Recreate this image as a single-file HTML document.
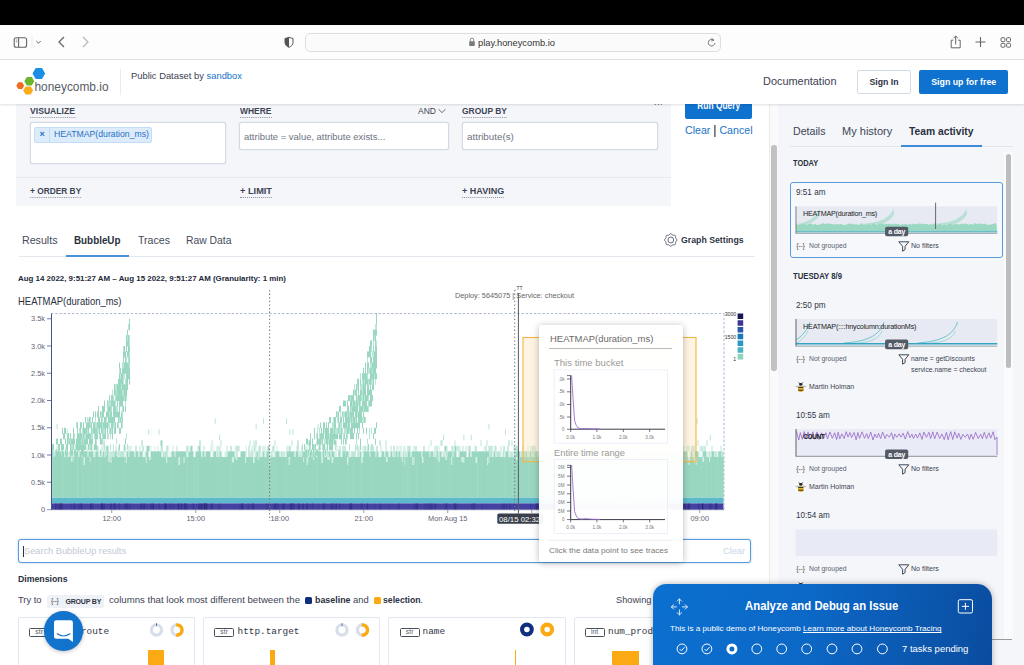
<!DOCTYPE html>
<html lang="en">
<head>
<meta charset="utf-8">
<title>Honeycomb BubbleUp</title>
<style>
*{box-sizing:border-box;margin:0;padding:0}
html,body{width:1024px;height:665px;overflow:hidden;background:#fff}
body{font-family:"Liberation Sans",sans-serif;color:#32384a;position:relative;font-size:10px}
.abs{position:absolute}
.t{position:absolute;white-space:nowrap;line-height:1}
#blackbar{left:0;top:0;width:1024px;height:25px;background:#000}
#safari{left:0;top:25px;width:1024px;height:35px;background:#fdfdfd;border-bottom:1px solid #e2e2e2}
#urlbar{left:305px;top:33px;width:416px;height:19px;border:1px solid #dedede;border-radius:5px;background:#fbfbfb}
#header{left:0;top:60px;width:1024px;height:43.7px;background:#fff;box-shadow:0 1px 2px rgba(0,0,0,.12);z-index:20}
#qb{left:16px;top:103px;width:655px;height:103px;background:#f4f6fa}
.lbl{font-size:9.3px;font-weight:bold;color:#3d4454;border-bottom:1px dotted #8a90a0;padding-bottom:1px}
.inp{position:absolute;background:#fff;border:1px solid #d3dae5;border-radius:2.5px;box-shadow:0 0 1px rgba(140,155,180,.5)}
.ph{font-size:9.6px;color:#6d7383}
a{color:#1a73c8;text-decoration:none}
.tab{font-size:11px;color:#454b5b}
.rtab{font-size:11.8px;color:#3d4454}
.day{font-size:9.2px;font-weight:bold;color:#2a3040}
.tm{font-size:9px;color:#2f3545}
.mt{font-size:7.2px;color:#5a6070}
.bt{font-size:9.5px;color:#3d4454}
</style>
</head>
<body>
<!-- top chrome -->
<div id="blackbar" class="abs"></div>
<div id="safari" class="abs"></div>
<div id="urlbar" class="abs"></div>
<div class="t" style="transform:scaleX(0.9807);transform-origin:left center;left:478px;top:38px;font-size:9.5px;color:#333">play.honeycomb.io</div>
<svg class="abs" style="left:0;top:25px" width="1024" height="35" viewBox="0 25 1024 35" fill="none" stroke="#666" stroke-width="1.1">
  <rect x="14.2" y="37.8" width="12.4" height="9.4" rx="2"/><line x1="18.6" y1="37.8" x2="18.6" y2="47.2"/>
  <line x1="15.8" y1="40" x2="17.3" y2="40" stroke-width=".7"/><line x1="15.8" y1="41.8" x2="17.3" y2="41.8" stroke-width=".7"/>
  <line x1="32" y1="36" x2="32" y2="48" stroke="#ebebeb" stroke-width="1"/>
  <path d="M36.3 41 L38.5 43.2 L40.7 41" stroke-width="1"/>
  <path d="M64 37 L59 42 L64 47" stroke-width="1.3"/>
  <path d="M83 37 L88 42 L83 47" stroke="#b5b5b5" stroke-width="1.2"/>
  <!-- shield -->
  <path d="M289 37.2 C287.5 38 286.3 38.3 285 38.4 V42.5 C285 45 287 46.5 289 47.3 C291 46.5 293 45 293 42.5 V38.4 C291.7 38.3 290.5 38 289 37.2 Z" stroke="#555" stroke-width="1"/>
  <path d="M289 37.2 C287.5 38 286.3 38.3 285 38.4 V42.5 C285 45 287 46.5 289 47.3 Z" fill="#555" stroke="none"/>
  <!-- lock -->
  <rect x="469.2" y="41.3" width="5.6" height="4.7" rx=".8" fill="#7a7a7a" stroke="none"/>
  <path d="M470.3 41.3 V39.8 A1.7 1.7 0 0 1 473.7 39.8 V41.3" stroke="#7a7a7a" stroke-width=".9"/>
  <!-- reload -->
  <path d="M713.8 40.2 A3.3 3.3 0 1 0 714.9 43" stroke="#6a6a6a" stroke-width=".9"/>
  <path d="M711.6 38.2 L714 40.3 L711.2 41" stroke="#6a6a6a" stroke-width=".8"/>
  <!-- share -->
  <path d="M953.2 40.2 H951.2 V47.8 H960.2 V40.2 H958.2" stroke-width="1"/>
  <path d="M955.7 44.5 V36.2 M953.5 38.2 L955.7 36 L957.9 38.2" stroke-width="1"/>
  <!-- plus -->
  <path d="M975.5 42 H985.5 M980.5 37 V47" stroke-width="1.1"/>
  <!-- grid -->
  <rect x="1001" y="37.7" width="3.9" height="3.9" rx="1" stroke-width="1"/><rect x="1006.6" y="37.7" width="3.9" height="3.9" rx="1" stroke-width="1"/>
  <rect x="1001" y="43.3" width="3.9" height="3.9" rx="1" stroke-width="1"/><rect x="1006.6" y="43.3" width="3.9" height="3.9" rx="1" stroke-width="1"/>
</svg>

<!-- site header -->
<div id="header" class="abs"></div>
<div class="abs" style="z-index:21;left:0;top:60px;width:1024px;height:43px">
  <svg class="abs" style="left:14px;top:6px" width="100" height="32" viewBox="14 66 100 32">
    <polygon points="32.5,73.5 35.7,68 42,68 45.2,73.5 42,79 35.7,79" fill="#1b8fe8"/>
    <polygon points="24.3,81.2 26.8,76.9 31.8,76.9 34.3,81.2 31.8,85.5 26.8,85.5" fill="#6bb72b"/>
    <polygon points="16.3,85.7 18.3,82.3 22.2,82.3 24.2,85.7 22.2,89.1 18.3,89.1" fill="#f26b21"/>
    <polygon points="23.2,90.5 25.6,86.4 30.7,86.4 33.1,90.5 30.7,94.6 25.6,94.6" fill="#fbaa19"/>
    <text x="34.5" y="91.3" font-family="Liberation Sans, sans-serif" font-size="13.2" fill="#575c66" textLength="74" lengthAdjust="spacingAndGlyphs">honeycomb.io</text>
  </svg>
  <div class="abs" style="left:120px;top:9px;width:1px;height:26px;background:#ebebeb"></div>
  <div class="t" style="transform:scaleX(0.9770);transform-origin:left center;left:131px;top:11px;font-size:9.6px;color:#3c4252">Public Dataset by <a>sandbox</a></div>
  <div class="t" style="transform:scaleX(0.9932);transform-origin:left center;left:763px;top:16px;font-size:11px;color:#3c4252">Documentation</div>
  <div class="abs" style="left:856.5px;top:10px;width:54px;height:24px;border:1px solid #d3dbe8;border-radius:2px;background:#fff"></div>
  <div class="t" style="transform:scaleX(0.9156);transform-origin:center center;left:856.5px;top:17px;width:54px;text-align:center;font-size:9.5px;font-weight:bold;color:#2c3242">Sign In</div>
  <div class="abs" style="left:918.5px;top:10px;width:89.5px;height:24px;border-radius:2px;background:#0f72cf"></div>
  <div class="t" style="transform:scaleX(0.9259);transform-origin:center center;left:918.5px;top:17px;width:89.5px;text-align:center;font-size:9.5px;font-weight:bold;color:#fff">Sign up for free</div>
</div>

<!-- query builder -->
<div id="qb" class="abs"></div>
<div class="abs" style="left:16px;top:177px;width:655px;height:1px;background:#e4e8ef"></div>
<div class="t lbl" style="transform:scaleX(0.9266);transform-origin:left center;left:30px;top:106.5px">VISUALIZE</div>
<div class="t lbl" style="transform:scaleX(0.9102);transform-origin:left center;left:239.5px;top:106.5px">WHERE</div>
<div class="t lbl" style="transform:scaleX(0.9105);transform-origin:left center;left:462px;top:106.5px">GROUP BY</div>
<div class="t" style="transform:scaleX(0.9165);transform-origin:left center;left:417.5px;top:106.5px;font-size:9.3px;color:#3d4454">AND</div>
<svg class="abs" style="left:437px;top:108px" width="10" height="6" viewBox="0 0 10 6" fill="none" stroke="#555b6b" stroke-width=".9"><path d="M1.5 1.2 L5 4.6 L8.5 1.2"/></svg>
<div class="t" style="left:654px;top:97.7px;font-size:9px;color:#555;letter-spacing:.5px">...</div>
<div class="inp" style="left:29.7px;top:122px;width:196px;height:42px"></div>
<div class="abs" style="left:34.4px;top:127px;width:117.6px;height:16px;background:#dcecfb;border:1px solid #c3ddf7;border-radius:2px"></div>
<div class="abs" style="left:49px;top:127px;width:1px;height:16px;background:#c5dcf5"></div>
<div class="t" style="left:39.5px;top:129.5px;font-size:9px;font-weight:bold;color:#2a6fc4">×</div>
<div class="t" style="transform:scaleX(0.9558);transform-origin:left center;left:54px;top:130px;font-size:9.1px;color:#2a6fc4">HEATMAP(duration_ms)</div>
<div class="inp" style="left:239px;top:122px;width:209.5px;height:28px"></div>
<div class="t ph" style="transform:scaleX(0.9832);transform-origin:left center;left:244px;top:131.5px">attribute = value, attribute exists...</div>
<div class="inp" style="left:461.7px;top:122px;width:196px;height:28px"></div>
<div class="t ph" style="transform:scaleX(1.0227);transform-origin:left center;left:466.5px;top:131.5px">attribute(s)</div>
<div class="t lbl" style="transform:scaleX(0.8968);transform-origin:left center;left:30px;top:187px">+ ORDER BY</div>
<div class="t lbl" style="transform:scaleX(0.9913);transform-origin:left center;left:239.5px;top:187px">+ LIMIT</div>
<div class="t lbl" style="transform:scaleX(0.9705);transform-origin:left center;left:462px;top:187px">+ HAVING</div>
<div class="abs" style="left:684.5px;top:95px;width:67.5px;height:23.5px;background:#0f72cf;border-radius:2px"></div>
<div class="t" style="transform:scaleX(0.8411);transform-origin:center center;left:684.5px;top:100.8px;width:67.5px;text-align:center;font-size:10px;font-weight:bold;color:#fff">Run Query</div>
<div class="t" style="transform:scaleX(0.9395);transform-origin:left center;left:684.5px;top:125px;font-size:11.3px;color:#222"><a>Clear</a> <span style="font-size:13px;line-height:0;color:#222">|</span> <a>Cancel</a></div>

<!-- results tabs -->
<div class="abs" style="left:19px;top:256px;width:736px;height:1px;background:#e3e7ee"></div>
<div class="abs" style="left:66px;top:254.5px;width:63px;height:2px;background:#4a90d9"></div>
<div class="t tab" style="transform:scaleX(0.9676);transform-origin:left center;left:22px;top:234.5px">Results</div>
<div class="t tab" style="transform:scaleX(0.8950);transform-origin:left center;left:74px;top:234.5px;font-weight:bold;font-size:11px;color:#2a3040">BubbleUp</div>
<div class="t tab" style="transform:scaleX(0.9633);transform-origin:left center;left:137.5px;top:234.5px">Traces</div>
<div class="t tab" style="transform:scaleX(0.9421);transform-origin:left center;left:186px;top:234.5px">Raw Data</div>
<svg class="abs" style="left:663px;top:233px" width="16" height="14" viewBox="0 0 16 14" fill="none" stroke="#555b6a" stroke-width=".9"><circle cx="7.8" cy="7" r="2.9"/><path d="M14.20 7.00 L13.95 7.65 L13.36 8.18 L12.77 8.61 L12.47 9.08 L12.50 9.71 L12.61 10.50 L12.51 11.24 L12.04 11.71 L11.30 11.81 L10.51 11.70 L9.88 11.67 L9.41 11.97 L8.98 12.56 L8.45 13.15 L7.80 13.40 L7.15 13.15 L6.62 12.56 L6.19 11.97 L5.72 11.67 L5.09 11.70 L4.30 11.81 L3.56 11.71 L3.09 11.24 L2.99 10.50 L3.10 9.71 L3.13 9.08 L2.83 8.61 L2.24 8.18 L1.65 7.65 L1.40 7.00 L1.65 6.35 L2.24 5.82 L2.83 5.39 L3.13 4.92 L3.10 4.29 L2.99 3.50 L3.09 2.76 L3.56 2.29 L4.30 2.19 L5.09 2.30 L5.72 2.33 L6.19 2.03 L6.62 1.44 L7.15 0.85 L7.80 0.60 L8.45 0.85 L8.98 1.44 L9.41 2.03 L9.88 2.33 L10.51 2.30 L11.30 2.19 L12.04 2.29 L12.51 2.76 L12.61 3.50 L12.50 4.29 L12.47 4.92 L12.77 5.39 L13.36 5.82 L13.95 6.35 Z"/></svg>
<div class="t" style="transform:scaleX(0.9703);transform-origin:left center;left:680.5px;top:235.5px;font-size:9px;font-weight:bold;color:#2f3545">Graph Settings</div>
<div class="t" style="transform:scaleX(1.0427);transform-origin:left center;left:17.5px;top:274.5px;font-size:7.6px;font-weight:bold;color:#222838">Aug 14 2022, 9:51:27 AM – Aug 15 2022, 9:51:27 AM (Granularity: 1 min)</div>
<div class="t" style="transform:scaleX(0.9196);transform-origin:left center;left:17.5px;top:297px;font-size:10.3px;color:#2a3040">HEATMAP(duration_ms)</div>
<div class="t" style="transform:scaleX(1.0024);transform-origin:left center;left:455px;top:292px;font-size:7.3px;color:#666">Deploy: 5645075 | Service: checkout</div>
<div class="t" style="left:515px;top:285.5px;font-size:5px;color:#444">.TT</div>

<svg class="abs" style="left:0;top:280px" width="770" height="250" viewBox="0 280 770 250" font-family="Liberation Sans, sans-serif">
<rect x="51.5" y="457.0" width="672.0" height="40.7" fill="#9ad7c1"/>
<rect x="51.5" y="497.7" width="672.0" height="5.7" fill="#5ebaca"/>
<rect x="51.5" y="503.4" width="672.0" height="6.1" fill="#4541a2"/>
<rect x="51.5" y="451.3" width="2.0" height="5.9" fill="#9ad7c1"/>
<rect x="53.5" y="451.3" width="1.0" height="5.9" fill="#b9e6d6"/>
<rect x="54.5" y="451.3" width="10.0" height="5.9" fill="#9ad7c1"/>
<rect x="64.5" y="451.3" width="1.0" height="5.9" fill="#d3f0e5"/>
<rect x="65.5" y="451.3" width="2.0" height="5.9" fill="#9ad7c1"/>
<rect x="67.5" y="451.3" width="1.0" height="5.9" fill="#b9e6d6"/>
<rect x="69.5" y="451.3" width="2.0" height="5.9" fill="#9ad7c1"/>
<rect x="72.5" y="451.3" width="1.0" height="5.9" fill="#9ad7c1"/>
<rect x="74.5" y="451.3" width="4.0" height="5.9" fill="#9ad7c1"/>
<rect x="78.5" y="451.3" width="1.0" height="5.9" fill="#d3f0e5"/>
<rect x="79.5" y="451.3" width="2.0" height="5.9" fill="#9ad7c1"/>
<rect x="81.5" y="451.3" width="1.0" height="5.9" fill="#b9e6d6"/>
<rect x="82.5" y="451.3" width="5.0" height="5.9" fill="#9ad7c1"/>
<rect x="87.5" y="451.3" width="1.0" height="5.9" fill="#b9e6d6"/>
<rect x="88.5" y="451.3" width="5.0" height="5.9" fill="#9ad7c1"/>
<rect x="93.5" y="451.3" width="1.0" height="5.9" fill="#d3f0e5"/>
<rect x="94.5" y="451.3" width="1.0" height="5.9" fill="#b9e6d6"/>
<rect x="95.5" y="451.3" width="3.0" height="5.9" fill="#9ad7c1"/>
<rect x="99.5" y="451.3" width="1.0" height="5.9" fill="#b9e6d6"/>
<rect x="100.5" y="451.3" width="1.0" height="5.9" fill="#9ad7c1"/>
<rect x="102.5" y="451.3" width="2.0" height="5.9" fill="#9ad7c1"/>
<rect x="104.5" y="451.3" width="1.0" height="5.9" fill="#b9e6d6"/>
<rect x="105.5" y="451.3" width="3.0" height="5.9" fill="#9ad7c1"/>
<rect x="108.5" y="451.3" width="1.0" height="5.9" fill="#b9e6d6"/>
<rect x="109.5" y="451.3" width="1.0" height="5.9" fill="#d3f0e5"/>
<rect x="110.5" y="451.3" width="1.0" height="5.9" fill="#9ad7c1"/>
<rect x="112.5" y="451.3" width="1.0" height="5.9" fill="#9ad7c1"/>
<rect x="113.5" y="451.3" width="1.0" height="5.9" fill="#b9e6d6"/>
<rect x="114.5" y="451.3" width="3.0" height="5.9" fill="#9ad7c1"/>
<rect x="117.5" y="451.3" width="1.0" height="5.9" fill="#d3f0e5"/>
<rect x="119.5" y="451.3" width="1.0" height="5.9" fill="#9ad7c1"/>
<rect x="120.5" y="451.3" width="1.0" height="5.9" fill="#b9e6d6"/>
<rect x="121.5" y="451.3" width="1.0" height="5.9" fill="#9ad7c1"/>
<rect x="122.5" y="451.3" width="2.0" height="5.9" fill="#b9e6d6"/>
<rect x="125.5" y="451.3" width="1.0" height="5.9" fill="#d3f0e5"/>
<rect x="126.5" y="451.3" width="2.0" height="5.9" fill="#9ad7c1"/>
<rect x="128.5" y="451.3" width="1.0" height="5.9" fill="#b9e6d6"/>
<rect x="129.5" y="451.3" width="5.0" height="5.9" fill="#9ad7c1"/>
<rect x="134.5" y="451.3" width="1.0" height="5.9" fill="#d3f0e5"/>
<rect x="135.5" y="451.3" width="3.0" height="5.9" fill="#9ad7c1"/>
<rect x="139.5" y="451.3" width="3.0" height="5.9" fill="#9ad7c1"/>
<rect x="143.5" y="451.3" width="1.0" height="5.9" fill="#d3f0e5"/>
<rect x="145.5" y="451.3" width="3.0" height="5.9" fill="#9ad7c1"/>
<rect x="150.5" y="451.3" width="11.0" height="5.9" fill="#9ad7c1"/>
<rect x="162.5" y="451.3" width="1.0" height="5.9" fill="#b9e6d6"/>
<rect x="163.5" y="451.3" width="1.0" height="5.9" fill="#9ad7c1"/>
<rect x="164.5" y="451.3" width="2.0" height="5.9" fill="#b9e6d6"/>
<rect x="166.5" y="451.3" width="1.0" height="5.9" fill="#9ad7c1"/>
<rect x="168.5" y="451.3" width="1.0" height="5.9" fill="#d3f0e5"/>
<rect x="170.5" y="451.3" width="1.0" height="5.9" fill="#d3f0e5"/>
<rect x="171.5" y="451.3" width="3.0" height="5.9" fill="#9ad7c1"/>
<rect x="174.5" y="451.3" width="1.0" height="5.9" fill="#b9e6d6"/>
<rect x="175.5" y="451.3" width="11.0" height="5.9" fill="#9ad7c1"/>
<rect x="187.5" y="451.3" width="1.0" height="5.9" fill="#b9e6d6"/>
<rect x="188.5" y="451.3" width="5.0" height="5.9" fill="#9ad7c1"/>
<rect x="195.5" y="451.3" width="6.0" height="5.9" fill="#9ad7c1"/>
<rect x="201.5" y="451.3" width="1.0" height="5.9" fill="#d3f0e5"/>
<rect x="202.5" y="451.3" width="2.0" height="5.9" fill="#9ad7c1"/>
<rect x="205.5" y="451.3" width="5.0" height="5.9" fill="#9ad7c1"/>
<rect x="212.5" y="451.3" width="1.0" height="5.9" fill="#b9e6d6"/>
<rect x="213.5" y="451.3" width="3.0" height="5.9" fill="#9ad7c1"/>
<rect x="216.5" y="451.3" width="1.0" height="5.9" fill="#d3f0e5"/>
<rect x="217.5" y="451.3" width="1.0" height="5.9" fill="#9ad7c1"/>
<rect x="218.5" y="451.3" width="1.0" height="5.9" fill="#d3f0e5"/>
<rect x="219.5" y="451.3" width="2.0" height="5.9" fill="#9ad7c1"/>
<rect x="221.5" y="451.3" width="1.0" height="5.9" fill="#d3f0e5"/>
<rect x="224.5" y="451.3" width="2.0" height="5.9" fill="#d3f0e5"/>
<rect x="226.5" y="451.3" width="1.0" height="5.9" fill="#b9e6d6"/>
<rect x="227.5" y="451.3" width="7.0" height="5.9" fill="#9ad7c1"/>
<rect x="234.5" y="451.3" width="1.0" height="5.9" fill="#b9e6d6"/>
<rect x="236.5" y="451.3" width="1.0" height="5.9" fill="#9ad7c1"/>
<rect x="240.5" y="451.3" width="5.0" height="5.9" fill="#9ad7c1"/>
<rect x="245.5" y="451.3" width="1.0" height="5.9" fill="#b9e6d6"/>
<rect x="248.5" y="451.3" width="1.0" height="5.9" fill="#9ad7c1"/>
<rect x="249.5" y="451.3" width="1.0" height="5.9" fill="#b9e6d6"/>
<rect x="250.5" y="451.3" width="1.0" height="5.9" fill="#d3f0e5"/>
<rect x="251.5" y="451.3" width="1.0" height="5.9" fill="#9ad7c1"/>
<rect x="252.5" y="451.3" width="1.0" height="5.9" fill="#b9e6d6"/>
<rect x="254.5" y="451.3" width="1.0" height="5.9" fill="#d3f0e5"/>
<rect x="255.5" y="451.3" width="1.0" height="5.9" fill="#b9e6d6"/>
<rect x="256.5" y="451.3" width="2.0" height="5.9" fill="#9ad7c1"/>
<rect x="258.5" y="451.3" width="1.0" height="5.9" fill="#d3f0e5"/>
<rect x="259.5" y="451.3" width="1.0" height="5.9" fill="#9ad7c1"/>
<rect x="260.5" y="451.3" width="1.0" height="5.9" fill="#d3f0e5"/>
<rect x="262.5" y="451.3" width="2.0" height="5.9" fill="#9ad7c1"/>
<rect x="265.5" y="451.3" width="1.0" height="5.9" fill="#b9e6d6"/>
<rect x="266.5" y="451.3" width="3.0" height="5.9" fill="#9ad7c1"/>
<rect x="270.5" y="451.3" width="1.0" height="5.9" fill="#d3f0e5"/>
<rect x="271.5" y="451.3" width="1.0" height="5.9" fill="#9ad7c1"/>
<rect x="272.5" y="451.3" width="1.0" height="5.9" fill="#d3f0e5"/>
<rect x="274.5" y="451.3" width="1.0" height="5.9" fill="#b9e6d6"/>
<rect x="275.5" y="451.3" width="4.0" height="5.9" fill="#9ad7c1"/>
<rect x="280.5" y="451.3" width="1.0" height="5.9" fill="#b9e6d6"/>
<rect x="281.5" y="451.3" width="1.0" height="5.9" fill="#9ad7c1"/>
<rect x="283.5" y="451.3" width="1.0" height="5.9" fill="#9ad7c1"/>
<rect x="285.5" y="451.3" width="1.0" height="5.9" fill="#d3f0e5"/>
<rect x="286.5" y="451.3" width="8.0" height="5.9" fill="#9ad7c1"/>
<rect x="295.5" y="451.3" width="3.0" height="5.9" fill="#9ad7c1"/>
<rect x="299.5" y="451.3" width="1.0" height="5.9" fill="#9ad7c1"/>
<rect x="301.5" y="451.3" width="7.0" height="5.9" fill="#9ad7c1"/>
<rect x="308.5" y="451.3" width="1.0" height="5.9" fill="#d3f0e5"/>
<rect x="309.5" y="451.3" width="2.0" height="5.9" fill="#9ad7c1"/>
<rect x="311.5" y="451.3" width="1.0" height="5.9" fill="#b9e6d6"/>
<rect x="312.5" y="451.3" width="4.0" height="5.9" fill="#9ad7c1"/>
<rect x="316.5" y="451.3" width="1.0" height="5.9" fill="#d3f0e5"/>
<rect x="317.5" y="451.3" width="4.0" height="5.9" fill="#9ad7c1"/>
<rect x="321.5" y="451.3" width="1.0" height="5.9" fill="#d3f0e5"/>
<rect x="322.5" y="451.3" width="2.0" height="5.9" fill="#9ad7c1"/>
<rect x="324.5" y="451.3" width="1.0" height="5.9" fill="#b9e6d6"/>
<rect x="326.5" y="451.3" width="1.0" height="5.9" fill="#9ad7c1"/>
<rect x="327.5" y="451.3" width="1.0" height="5.9" fill="#b9e6d6"/>
<rect x="328.5" y="451.3" width="2.0" height="5.9" fill="#9ad7c1"/>
<rect x="330.5" y="451.3" width="1.0" height="5.9" fill="#b9e6d6"/>
<rect x="331.5" y="451.3" width="3.0" height="5.9" fill="#9ad7c1"/>
<rect x="335.5" y="451.3" width="1.0" height="5.9" fill="#b9e6d6"/>
<rect x="338.5" y="451.3" width="2.0" height="5.9" fill="#9ad7c1"/>
<rect x="341.5" y="451.3" width="1.0" height="5.9" fill="#d3f0e5"/>
<rect x="342.5" y="451.3" width="6.0" height="5.9" fill="#9ad7c1"/>
<rect x="348.5" y="451.3" width="1.0" height="5.9" fill="#b9e6d6"/>
<rect x="349.5" y="451.3" width="1.0" height="5.9" fill="#d3f0e5"/>
<rect x="351.5" y="451.3" width="1.0" height="5.9" fill="#9ad7c1"/>
<rect x="352.5" y="451.3" width="2.0" height="5.9" fill="#b9e6d6"/>
<rect x="354.5" y="451.3" width="1.0" height="5.9" fill="#9ad7c1"/>
<rect x="357.5" y="451.3" width="1.0" height="5.9" fill="#9ad7c1"/>
<rect x="359.5" y="451.3" width="2.0" height="5.9" fill="#9ad7c1"/>
<rect x="362.5" y="451.3" width="1.0" height="5.9" fill="#d3f0e5"/>
<rect x="363.5" y="451.3" width="6.0" height="5.9" fill="#9ad7c1"/>
<rect x="369.5" y="451.3" width="1.0" height="5.9" fill="#b9e6d6"/>
<rect x="370.5" y="451.3" width="5.0" height="5.9" fill="#9ad7c1"/>
<rect x="375.5" y="451.3" width="1.0" height="5.9" fill="#b9e6d6"/>
<rect x="376.5" y="451.3" width="2.0" height="5.9" fill="#9ad7c1"/>
<rect x="379.5" y="451.3" width="1.0" height="5.9" fill="#d3f0e5"/>
<rect x="381.5" y="451.3" width="3.0" height="5.9" fill="#9ad7c1"/>
<rect x="384.5" y="451.3" width="1.0" height="5.9" fill="#d3f0e5"/>
<rect x="385.5" y="451.3" width="3.0" height="5.9" fill="#9ad7c1"/>
<rect x="389.5" y="451.3" width="1.0" height="5.9" fill="#d3f0e5"/>
<rect x="390.5" y="451.3" width="2.0" height="5.9" fill="#9ad7c1"/>
<rect x="393.5" y="451.3" width="1.0" height="5.9" fill="#9ad7c1"/>
<rect x="394.5" y="451.3" width="1.0" height="5.9" fill="#b9e6d6"/>
<rect x="395.5" y="451.3" width="2.0" height="5.9" fill="#9ad7c1"/>
<rect x="397.5" y="451.3" width="1.0" height="5.9" fill="#b9e6d6"/>
<rect x="398.5" y="451.3" width="2.0" height="5.9" fill="#9ad7c1"/>
<rect x="401.5" y="451.3" width="1.0" height="5.9" fill="#b9e6d6"/>
<rect x="402.5" y="451.3" width="1.0" height="5.9" fill="#d3f0e5"/>
<rect x="403.5" y="451.3" width="1.0" height="5.9" fill="#9ad7c1"/>
<rect x="405.5" y="451.3" width="1.0" height="5.9" fill="#9ad7c1"/>
<rect x="407.5" y="451.3" width="3.0" height="5.9" fill="#9ad7c1"/>
<rect x="411.5" y="451.3" width="10.0" height="5.9" fill="#9ad7c1"/>
<rect x="421.5" y="451.3" width="1.0" height="5.9" fill="#b9e6d6"/>
<rect x="422.5" y="451.3" width="7.0" height="5.9" fill="#9ad7c1"/>
<rect x="429.5" y="451.3" width="1.0" height="5.9" fill="#b9e6d6"/>
<rect x="430.5" y="451.3" width="3.0" height="5.9" fill="#9ad7c1"/>
<rect x="434.5" y="451.3" width="1.0" height="5.9" fill="#9ad7c1"/>
<rect x="435.5" y="451.3" width="1.0" height="5.9" fill="#d3f0e5"/>
<rect x="436.5" y="451.3" width="2.0" height="5.9" fill="#9ad7c1"/>
<rect x="438.5" y="451.3" width="1.0" height="5.9" fill="#d3f0e5"/>
<rect x="439.5" y="451.3" width="2.0" height="5.9" fill="#9ad7c1"/>
<rect x="441.5" y="451.3" width="1.0" height="5.9" fill="#b9e6d6"/>
<rect x="443.5" y="451.3" width="1.0" height="5.9" fill="#9ad7c1"/>
<rect x="444.5" y="451.3" width="1.0" height="5.9" fill="#d3f0e5"/>
<rect x="445.5" y="451.3" width="2.0" height="5.9" fill="#b9e6d6"/>
<rect x="447.5" y="451.3" width="5.0" height="5.9" fill="#9ad7c1"/>
<rect x="452.5" y="451.3" width="1.0" height="5.9" fill="#b9e6d6"/>
<rect x="453.5" y="451.3" width="3.0" height="5.9" fill="#9ad7c1"/>
<rect x="458.5" y="451.3" width="1.0" height="5.9" fill="#b9e6d6"/>
<rect x="459.5" y="451.3" width="7.0" height="5.9" fill="#9ad7c1"/>
<rect x="468.5" y="451.3" width="2.0" height="5.9" fill="#9ad7c1"/>
<rect x="471.5" y="451.3" width="18.0" height="5.9" fill="#9ad7c1"/>
<rect x="489.5" y="451.3" width="3.0" height="5.9" fill="#b9e6d6"/>
<rect x="493.5" y="451.3" width="2.0" height="5.9" fill="#9ad7c1"/>
<rect x="496.5" y="451.3" width="1.0" height="5.9" fill="#9ad7c1"/>
<rect x="497.5" y="451.3" width="2.0" height="5.9" fill="#b9e6d6"/>
<rect x="499.5" y="451.3" width="1.0" height="5.9" fill="#9ad7c1"/>
<rect x="500.5" y="451.3" width="1.0" height="5.9" fill="#d3f0e5"/>
<rect x="502.5" y="451.3" width="2.0" height="5.9" fill="#b9e6d6"/>
<rect x="504.5" y="451.3" width="1.0" height="5.9" fill="#d3f0e5"/>
<rect x="505.5" y="451.3" width="3.0" height="5.9" fill="#9ad7c1"/>
<rect x="508.5" y="451.3" width="3.0" height="5.9" fill="#d3f0e5"/>
<rect x="511.5" y="451.3" width="1.0" height="5.9" fill="#9ad7c1"/>
<rect x="513.5" y="451.3" width="2.0" height="5.9" fill="#b9e6d6"/>
<rect x="515.5" y="451.3" width="5.0" height="5.9" fill="#9ad7c1"/>
<rect x="520.5" y="451.3" width="1.0" height="5.9" fill="#d3f0e5"/>
<rect x="521.5" y="451.3" width="1.0" height="5.9" fill="#9ad7c1"/>
<rect x="522.5" y="451.3" width="3.0" height="5.9" fill="#b9e6d6"/>
<rect x="525.5" y="451.3" width="2.0" height="5.9" fill="#9ad7c1"/>
<rect x="527.5" y="451.3" width="1.0" height="5.9" fill="#d3f0e5"/>
<rect x="528.5" y="451.3" width="1.0" height="5.9" fill="#b9e6d6"/>
<rect x="529.5" y="451.3" width="2.0" height="5.9" fill="#9ad7c1"/>
<rect x="531.5" y="451.3" width="1.0" height="5.9" fill="#b9e6d6"/>
<rect x="532.5" y="451.3" width="1.0" height="5.9" fill="#9ad7c1"/>
<rect x="533.5" y="451.3" width="1.0" height="5.9" fill="#b9e6d6"/>
<rect x="534.5" y="451.3" width="3.0" height="5.9" fill="#9ad7c1"/>
<rect x="537.5" y="451.3" width="1.0" height="5.9" fill="#b9e6d6"/>
<rect x="538.5" y="451.3" width="1.0" height="5.9" fill="#9ad7c1"/>
<rect x="539.5" y="451.3" width="1.0" height="5.9" fill="#b9e6d6"/>
<rect x="541.5" y="451.3" width="3.0" height="5.9" fill="#9ad7c1"/>
<rect x="544.5" y="451.3" width="1.0" height="5.9" fill="#b9e6d6"/>
<rect x="545.5" y="451.3" width="1.0" height="5.9" fill="#d3f0e5"/>
<rect x="546.5" y="451.3" width="2.0" height="5.9" fill="#b9e6d6"/>
<rect x="548.5" y="451.3" width="3.0" height="5.9" fill="#9ad7c1"/>
<rect x="551.5" y="451.3" width="1.0" height="5.9" fill="#b9e6d6"/>
<rect x="552.5" y="451.3" width="5.0" height="5.9" fill="#9ad7c1"/>
<rect x="557.5" y="451.3" width="3.0" height="5.9" fill="#b9e6d6"/>
<rect x="560.5" y="451.3" width="5.0" height="5.9" fill="#9ad7c1"/>
<rect x="566.5" y="451.3" width="1.0" height="5.9" fill="#9ad7c1"/>
<rect x="569.5" y="451.3" width="2.0" height="5.9" fill="#9ad7c1"/>
<rect x="571.5" y="451.3" width="1.0" height="5.9" fill="#d3f0e5"/>
<rect x="573.5" y="451.3" width="3.0" height="5.9" fill="#9ad7c1"/>
<rect x="577.5" y="451.3" width="4.0" height="5.9" fill="#9ad7c1"/>
<rect x="582.5" y="451.3" width="1.0" height="5.9" fill="#9ad7c1"/>
<rect x="583.5" y="451.3" width="1.0" height="5.9" fill="#d3f0e5"/>
<rect x="584.5" y="451.3" width="1.0" height="5.9" fill="#9ad7c1"/>
<rect x="586.5" y="451.3" width="1.0" height="5.9" fill="#b9e6d6"/>
<rect x="587.5" y="451.3" width="1.0" height="5.9" fill="#9ad7c1"/>
<rect x="589.5" y="451.3" width="9.0" height="5.9" fill="#9ad7c1"/>
<rect x="599.5" y="451.3" width="1.0" height="5.9" fill="#9ad7c1"/>
<rect x="600.5" y="451.3" width="1.0" height="5.9" fill="#b9e6d6"/>
<rect x="601.5" y="451.3" width="1.0" height="5.9" fill="#d3f0e5"/>
<rect x="602.5" y="451.3" width="1.0" height="5.9" fill="#9ad7c1"/>
<rect x="604.5" y="451.3" width="1.0" height="5.9" fill="#b9e6d6"/>
<rect x="606.5" y="451.3" width="3.0" height="5.9" fill="#9ad7c1"/>
<rect x="610.5" y="451.3" width="6.0" height="5.9" fill="#9ad7c1"/>
<rect x="616.5" y="451.3" width="1.0" height="5.9" fill="#d3f0e5"/>
<rect x="617.5" y="451.3" width="1.0" height="5.9" fill="#9ad7c1"/>
<rect x="619.5" y="451.3" width="5.0" height="5.9" fill="#9ad7c1"/>
<rect x="626.5" y="451.3" width="1.0" height="5.9" fill="#d3f0e5"/>
<rect x="627.5" y="451.3" width="1.0" height="5.9" fill="#b9e6d6"/>
<rect x="630.5" y="451.3" width="1.0" height="5.9" fill="#9ad7c1"/>
<rect x="631.5" y="451.3" width="1.0" height="5.9" fill="#b9e6d6"/>
<rect x="632.5" y="451.3" width="1.0" height="5.9" fill="#9ad7c1"/>
<rect x="633.5" y="451.3" width="1.0" height="5.9" fill="#b9e6d6"/>
<rect x="634.5" y="451.3" width="1.0" height="5.9" fill="#9ad7c1"/>
<rect x="635.5" y="451.3" width="2.0" height="5.9" fill="#b9e6d6"/>
<rect x="637.5" y="451.3" width="2.0" height="5.9" fill="#9ad7c1"/>
<rect x="640.5" y="451.3" width="4.0" height="5.9" fill="#9ad7c1"/>
<rect x="644.5" y="451.3" width="1.0" height="5.9" fill="#b9e6d6"/>
<rect x="646.5" y="451.3" width="1.0" height="5.9" fill="#9ad7c1"/>
<rect x="647.5" y="451.3" width="1.0" height="5.9" fill="#b9e6d6"/>
<rect x="648.5" y="451.3" width="6.0" height="5.9" fill="#9ad7c1"/>
<rect x="655.5" y="451.3" width="2.0" height="5.9" fill="#9ad7c1"/>
<rect x="659.5" y="451.3" width="9.0" height="5.9" fill="#9ad7c1"/>
<rect x="669.5" y="451.3" width="1.0" height="5.9" fill="#b9e6d6"/>
<rect x="670.5" y="451.3" width="7.0" height="5.9" fill="#9ad7c1"/>
<rect x="678.5" y="451.3" width="2.0" height="5.9" fill="#9ad7c1"/>
<rect x="680.5" y="451.3" width="1.0" height="5.9" fill="#b9e6d6"/>
<rect x="682.5" y="451.3" width="5.0" height="5.9" fill="#9ad7c1"/>
<rect x="690.5" y="451.3" width="2.0" height="5.9" fill="#9ad7c1"/>
<rect x="692.5" y="451.3" width="1.0" height="5.9" fill="#b9e6d6"/>
<rect x="694.5" y="451.3" width="4.0" height="5.9" fill="#9ad7c1"/>
<rect x="699.5" y="451.3" width="1.0" height="5.9" fill="#d3f0e5"/>
<rect x="702.5" y="451.3" width="4.0" height="5.9" fill="#9ad7c1"/>
<rect x="706.5" y="451.3" width="1.0" height="5.9" fill="#b9e6d6"/>
<rect x="708.5" y="451.3" width="2.0" height="5.9" fill="#b9e6d6"/>
<rect x="710.5" y="451.3" width="1.0" height="5.9" fill="#d3f0e5"/>
<rect x="711.5" y="451.3" width="3.0" height="5.9" fill="#9ad7c1"/>
<rect x="714.5" y="451.3" width="1.0" height="5.9" fill="#d3f0e5"/>
<rect x="715.5" y="451.3" width="1.0" height="5.9" fill="#9ad7c1"/>
<rect x="717.5" y="451.3" width="1.0" height="5.9" fill="#b9e6d6"/>
<rect x="718.5" y="451.3" width="3.0" height="5.9" fill="#9ad7c1"/>
<rect x="721.5" y="451.3" width="2.0" height="5.9" fill="#b9e6d6"/>
<rect x="51.5" y="445.8" width="2.0" height="5.6" fill="#9ad7c1"/>
<rect x="56.5" y="445.8" width="1.0" height="5.6" fill="#b9e6d6"/>
<rect x="58.5" y="445.8" width="1.0" height="5.6" fill="#9ad7c1"/>
<rect x="65.5" y="445.8" width="1.0" height="5.6" fill="#b9e6d6"/>
<rect x="66.5" y="445.8" width="1.0" height="5.6" fill="#d3f0e5"/>
<rect x="70.5" y="445.8" width="1.0" height="5.6" fill="#9ad7c1"/>
<rect x="74.5" y="445.8" width="1.0" height="5.6" fill="#d3f0e5"/>
<rect x="77.5" y="445.8" width="1.0" height="5.6" fill="#b9e6d6"/>
<rect x="78.5" y="445.8" width="1.0" height="5.6" fill="#9ad7c1"/>
<rect x="82.5" y="445.8" width="1.0" height="5.6" fill="#b9e6d6"/>
<rect x="86.5" y="445.8" width="1.0" height="5.6" fill="#b9e6d6"/>
<rect x="90.5" y="445.8" width="2.0" height="5.6" fill="#b9e6d6"/>
<rect x="93.5" y="445.8" width="1.0" height="5.6" fill="#d3f0e5"/>
<rect x="96.5" y="445.8" width="2.0" height="5.6" fill="#b9e6d6"/>
<rect x="101.5" y="445.8" width="1.0" height="5.6" fill="#b9e6d6"/>
<rect x="103.5" y="445.8" width="1.0" height="5.6" fill="#b9e6d6"/>
<rect x="105.5" y="445.8" width="1.0" height="5.6" fill="#b9e6d6"/>
<rect x="106.5" y="445.8" width="2.0" height="5.6" fill="#9ad7c1"/>
<rect x="115.5" y="445.8" width="1.0" height="5.6" fill="#b9e6d6"/>
<rect x="118.5" y="445.8" width="1.0" height="5.6" fill="#9ad7c1"/>
<rect x="123.5" y="445.8" width="1.0" height="5.6" fill="#b9e6d6"/>
<rect x="124.5" y="445.8" width="1.0" height="5.6" fill="#9ad7c1"/>
<rect x="125.5" y="445.8" width="1.0" height="5.6" fill="#d3f0e5"/>
<rect x="128.5" y="445.8" width="1.0" height="5.6" fill="#b9e6d6"/>
<rect x="130.5" y="445.8" width="1.0" height="5.6" fill="#b9e6d6"/>
<rect x="135.5" y="445.8" width="1.0" height="5.6" fill="#9ad7c1"/>
<rect x="139.5" y="445.8" width="1.0" height="5.6" fill="#b9e6d6"/>
<rect x="142.5" y="445.8" width="1.0" height="5.6" fill="#9ad7c1"/>
<rect x="146.5" y="445.8" width="3.0" height="5.6" fill="#9ad7c1"/>
<rect x="150.5" y="445.8" width="1.0" height="5.6" fill="#d3f0e5"/>
<rect x="154.5" y="445.8" width="1.0" height="5.6" fill="#d3f0e5"/>
<rect x="157.5" y="445.8" width="1.0" height="5.6" fill="#d3f0e5"/>
<rect x="160.5" y="445.8" width="1.0" height="5.6" fill="#d3f0e5"/>
<rect x="161.5" y="445.8" width="1.0" height="5.6" fill="#9ad7c1"/>
<rect x="166.5" y="445.8" width="1.0" height="5.6" fill="#9ad7c1"/>
<rect x="167.5" y="445.8" width="1.0" height="5.6" fill="#b9e6d6"/>
<rect x="172.5" y="445.8" width="1.0" height="5.6" fill="#d3f0e5"/>
<rect x="176.5" y="445.8" width="1.0" height="5.6" fill="#b9e6d6"/>
<rect x="186.5" y="445.8" width="1.0" height="5.6" fill="#9ad7c1"/>
<rect x="187.5" y="445.8" width="1.0" height="5.6" fill="#b9e6d6"/>
<rect x="189.5" y="445.8" width="1.0" height="5.6" fill="#d3f0e5"/>
<rect x="190.5" y="445.8" width="2.0" height="5.6" fill="#9ad7c1"/>
<rect x="197.5" y="445.8" width="1.0" height="5.6" fill="#d3f0e5"/>
<rect x="198.5" y="445.8" width="2.0" height="5.6" fill="#9ad7c1"/>
<rect x="203.5" y="445.8" width="1.0" height="5.6" fill="#b9e6d6"/>
<rect x="210.5" y="445.8" width="1.0" height="5.6" fill="#b9e6d6"/>
<rect x="212.5" y="445.8" width="1.0" height="5.6" fill="#d3f0e5"/>
<rect x="216.5" y="445.8" width="1.0" height="5.6" fill="#b9e6d6"/>
<rect x="217.5" y="445.8" width="2.0" height="5.6" fill="#d3f0e5"/>
<rect x="219.5" y="445.8" width="1.0" height="5.6" fill="#b9e6d6"/>
<rect x="226.5" y="445.8" width="1.0" height="5.6" fill="#b9e6d6"/>
<rect x="230.5" y="445.8" width="1.0" height="5.6" fill="#9ad7c1"/>
<rect x="235.5" y="445.8" width="1.0" height="5.6" fill="#9ad7c1"/>
<rect x="236.5" y="445.8" width="1.0" height="5.6" fill="#d3f0e5"/>
<rect x="237.5" y="445.8" width="1.0" height="5.6" fill="#9ad7c1"/>
<rect x="238.5" y="445.8" width="1.0" height="5.6" fill="#b9e6d6"/>
<rect x="245.5" y="445.8" width="1.0" height="5.6" fill="#d3f0e5"/>
<rect x="248.5" y="445.8" width="1.0" height="5.6" fill="#9ad7c1"/>
<rect x="251.5" y="445.8" width="1.0" height="5.6" fill="#b9e6d6"/>
<rect x="253.5" y="445.8" width="2.0" height="5.6" fill="#b9e6d6"/>
<rect x="255.5" y="445.8" width="1.0" height="5.6" fill="#d3f0e5"/>
<rect x="258.5" y="445.8" width="1.0" height="5.6" fill="#b9e6d6"/>
<rect x="259.5" y="445.8" width="1.0" height="5.6" fill="#9ad7c1"/>
<rect x="262.5" y="445.8" width="1.0" height="5.6" fill="#b9e6d6"/>
<rect x="264.5" y="445.8" width="1.0" height="5.6" fill="#b9e6d6"/>
<rect x="267.5" y="445.8" width="2.0" height="5.6" fill="#9ad7c1"/>
<rect x="272.5" y="445.8" width="1.0" height="5.6" fill="#9ad7c1"/>
<rect x="273.5" y="445.8" width="1.0" height="5.6" fill="#b9e6d6"/>
<rect x="276.5" y="445.8" width="1.0" height="5.6" fill="#d3f0e5"/>
<rect x="286.5" y="445.8" width="1.0" height="5.6" fill="#b9e6d6"/>
<rect x="288.5" y="445.8" width="1.0" height="5.6" fill="#b9e6d6"/>
<rect x="289.5" y="445.8" width="1.0" height="5.6" fill="#9ad7c1"/>
<rect x="296.5" y="445.8" width="1.0" height="5.6" fill="#b9e6d6"/>
<rect x="297.5" y="445.8" width="1.0" height="5.6" fill="#9ad7c1"/>
<rect x="301.5" y="445.8" width="1.0" height="5.6" fill="#9ad7c1"/>
<rect x="305.5" y="445.8" width="1.0" height="5.6" fill="#b9e6d6"/>
<rect x="306.5" y="445.8" width="1.0" height="5.6" fill="#d3f0e5"/>
<rect x="309.5" y="445.8" width="1.0" height="5.6" fill="#9ad7c1"/>
<rect x="313.5" y="445.8" width="2.0" height="5.6" fill="#b9e6d6"/>
<rect x="318.5" y="445.8" width="1.0" height="5.6" fill="#9ad7c1"/>
<rect x="324.5" y="445.8" width="1.0" height="5.6" fill="#b9e6d6"/>
<rect x="326.5" y="445.8" width="1.0" height="5.6" fill="#b9e6d6"/>
<rect x="330.5" y="445.8" width="2.0" height="5.6" fill="#b9e6d6"/>
<rect x="335.5" y="445.8" width="1.0" height="5.6" fill="#b9e6d6"/>
<rect x="336.5" y="445.8" width="1.0" height="5.6" fill="#d3f0e5"/>
<rect x="339.5" y="445.8" width="1.0" height="5.6" fill="#9ad7c1"/>
<rect x="342.5" y="445.8" width="1.0" height="5.6" fill="#9ad7c1"/>
<rect x="344.5" y="445.8" width="1.0" height="5.6" fill="#9ad7c1"/>
<rect x="355.5" y="445.8" width="1.0" height="5.6" fill="#9ad7c1"/>
<rect x="358.5" y="445.8" width="1.0" height="5.6" fill="#b9e6d6"/>
<rect x="362.5" y="445.8" width="1.0" height="5.6" fill="#b9e6d6"/>
<rect x="364.5" y="445.8" width="1.0" height="5.6" fill="#9ad7c1"/>
<rect x="365.5" y="445.8" width="1.0" height="5.6" fill="#b9e6d6"/>
<rect x="367.5" y="445.8" width="1.0" height="5.6" fill="#9ad7c1"/>
<rect x="370.5" y="445.8" width="1.0" height="5.6" fill="#9ad7c1"/>
<rect x="372.5" y="445.8" width="1.0" height="5.6" fill="#9ad7c1"/>
<rect x="376.5" y="445.8" width="1.0" height="5.6" fill="#9ad7c1"/>
<rect x="380.5" y="445.8" width="1.0" height="5.6" fill="#b9e6d6"/>
<rect x="385.5" y="445.8" width="1.0" height="5.6" fill="#b9e6d6"/>
<rect x="390.5" y="445.8" width="1.0" height="5.6" fill="#b9e6d6"/>
<rect x="393.5" y="445.8" width="1.0" height="5.6" fill="#9ad7c1"/>
<rect x="396.5" y="445.8" width="1.0" height="5.6" fill="#b9e6d6"/>
<rect x="398.5" y="445.8" width="1.0" height="5.6" fill="#d3f0e5"/>
<rect x="400.5" y="445.8" width="1.0" height="5.6" fill="#b9e6d6"/>
<rect x="403.5" y="445.8" width="1.0" height="5.6" fill="#b9e6d6"/>
<rect x="404.5" y="445.8" width="1.0" height="5.6" fill="#d3f0e5"/>
<rect x="407.5" y="445.8" width="1.0" height="5.6" fill="#9ad7c1"/>
<rect x="408.5" y="445.8" width="2.0" height="5.6" fill="#b9e6d6"/>
<rect x="413.5" y="445.8" width="1.0" height="5.6" fill="#b9e6d6"/>
<rect x="415.5" y="445.8" width="1.0" height="5.6" fill="#9ad7c1"/>
<rect x="423.5" y="445.8" width="1.0" height="5.6" fill="#9ad7c1"/>
<rect x="428.5" y="445.8" width="1.0" height="5.6" fill="#d3f0e5"/>
<rect x="434.5" y="445.8" width="1.0" height="5.6" fill="#b9e6d6"/>
<rect x="436.5" y="445.8" width="1.0" height="5.6" fill="#9ad7c1"/>
<rect x="438.5" y="445.8" width="1.0" height="5.6" fill="#d3f0e5"/>
<rect x="444.5" y="445.8" width="2.0" height="5.6" fill="#9ad7c1"/>
<rect x="446.5" y="445.8" width="1.0" height="5.6" fill="#b9e6d6"/>
<rect x="451.5" y="445.8" width="2.0" height="5.6" fill="#b9e6d6"/>
<rect x="454.5" y="445.8" width="2.0" height="5.6" fill="#9ad7c1"/>
<rect x="457.5" y="445.8" width="1.0" height="5.6" fill="#9ad7c1"/>
<rect x="459.5" y="445.8" width="1.0" height="5.6" fill="#b9e6d6"/>
<rect x="462.5" y="445.8" width="1.0" height="5.6" fill="#b9e6d6"/>
<rect x="465.5" y="445.8" width="1.0" height="5.6" fill="#b9e6d6"/>
<rect x="467.5" y="445.8" width="1.0" height="5.6" fill="#d3f0e5"/>
<rect x="468.5" y="445.8" width="1.0" height="5.6" fill="#b9e6d6"/>
<rect x="469.5" y="445.8" width="1.0" height="5.6" fill="#9ad7c1"/>
<rect x="474.5" y="445.8" width="1.0" height="5.6" fill="#d3f0e5"/>
<rect x="475.5" y="445.8" width="1.0" height="5.6" fill="#9ad7c1"/>
<rect x="483.5" y="445.8" width="1.0" height="5.6" fill="#d3f0e5"/>
<rect x="485.5" y="445.8" width="1.0" height="5.6" fill="#9ad7c1"/>
<rect x="488.5" y="445.8" width="1.0" height="5.6" fill="#b9e6d6"/>
<rect x="489.5" y="445.8" width="1.0" height="5.6" fill="#9ad7c1"/>
<rect x="491.5" y="445.8" width="1.0" height="5.6" fill="#9ad7c1"/>
<rect x="494.5" y="445.8" width="2.0" height="5.6" fill="#b9e6d6"/>
<rect x="500.5" y="445.8" width="1.0" height="5.6" fill="#b9e6d6"/>
<rect x="503.5" y="445.8" width="1.0" height="5.6" fill="#9ad7c1"/>
<rect x="507.5" y="445.8" width="1.0" height="5.6" fill="#9ad7c1"/>
<rect x="513.5" y="445.8" width="1.0" height="5.6" fill="#b9e6d6"/>
<rect x="514.5" y="445.8" width="1.0" height="5.6" fill="#9ad7c1"/>
<rect x="515.5" y="445.8" width="1.0" height="5.6" fill="#b9e6d6"/>
<rect x="516.5" y="445.8" width="1.0" height="5.6" fill="#9ad7c1"/>
<rect x="522.5" y="445.8" width="1.0" height="5.6" fill="#d3f0e5"/>
<rect x="527.5" y="445.8" width="1.0" height="5.6" fill="#d3f0e5"/>
<rect x="530.5" y="445.8" width="1.0" height="5.6" fill="#b9e6d6"/>
<rect x="532.5" y="445.8" width="1.0" height="5.6" fill="#9ad7c1"/>
<rect x="533.5" y="445.8" width="1.0" height="5.6" fill="#d3f0e5"/>
<rect x="534.5" y="445.8" width="1.0" height="5.6" fill="#b9e6d6"/>
<rect x="541.5" y="445.8" width="1.0" height="5.6" fill="#b9e6d6"/>
<rect x="555.5" y="445.8" width="1.0" height="5.6" fill="#b9e6d6"/>
<rect x="557.5" y="445.8" width="1.0" height="5.6" fill="#9ad7c1"/>
<rect x="559.5" y="445.8" width="1.0" height="5.6" fill="#b9e6d6"/>
<rect x="560.5" y="445.8" width="2.0" height="5.6" fill="#9ad7c1"/>
<rect x="564.5" y="445.8" width="1.0" height="5.6" fill="#b9e6d6"/>
<rect x="565.5" y="445.8" width="2.0" height="5.6" fill="#9ad7c1"/>
<rect x="571.5" y="445.8" width="1.0" height="5.6" fill="#9ad7c1"/>
<rect x="577.5" y="445.8" width="1.0" height="5.6" fill="#9ad7c1"/>
<rect x="581.5" y="445.8" width="1.0" height="5.6" fill="#9ad7c1"/>
<rect x="582.5" y="445.8" width="1.0" height="5.6" fill="#b9e6d6"/>
<rect x="583.5" y="445.8" width="2.0" height="5.6" fill="#9ad7c1"/>
<rect x="590.5" y="445.8" width="1.0" height="5.6" fill="#d3f0e5"/>
<rect x="591.5" y="445.8" width="2.0" height="5.6" fill="#9ad7c1"/>
<rect x="594.5" y="445.8" width="1.0" height="5.6" fill="#b9e6d6"/>
<rect x="597.5" y="445.8" width="1.0" height="5.6" fill="#9ad7c1"/>
<rect x="598.5" y="445.8" width="2.0" height="5.6" fill="#d3f0e5"/>
<rect x="607.5" y="445.8" width="1.0" height="5.6" fill="#9ad7c1"/>
<rect x="614.5" y="445.8" width="1.0" height="5.6" fill="#b9e6d6"/>
<rect x="616.5" y="445.8" width="1.0" height="5.6" fill="#9ad7c1"/>
<rect x="618.5" y="445.8" width="1.0" height="5.6" fill="#b9e6d6"/>
<rect x="619.5" y="445.8" width="1.0" height="5.6" fill="#9ad7c1"/>
<rect x="620.5" y="445.8" width="1.0" height="5.6" fill="#b9e6d6"/>
<rect x="623.5" y="445.8" width="1.0" height="5.6" fill="#9ad7c1"/>
<rect x="627.5" y="445.8" width="1.0" height="5.6" fill="#b9e6d6"/>
<rect x="631.5" y="445.8" width="1.0" height="5.6" fill="#d3f0e5"/>
<rect x="633.5" y="445.8" width="1.0" height="5.6" fill="#d3f0e5"/>
<rect x="634.5" y="445.8" width="1.0" height="5.6" fill="#b9e6d6"/>
<rect x="637.5" y="445.8" width="1.0" height="5.6" fill="#9ad7c1"/>
<rect x="639.5" y="445.8" width="1.0" height="5.6" fill="#9ad7c1"/>
<rect x="648.5" y="445.8" width="1.0" height="5.6" fill="#9ad7c1"/>
<rect x="650.5" y="445.8" width="1.0" height="5.6" fill="#9ad7c1"/>
<rect x="651.5" y="445.8" width="1.0" height="5.6" fill="#b9e6d6"/>
<rect x="652.5" y="445.8" width="1.0" height="5.6" fill="#d3f0e5"/>
<rect x="657.5" y="445.8" width="1.0" height="5.6" fill="#b9e6d6"/>
<rect x="665.5" y="445.8" width="1.0" height="5.6" fill="#b9e6d6"/>
<rect x="669.5" y="445.8" width="1.0" height="5.6" fill="#b9e6d6"/>
<rect x="673.5" y="445.8" width="1.0" height="5.6" fill="#b9e6d6"/>
<rect x="676.5" y="445.8" width="2.0" height="5.6" fill="#b9e6d6"/>
<rect x="681.5" y="445.8" width="2.0" height="5.6" fill="#b9e6d6"/>
<rect x="683.5" y="445.8" width="1.0" height="5.6" fill="#d3f0e5"/>
<rect x="686.5" y="445.8" width="1.0" height="5.6" fill="#b9e6d6"/>
<rect x="688.5" y="445.8" width="1.0" height="5.6" fill="#b9e6d6"/>
<rect x="691.5" y="445.8" width="1.0" height="5.6" fill="#9ad7c1"/>
<rect x="693.5" y="445.8" width="1.0" height="5.6" fill="#9ad7c1"/>
<rect x="699.5" y="445.8" width="1.0" height="5.6" fill="#b9e6d6"/>
<rect x="701.5" y="445.8" width="1.0" height="5.6" fill="#9ad7c1"/>
<rect x="702.5" y="445.8" width="1.0" height="5.6" fill="#b9e6d6"/>
<rect x="704.5" y="445.8" width="1.0" height="5.6" fill="#9ad7c1"/>
<rect x="711.5" y="445.8" width="1.0" height="5.6" fill="#b9e6d6"/>
<rect x="720.5" y="445.8" width="1.0" height="5.6" fill="#b9e6d6"/>
<rect x="77.5" y="440.3" width="1.0" height="5.6" fill="#b9e6d6"/>
<rect x="103.5" y="440.3" width="1.0" height="5.6" fill="#9ad7c1"/>
<rect x="141.5" y="440.3" width="1.0" height="5.6" fill="#9ad7c1"/>
<rect x="160.5" y="440.3" width="2.0" height="5.6" fill="#9ad7c1"/>
<rect x="199.5" y="440.3" width="1.0" height="5.6" fill="#9ad7c1"/>
<rect x="211.5" y="440.3" width="1.0" height="5.6" fill="#b9e6d6"/>
<rect x="220.5" y="440.3" width="1.0" height="5.6" fill="#b9e6d6"/>
<rect x="249.5" y="440.3" width="1.0" height="5.6" fill="#b9e6d6"/>
<rect x="253.5" y="440.3" width="1.0" height="5.6" fill="#b9e6d6"/>
<rect x="255.5" y="440.3" width="1.0" height="5.6" fill="#9ad7c1"/>
<rect x="274.5" y="440.3" width="1.0" height="5.6" fill="#b9e6d6"/>
<rect x="291.5" y="440.3" width="1.0" height="5.6" fill="#b9e6d6"/>
<rect x="297.5" y="440.3" width="1.0" height="5.6" fill="#9ad7c1"/>
<rect x="308.5" y="440.3" width="2.0" height="5.6" fill="#9ad7c1"/>
<rect x="316.5" y="440.3" width="1.0" height="5.6" fill="#9ad7c1"/>
<rect x="334.5" y="440.3" width="2.0" height="5.6" fill="#9ad7c1"/>
<rect x="379.5" y="440.3" width="1.0" height="5.6" fill="#9ad7c1"/>
<rect x="385.5" y="440.3" width="1.0" height="5.6" fill="#b9e6d6"/>
<rect x="430.5" y="440.3" width="1.0" height="5.6" fill="#b9e6d6"/>
<rect x="440.5" y="440.3" width="2.0" height="5.6" fill="#b9e6d6"/>
<rect x="454.5" y="440.3" width="1.0" height="5.6" fill="#b9e6d6"/>
<rect x="480.5" y="440.3" width="1.0" height="5.6" fill="#b9e6d6"/>
<rect x="486.5" y="440.3" width="1.0" height="5.6" fill="#b9e6d6"/>
<rect x="508.5" y="440.3" width="1.0" height="5.6" fill="#9ad7c1"/>
<rect x="511.5" y="440.3" width="1.0" height="5.6" fill="#b9e6d6"/>
<rect x="566.5" y="440.3" width="1.0" height="5.6" fill="#9ad7c1"/>
<rect x="570.5" y="440.3" width="1.0" height="5.6" fill="#9ad7c1"/>
<rect x="604.5" y="440.3" width="1.0" height="5.6" fill="#9ad7c1"/>
<rect x="615.5" y="440.3" width="1.0" height="5.6" fill="#9ad7c1"/>
<rect x="634.5" y="440.3" width="1.0" height="5.6" fill="#b9e6d6"/>
<rect x="641.5" y="440.3" width="1.0" height="5.6" fill="#b9e6d6"/>
<rect x="645.5" y="440.3" width="1.0" height="5.6" fill="#9ad7c1"/>
<rect x="653.5" y="440.3" width="1.0" height="5.6" fill="#b9e6d6"/>
<rect x="697.5" y="440.3" width="1.0" height="5.6" fill="#b9e6d6"/>
<rect x="706.5" y="440.3" width="1.0" height="5.6" fill="#b9e6d6"/>
<rect x="694.0" y="457.0" width="1.5" height="6.0" fill="#d9f2e9"/>
<rect x="108.3" y="457.0" width="1.5" height="5.0" fill="#d9f2e9"/>
<rect x="347.2" y="457.0" width="1.5" height="5.0" fill="#d9f2e9"/>
<rect x="646.3" y="457.0" width="1.0" height="6.0" fill="#d9f2e9"/>
<rect x="235.7" y="457.0" width="1.5" height="3.0" fill="#d9f2e9"/>
<rect x="549.1" y="457.0" width="1.0" height="8.0" fill="#d9f2e9"/>
<rect x="461.4" y="457.0" width="1.5" height="5.0" fill="#d9f2e9"/>
<rect x="488.5" y="457.0" width="0.8" height="6.0" fill="#d9f2e9"/>
<rect x="361.2" y="457.0" width="1.5" height="6.0" fill="#d9f2e9"/>
<rect x="463.3" y="457.0" width="1.0" height="6.0" fill="#d9f2e9"/>
<rect x="72.3" y="457.0" width="1.0" height="5.0" fill="#d9f2e9"/>
<rect x="178.4" y="457.0" width="1.5" height="8.0" fill="#d9f2e9"/>
<rect x="703.1" y="457.0" width="1.0" height="3.0" fill="#d9f2e9"/>
<rect x="672.6" y="457.0" width="0.8" height="5.0" fill="#d9f2e9"/>
<rect x="269.2" y="457.0" width="1.0" height="8.0" fill="#d9f2e9"/>
<rect x="232.9" y="457.0" width="0.8" height="6.0" fill="#d9f2e9"/>
<rect x="89.7" y="457.0" width="0.8" height="5.0" fill="#d9f2e9"/>
<rect x="421.9" y="457.0" width="1.5" height="6.0" fill="#d9f2e9"/>
<rect x="347.2" y="457.0" width="0.8" height="8.0" fill="#d9f2e9"/>
<rect x="612.2" y="457.0" width="1.0" height="3.0" fill="#d9f2e9"/>
<rect x="401.6" y="457.0" width="1.5" height="5.0" fill="#d9f2e9"/>
<rect x="331.6" y="457.0" width="1.5" height="6.0" fill="#d9f2e9"/>
<rect x="145.8" y="457.0" width="0.8" height="6.0" fill="#d9f2e9"/>
<rect x="603.3" y="457.0" width="1.5" height="3.0" fill="#d9f2e9"/>
<rect x="548.0" y="457.0" width="1.5" height="8.0" fill="#d9f2e9"/>
<rect x="232.1" y="457.0" width="1.5" height="5.0" fill="#d9f2e9"/>
<rect x="329.1" y="457.0" width="0.8" height="3.0" fill="#d9f2e9"/>
<rect x="327.3" y="457.0" width="1.5" height="3.0" fill="#d9f2e9"/>
<rect x="386.1" y="457.0" width="1.5" height="5.0" fill="#d9f2e9"/>
<rect x="332.3" y="457.0" width="1.0" height="3.0" fill="#d9f2e9"/>
<rect x="306.6" y="457.0" width="1.0" height="8.0" fill="#d9f2e9"/>
<rect x="245.1" y="457.0" width="1.0" height="6.0" fill="#d9f2e9"/>
<rect x="288.7" y="457.0" width="1.5" height="8.0" fill="#d9f2e9"/>
<rect x="487.1" y="457.0" width="0.8" height="8.0" fill="#d9f2e9"/>
<rect x="307.3" y="457.0" width="1.0" height="5.0" fill="#d9f2e9"/>
<rect x="412.3" y="457.0" width="0.8" height="8.0" fill="#d9f2e9"/>
<rect x="438.2" y="457.0" width="1.5" height="5.0" fill="#d9f2e9"/>
<rect x="110.6" y="457.0" width="1.0" height="6.0" fill="#d9f2e9"/>
<rect x="702.6" y="457.0" width="1.5" height="5.0" fill="#d9f2e9"/>
<rect x="695.8" y="457.0" width="0.8" height="8.0" fill="#d9f2e9"/>
<rect x="650.4" y="457.0" width="0.8" height="3.0" fill="#d9f2e9"/>
<rect x="83.4" y="457.0" width="1.5" height="8.0" fill="#d9f2e9"/>
<rect x="253.0" y="457.0" width="1.5" height="6.0" fill="#d9f2e9"/>
<rect x="413.4" y="457.0" width="1.0" height="8.0" fill="#d9f2e9"/>
<rect x="313.3" y="457.0" width="1.0" height="3.0" fill="#d9f2e9"/>
<rect x="451.2" y="457.0" width="1.0" height="8.0" fill="#d9f2e9"/>
<rect x="688.5" y="457.0" width="1.5" height="3.0" fill="#d9f2e9"/>
<rect x="404.5" y="457.0" width="0.8" height="8.0" fill="#d9f2e9"/>
<rect x="303.1" y="457.0" width="1.0" height="5.0" fill="#d9f2e9"/>
<rect x="642.7" y="457.0" width="1.0" height="8.0" fill="#d9f2e9"/>
<rect x="321.4" y="457.0" width="1.5" height="6.0" fill="#d9f2e9"/>
<rect x="516.2" y="457.0" width="1.5" height="3.0" fill="#d9f2e9"/>
<rect x="166.2" y="457.0" width="1.0" height="6.0" fill="#d9f2e9"/>
<rect x="709.0" y="457.0" width="1.0" height="5.0" fill="#d9f2e9"/>
<rect x="125.8" y="457.0" width="1.0" height="6.0" fill="#d9f2e9"/>
<rect x="602.9" y="457.0" width="1.5" height="8.0" fill="#d9f2e9"/>
<rect x="475.6" y="457.0" width="1.5" height="6.0" fill="#d9f2e9"/>
<rect x="600.0" y="457.0" width="0.8" height="5.0" fill="#d9f2e9"/>
<rect x="328.5" y="457.0" width="0.8" height="3.0" fill="#d9f2e9"/>
<rect x="288.8" y="457.0" width="1.5" height="3.0" fill="#d9f2e9"/>
<rect x="516.3" y="457.0" width="0.8" height="3.0" fill="#d9f2e9"/>
<rect x="257.6" y="457.0" width="1.5" height="3.0" fill="#d9f2e9"/>
<rect x="667.7" y="457.0" width="1.0" height="3.0" fill="#d9f2e9"/>
<rect x="445.4" y="457.0" width="1.5" height="3.0" fill="#d9f2e9"/>
<rect x="183.6" y="457.0" width="1.0" height="6.0" fill="#d9f2e9"/>
<rect x="636.9" y="457.0" width="1.5" height="5.0" fill="#d9f2e9"/>
<rect x="437.5" y="457.0" width="1.0" height="3.0" fill="#d9f2e9"/>
<rect x="149.2" y="457.0" width="1.5" height="3.0" fill="#d9f2e9"/>
<rect x="71.0" y="457.0" width="0.8" height="5.0" fill="#d9f2e9"/>
<rect x="688.4" y="457.0" width="1.0" height="8.0" fill="#d9f2e9"/>
<rect x="463.4" y="434.8" width="1.0" height="5.5" fill="#b9e6d6"/>
<rect x="488.4" y="423.8" width="1.0" height="5.5" fill="#b9e6d6"/>
<rect x="148.2" y="429.3" width="1.0" height="5.5" fill="#b9e6d6"/>
<rect x="289.3" y="429.3" width="1.0" height="5.5" fill="#b9e6d6"/>
<rect x="73.6" y="434.8" width="1.0" height="5.5" fill="#b9e6d6"/>
<rect x="629.0" y="434.8" width="1.0" height="5.5" fill="#b9e6d6"/>
<rect x="286.0" y="418.3" width="1.0" height="5.5" fill="#b9e6d6"/>
<rect x="470.8" y="434.8" width="1.0" height="5.5" fill="#b9e6d6"/>
<rect x="88.2" y="418.3" width="1.0" height="5.5" fill="#b9e6d6"/>
<rect x="443.0" y="434.8" width="1.0" height="5.5" fill="#b9e6d6"/>
<rect x="346.9" y="429.3" width="1.0" height="5.5" fill="#b9e6d6"/>
<rect x="219.0" y="434.8" width="1.0" height="5.5" fill="#b9e6d6"/>
<rect x="158.6" y="429.3" width="1.0" height="5.5" fill="#b9e6d6"/>
<rect x="263.0" y="418.3" width="1.0" height="5.5" fill="#b9e6d6"/>
<rect x="255.6" y="423.8" width="1.0" height="5.5" fill="#b9e6d6"/>
<rect x="696.6" y="418.3" width="1.0" height="5.5" fill="#b9e6d6"/>
<rect x="709.8" y="434.8" width="1.0" height="5.5" fill="#b9e6d6"/>
<rect x="214.7" y="418.3" width="1.0" height="5.5" fill="#b9e6d6"/>
<rect x="505.0" y="429.3" width="1.0" height="5.5" fill="#b9e6d6"/>
<rect x="329.4" y="418.3" width="1.0" height="5.5" fill="#b9e6d6"/>
<rect x="639.7" y="418.3" width="1.0" height="5.5" fill="#b9e6d6"/>
<rect x="66.6" y="429.3" width="1.0" height="5.5" fill="#b9e6d6"/>
<rect x="110.3" y="429.3" width="1.0" height="5.5" fill="#b9e6d6"/>
<rect x="292.3" y="429.3" width="1.0" height="5.5" fill="#b9e6d6"/>
<rect x="56.6" y="423.8" width="1.0" height="5.5" fill="#b9e6d6"/>
<rect x="317.6" y="423.8" width="1.0" height="5.5" fill="#b9e6d6"/>
<rect x="128.7" y="503.4" width="2.0" height="6.1" fill="#332c88" opacity="0.38"/>
<rect x="322.4" y="503.4" width="0.8" height="6.1" fill="#2a1f6e" opacity="0.38"/>
<rect x="335.3" y="503.4" width="1.5" height="6.1" fill="#2f2a80" opacity="0.38"/>
<rect x="311.8" y="503.4" width="2.0" height="6.1" fill="#332c88" opacity="0.38"/>
<rect x="283.0" y="503.4" width="2.0" height="6.1" fill="#2a1f6e" opacity="0.38"/>
<rect x="239.1" y="503.4" width="0.8" height="6.1" fill="#332c88" opacity="0.38"/>
<rect x="592.4" y="503.4" width="1.0" height="6.1" fill="#2f2a80" opacity="0.38"/>
<rect x="113.7" y="503.4" width="1.5" height="6.1" fill="#2f2a80" opacity="0.38"/>
<rect x="424.4" y="503.4" width="2.0" height="6.1" fill="#2f2a80" opacity="0.38"/>
<rect x="158.5" y="503.4" width="1.5" height="6.1" fill="#2f2a80" opacity="0.38"/>
<rect x="537.0" y="503.4" width="2.0" height="6.1" fill="#2f2a80" opacity="0.38"/>
<rect x="251.3" y="503.4" width="2.0" height="6.1" fill="#2f2a80" opacity="0.38"/>
<rect x="204.2" y="503.4" width="2.0" height="6.1" fill="#2f2a80" opacity="0.38"/>
<rect x="684.6" y="503.4" width="1.5" height="6.1" fill="#231a5e" opacity="0.38"/>
<rect x="446.3" y="503.4" width="1.5" height="6.1" fill="#2f2a80" opacity="0.38"/>
<rect x="323.1" y="503.4" width="1.0" height="6.1" fill="#2f2a80" opacity="0.38"/>
<rect x="637.7" y="503.4" width="0.8" height="6.1" fill="#2a1f6e" opacity="0.38"/>
<rect x="416.1" y="503.4" width="1.5" height="6.1" fill="#231a5e" opacity="0.38"/>
<rect x="70.8" y="503.4" width="1.0" height="6.1" fill="#332c88" opacity="0.38"/>
<rect x="61.6" y="503.4" width="0.8" height="6.1" fill="#2f2a80" opacity="0.38"/>
<rect x="573.1" y="503.4" width="1.0" height="6.1" fill="#332c88" opacity="0.38"/>
<rect x="178.0" y="503.4" width="0.8" height="6.1" fill="#2a1f6e" opacity="0.38"/>
<rect x="429.2" y="503.4" width="1.5" height="6.1" fill="#332c88" opacity="0.38"/>
<rect x="181.1" y="503.4" width="1.5" height="6.1" fill="#2a1f6e" opacity="0.38"/>
<rect x="203.7" y="503.4" width="1.0" height="6.1" fill="#231a5e" opacity="0.38"/>
<rect x="241.2" y="503.4" width="2.0" height="6.1" fill="#231a5e" opacity="0.38"/>
<rect x="572.3" y="503.4" width="1.0" height="6.1" fill="#332c88" opacity="0.38"/>
<rect x="170.0" y="503.4" width="1.5" height="6.1" fill="#332c88" opacity="0.38"/>
<rect x="654.2" y="503.4" width="0.8" height="6.1" fill="#231a5e" opacity="0.38"/>
<rect x="218.4" y="503.4" width="2.0" height="6.1" fill="#332c88" opacity="0.38"/>
<rect x="660.4" y="503.4" width="0.8" height="6.1" fill="#2f2a80" opacity="0.38"/>
<rect x="247.4" y="503.4" width="1.5" height="6.1" fill="#2f2a80" opacity="0.38"/>
<rect x="530.4" y="503.4" width="0.8" height="6.1" fill="#231a5e" opacity="0.38"/>
<rect x="78.4" y="503.4" width="1.0" height="6.1" fill="#231a5e" opacity="0.38"/>
<rect x="184.6" y="503.4" width="1.5" height="6.1" fill="#2f2a80" opacity="0.38"/>
<rect x="307.4" y="503.4" width="0.8" height="6.1" fill="#332c88" opacity="0.38"/>
<rect x="474.5" y="503.4" width="1.0" height="6.1" fill="#2f2a80" opacity="0.38"/>
<rect x="434.7" y="503.4" width="1.5" height="6.1" fill="#231a5e" opacity="0.38"/>
<rect x="501.8" y="503.4" width="1.5" height="6.1" fill="#2a1f6e" opacity="0.38"/>
<rect x="126.7" y="503.4" width="1.5" height="6.1" fill="#2a1f6e" opacity="0.38"/>
<rect x="639.6" y="503.4" width="0.8" height="6.1" fill="#2f2a80" opacity="0.38"/>
<rect x="509.2" y="503.4" width="0.8" height="6.1" fill="#332c88" opacity="0.38"/>
<rect x="192.7" y="503.4" width="1.5" height="6.1" fill="#2a1f6e" opacity="0.38"/>
<rect x="331.9" y="503.4" width="2.0" height="6.1" fill="#2f2a80" opacity="0.38"/>
<rect x="240.4" y="503.4" width="0.8" height="6.1" fill="#332c88" opacity="0.38"/>
<rect x="687.5" y="503.4" width="2.0" height="6.1" fill="#231a5e" opacity="0.38"/>
<rect x="676.6" y="503.4" width="2.0" height="6.1" fill="#2a1f6e" opacity="0.38"/>
<rect x="506.2" y="503.4" width="1.0" height="6.1" fill="#231a5e" opacity="0.38"/>
<rect x="503.8" y="503.4" width="1.0" height="6.1" fill="#231a5e" opacity="0.38"/>
<rect x="563.5" y="503.4" width="0.8" height="6.1" fill="#332c88" opacity="0.38"/>
<rect x="168.8" y="503.4" width="1.0" height="6.1" fill="#2f2a80" opacity="0.38"/>
<rect x="417.0" y="503.4" width="1.0" height="6.1" fill="#2a1f6e" opacity="0.38"/>
<rect x="164.4" y="503.4" width="1.5" height="6.1" fill="#231a5e" opacity="0.38"/>
<rect x="113.7" y="503.4" width="1.5" height="6.1" fill="#2f2a80" opacity="0.38"/>
<rect x="143.3" y="503.4" width="2.0" height="6.1" fill="#231a5e" opacity="0.38"/>
<rect x="211.4" y="503.4" width="1.0" height="6.1" fill="#2a1f6e" opacity="0.38"/>
<rect x="397.8" y="503.4" width="2.0" height="6.1" fill="#2f2a80" opacity="0.38"/>
<rect x="680.4" y="503.4" width="1.5" height="6.1" fill="#332c88" opacity="0.38"/>
<rect x="141.1" y="503.4" width="1.0" height="6.1" fill="#2f2a80" opacity="0.38"/>
<rect x="275.7" y="503.4" width="0.8" height="6.1" fill="#231a5e" opacity="0.38"/>
<rect x="562.6" y="503.4" width="1.0" height="6.1" fill="#2f2a80" opacity="0.38"/>
<rect x="453.8" y="503.4" width="2.0" height="6.1" fill="#231a5e" opacity="0.38"/>
<rect x="610.0" y="503.4" width="0.8" height="6.1" fill="#332c88" opacity="0.38"/>
<rect x="59.8" y="503.4" width="2.0" height="6.1" fill="#2f2a80" opacity="0.38"/>
<rect x="80.7" y="503.4" width="1.5" height="6.1" fill="#332c88" opacity="0.38"/>
<rect x="184.0" y="503.4" width="1.5" height="6.1" fill="#231a5e" opacity="0.38"/>
<rect x="698.6" y="503.4" width="1.0" height="6.1" fill="#332c88" opacity="0.38"/>
<rect x="350.6" y="503.4" width="1.5" height="6.1" fill="#332c88" opacity="0.38"/>
<rect x="164.5" y="503.4" width="0.8" height="6.1" fill="#2a1f6e" opacity="0.38"/>
<rect x="58.8" y="503.4" width="2.0" height="6.1" fill="#2a1f6e" opacity="0.38"/>
<rect x="553.7" y="503.4" width="1.5" height="6.1" fill="#332c88" opacity="0.38"/>
<rect x="124.6" y="503.4" width="2.0" height="6.1" fill="#231a5e" opacity="0.38"/>
<rect x="379.7" y="503.4" width="1.5" height="6.1" fill="#2a1f6e" opacity="0.38"/>
<rect x="292.9" y="503.4" width="0.8" height="6.1" fill="#332c88" opacity="0.38"/>
<rect x="473.3" y="503.4" width="1.5" height="6.1" fill="#2f2a80" opacity="0.38"/>
<rect x="104.0" y="503.4" width="0.8" height="6.1" fill="#2a1f6e" opacity="0.38"/>
<rect x="571.9" y="503.4" width="1.0" height="6.1" fill="#332c88" opacity="0.38"/>
<rect x="298.7" y="503.4" width="1.0" height="6.1" fill="#2a1f6e" opacity="0.38"/>
<rect x="578.8" y="503.4" width="1.5" height="6.1" fill="#332c88" opacity="0.38"/>
<rect x="306.4" y="503.4" width="1.5" height="6.1" fill="#332c88" opacity="0.38"/>
<rect x="206.2" y="503.4" width="1.0" height="6.1" fill="#332c88" opacity="0.38"/>
<rect x="614.5" y="503.4" width="1.5" height="6.1" fill="#2f2a80" opacity="0.38"/>
<rect x="90.3" y="503.4" width="0.8" height="6.1" fill="#231a5e" opacity="0.38"/>
<rect x="659.8" y="503.4" width="1.0" height="6.1" fill="#231a5e" opacity="0.38"/>
<rect x="335.7" y="503.4" width="1.0" height="6.1" fill="#332c88" opacity="0.38"/>
<rect x="456.5" y="503.4" width="0.8" height="6.1" fill="#2f2a80" opacity="0.38"/>
<rect x="513.8" y="503.4" width="1.0" height="6.1" fill="#2f2a80" opacity="0.38"/>
<rect x="349.3" y="503.4" width="2.0" height="6.1" fill="#2a1f6e" opacity="0.38"/>
<rect x="709.4" y="503.4" width="2.0" height="6.1" fill="#231a5e" opacity="0.38"/>
<rect x="179.7" y="503.4" width="1.5" height="6.1" fill="#2a1f6e" opacity="0.38"/>
<rect x="73.0" y="503.4" width="2.0" height="6.1" fill="#2f2a80" opacity="0.38"/>
<rect x="241.8" y="503.4" width="0.8" height="6.1" fill="#231a5e" opacity="0.38"/>
<rect x="650.0" y="503.4" width="0.8" height="6.1" fill="#231a5e" opacity="0.38"/>
<rect x="57.4" y="503.4" width="1.0" height="6.1" fill="#2f2a80" opacity="0.38"/>
<rect x="306.1" y="503.4" width="0.8" height="6.1" fill="#231a5e" opacity="0.38"/>
<rect x="591.9" y="503.4" width="1.5" height="6.1" fill="#2f2a80" opacity="0.38"/>
<rect x="366.6" y="503.4" width="1.5" height="6.1" fill="#231a5e" opacity="0.38"/>
<rect x="339.4" y="503.4" width="1.0" height="6.1" fill="#231a5e" opacity="0.38"/>
<rect x="697.8" y="503.4" width="0.8" height="6.1" fill="#2a1f6e" opacity="0.38"/>
<rect x="537.2" y="503.4" width="1.5" height="6.1" fill="#332c88" opacity="0.38"/>
<rect x="431.2" y="503.4" width="2.0" height="6.1" fill="#332c88" opacity="0.38"/>
<rect x="374.6" y="503.4" width="1.0" height="6.1" fill="#332c88" opacity="0.38"/>
<rect x="633.0" y="503.4" width="0.8" height="6.1" fill="#2f2a80" opacity="0.38"/>
<rect x="201.0" y="503.4" width="2.0" height="6.1" fill="#2a1f6e" opacity="0.38"/>
<rect x="150.2" y="503.4" width="1.5" height="6.1" fill="#231a5e" opacity="0.38"/>
<rect x="293.4" y="503.4" width="1.0" height="6.1" fill="#231a5e" opacity="0.38"/>
<rect x="317.8" y="503.4" width="0.8" height="6.1" fill="#2f2a80" opacity="0.38"/>
<rect x="172.8" y="503.4" width="1.0" height="6.1" fill="#2a1f6e" opacity="0.38"/>
<rect x="200.2" y="503.4" width="1.5" height="6.1" fill="#2a1f6e" opacity="0.38"/>
<rect x="177.5" y="503.4" width="1.5" height="6.1" fill="#231a5e" opacity="0.38"/>
<rect x="204.0" y="503.4" width="2.0" height="6.1" fill="#2f2a80" opacity="0.38"/>
<rect x="415.2" y="503.4" width="0.8" height="6.1" fill="#2a1f6e" opacity="0.38"/>
<rect x="623.7" y="503.4" width="0.8" height="6.1" fill="#231a5e" opacity="0.38"/>
<rect x="141.7" y="503.4" width="0.8" height="6.1" fill="#2a1f6e" opacity="0.38"/>
<rect x="360.6" y="503.4" width="2.0" height="6.1" fill="#2f2a80" opacity="0.38"/>
<rect x="702.0" y="503.4" width="1.0" height="6.1" fill="#231a5e" opacity="0.38"/>
<rect x="572.3" y="503.4" width="1.0" height="6.1" fill="#332c88" opacity="0.38"/>
<rect x="573.1" y="503.4" width="0.8" height="6.1" fill="#231a5e" opacity="0.38"/>
<rect x="210.7" y="503.4" width="1.5" height="6.1" fill="#2a1f6e" opacity="0.38"/>
<rect x="61.7" y="503.4" width="1.0" height="6.1" fill="#231a5e" opacity="0.38"/>
<rect x="253.1" y="503.4" width="1.0" height="6.1" fill="#231a5e" opacity="0.38"/>
<rect x="662.0" y="503.4" width="0.8" height="6.1" fill="#2f2a80" opacity="0.38"/>
<rect x="429.8" y="503.4" width="1.5" height="6.1" fill="#2f2a80" opacity="0.38"/>
<rect x="298.1" y="503.4" width="1.5" height="6.1" fill="#2a1f6e" opacity="0.38"/>
<rect x="606.3" y="503.4" width="0.8" height="6.1" fill="#2f2a80" opacity="0.38"/>
<rect x="302.2" y="503.4" width="1.5" height="6.1" fill="#231a5e" opacity="0.38"/>
<rect x="80.7" y="503.4" width="1.5" height="6.1" fill="#2a1f6e" opacity="0.38"/>
<rect x="290.6" y="503.4" width="1.5" height="6.1" fill="#2a1f6e" opacity="0.38"/>
<rect x="74.4" y="503.4" width="1.0" height="6.1" fill="#332c88" opacity="0.38"/>
<rect x="289.6" y="503.4" width="2.0" height="6.1" fill="#2a1f6e" opacity="0.38"/>
<rect x="614.7" y="503.4" width="2.0" height="6.1" fill="#2a1f6e" opacity="0.38"/>
<rect x="583.2" y="503.4" width="2.0" height="6.1" fill="#2a1f6e" opacity="0.38"/>
<rect x="101.1" y="503.4" width="1.5" height="6.1" fill="#2f2a80" opacity="0.38"/>
<rect x="152.5" y="503.4" width="1.5" height="6.1" fill="#231a5e" opacity="0.38"/>
<rect x="613.4" y="503.4" width="1.5" height="6.1" fill="#332c88" opacity="0.38"/>
<rect x="689.1" y="503.4" width="0.8" height="6.1" fill="#2a1f6e" opacity="0.38"/>
<rect x="281.6" y="503.4" width="1.0" height="6.1" fill="#231a5e" opacity="0.38"/>
<rect x="388.7" y="503.4" width="0.8" height="6.1" fill="#2a1f6e" opacity="0.38"/>
<rect x="101.6" y="503.4" width="2.0" height="6.1" fill="#231a5e" opacity="0.38"/>
<rect x="701.7" y="503.4" width="2.0" height="6.1" fill="#231a5e" opacity="0.38"/>
<rect x="205.5" y="503.4" width="0.8" height="6.1" fill="#332c88" opacity="0.38"/>
<rect x="272.8" y="503.4" width="1.0" height="6.1" fill="#332c88" opacity="0.38"/>
<rect x="652.3" y="503.4" width="0.8" height="6.1" fill="#2f2a80" opacity="0.38"/>
<rect x="165.6" y="503.4" width="1.5" height="6.1" fill="#231a5e" opacity="0.38"/>
<rect x="274.2" y="503.4" width="2.0" height="6.1" fill="#231a5e" opacity="0.38"/>
<rect x="681.4" y="503.4" width="1.5" height="6.1" fill="#2a1f6e" opacity="0.38"/>
<rect x="277.0" y="503.4" width="2.0" height="6.1" fill="#332c88" opacity="0.38"/>
<rect x="203.8" y="503.4" width="1.0" height="6.1" fill="#231a5e" opacity="0.38"/>
<rect x="640.4" y="503.4" width="0.8" height="6.1" fill="#2f2a80" opacity="0.38"/>
<rect x="540.0" y="503.4" width="1.0" height="6.1" fill="#332c88" opacity="0.38"/>
<rect x="309.8" y="503.4" width="0.8" height="6.1" fill="#332c88" opacity="0.38"/>
<rect x="291.3" y="503.4" width="1.0" height="6.1" fill="#2a1f6e" opacity="0.38"/>
<rect x="666.4" y="503.4" width="0.8" height="6.1" fill="#2f2a80" opacity="0.38"/>
<rect x="571.8" y="503.4" width="0.8" height="6.1" fill="#332c88" opacity="0.38"/>
<rect x="583.7" y="503.4" width="1.0" height="6.1" fill="#2f2a80" opacity="0.38"/>
<rect x="509.4" y="503.4" width="1.5" height="6.1" fill="#332c88" opacity="0.38"/>
<rect x="548.5" y="503.4" width="1.0" height="6.1" fill="#332c88" opacity="0.38"/>
<rect x="638.1" y="503.4" width="2.0" height="6.1" fill="#332c88" opacity="0.38"/>
<rect x="92.1" y="503.4" width="1.5" height="6.1" fill="#332c88" opacity="0.38"/>
<rect x="645.3" y="503.4" width="2.0" height="6.1" fill="#332c88" opacity="0.38"/>
<rect x="652.4" y="503.4" width="1.0" height="6.1" fill="#332c88" opacity="0.38"/>
<rect x="152.8" y="503.4" width="1.0" height="6.1" fill="#2a1f6e" opacity="0.38"/>
<rect x="648.8" y="503.4" width="2.0" height="6.1" fill="#231a5e" opacity="0.38"/>
<rect x="350.9" y="503.4" width="1.5" height="6.1" fill="#2f2a80" opacity="0.38"/>
<rect x="445.8" y="503.4" width="1.0" height="6.1" fill="#332c88" opacity="0.38"/>
<rect x="535.2" y="503.4" width="1.5" height="6.1" fill="#332c88" opacity="0.38"/>
<rect x="100.9" y="503.4" width="1.0" height="6.1" fill="#2a1f6e" opacity="0.38"/>
<rect x="444.6" y="503.4" width="1.5" height="6.1" fill="#332c88" opacity="0.38"/>
<rect x="715.1" y="503.4" width="1.5" height="6.1" fill="#231a5e" opacity="0.38"/>
<rect x="536.1" y="503.4" width="0.8" height="6.1" fill="#231a5e" opacity="0.38"/>
<rect x="266.0" y="503.4" width="1.0" height="6.1" fill="#332c88" opacity="0.38"/>
<rect x="654.8" y="503.4" width="0.8" height="6.1" fill="#2f2a80" opacity="0.38"/>
<rect x="472.5" y="503.4" width="1.0" height="6.1" fill="#2a1f6e" opacity="0.38"/>
<rect x="198.2" y="503.4" width="2.0" height="6.1" fill="#231a5e" opacity="0.38"/>
<rect x="186.1" y="503.4" width="1.5" height="6.1" fill="#2a1f6e" opacity="0.38"/>
<rect x="183.7" y="503.4" width="0.8" height="6.1" fill="#2f2a80" opacity="0.38"/>
<rect x="455.4" y="503.4" width="0.8" height="6.1" fill="#2a1f6e" opacity="0.38"/>
<rect x="595.5" y="503.4" width="1.5" height="6.1" fill="#2f2a80" opacity="0.38"/>
<rect x="54.9" y="503.4" width="1.5" height="6.1" fill="#2a1f6e" opacity="0.38"/>
<rect x="481.5" y="503.4" width="0.8" height="6.1" fill="#2f2a80" opacity="0.38"/>
<rect x="267.6" y="503.4" width="0.8" height="6.1" fill="#231a5e" opacity="0.38"/>
<rect x="323.9" y="503.4" width="1.5" height="6.1" fill="#2f2a80" opacity="0.38"/>
<rect x="90.1" y="503.4" width="2.0" height="6.1" fill="#2a1f6e" opacity="0.38"/>
<rect x="110.1" y="503.4" width="1.5" height="6.1" fill="#231a5e" opacity="0.38"/>
<rect x="715.3" y="503.4" width="2.0" height="6.1" fill="#332c88" opacity="0.38"/>
<rect x="683.3" y="503.4" width="0.8" height="6.1" fill="#2a1f6e" opacity="0.38"/>
<rect x="673.3" y="503.4" width="1.5" height="6.1" fill="#2a1f6e" opacity="0.38"/>
<rect x="330.5" y="503.4" width="1.5" height="6.1" fill="#2f2a80" opacity="0.38"/>
<rect x="114.3" y="503.4" width="1.0" height="6.1" fill="#2f2a80" opacity="0.38"/>
<rect x="147.4" y="503.4" width="0.8" height="6.1" fill="#332c88" opacity="0.38"/>
<rect x="598.5" y="503.4" width="2.0" height="6.1" fill="#332c88" opacity="0.38"/>
<rect x="413.5" y="503.4" width="1.0" height="6.1" fill="#332c88" opacity="0.38"/>
<rect x="206.1" y="503.4" width="1.5" height="6.1" fill="#231a5e" opacity="0.38"/>
<rect x="564.4" y="503.4" width="1.5" height="6.1" fill="#231a5e" opacity="0.38"/>
<rect x="427.3" y="503.4" width="1.5" height="6.1" fill="#332c88" opacity="0.38"/>
<rect x="140.1" y="503.4" width="0.8" height="6.1" fill="#231a5e" opacity="0.38"/>
<rect x="118.6" y="503.4" width="1.5" height="6.1" fill="#2f2a80" opacity="0.38"/>
<rect x="716.5" y="503.4" width="1.0" height="6.1" fill="#231a5e" opacity="0.38"/>
<rect x="559.9" y="503.4" width="0.8" height="6.1" fill="#2a1f6e" opacity="0.38"/>
<rect x="471.3" y="503.4" width="0.8" height="6.1" fill="#2a1f6e" opacity="0.38"/>
<rect x="416.6" y="457.0" width="0.6" height="40.7" fill="#a9e0cc" opacity="0.5"/>
<rect x="225.6" y="457.0" width="1.0" height="40.7" fill="#97d6bf" opacity="0.5"/>
<rect x="547.2" y="457.0" width="0.6" height="40.7" fill="#a9e0cc" opacity="0.5"/>
<rect x="406.7" y="457.0" width="0.8" height="40.7" fill="#a9e0cc" opacity="0.5"/>
<rect x="348.2" y="457.0" width="0.8" height="40.7" fill="#a9e0cc" opacity="0.5"/>
<rect x="479.0" y="457.0" width="0.8" height="40.7" fill="#97d6bf" opacity="0.5"/>
<rect x="360.7" y="457.0" width="0.8" height="40.7" fill="#a9e0cc" opacity="0.5"/>
<rect x="123.9" y="457.0" width="1.0" height="40.7" fill="#a9e0cc" opacity="0.5"/>
<rect x="95.5" y="457.0" width="1.0" height="40.7" fill="#97d6bf" opacity="0.5"/>
<rect x="504.6" y="457.0" width="0.8" height="40.7" fill="#a9e0cc" opacity="0.5"/>
<rect x="204.8" y="457.0" width="0.8" height="40.7" fill="#97d6bf" opacity="0.5"/>
<rect x="661.0" y="457.0" width="0.8" height="40.7" fill="#a9e0cc" opacity="0.5"/>
<rect x="72.1" y="457.0" width="0.6" height="40.7" fill="#97d6bf" opacity="0.5"/>
<rect x="528.1" y="457.0" width="0.6" height="40.7" fill="#a9e0cc" opacity="0.5"/>
<rect x="289.6" y="457.0" width="0.8" height="40.7" fill="#97d6bf" opacity="0.5"/>
<rect x="483.4" y="457.0" width="0.8" height="40.7" fill="#97d6bf" opacity="0.5"/>
<rect x="197.1" y="457.0" width="1.0" height="40.7" fill="#a9e0cc" opacity="0.5"/>
<rect x="372.3" y="457.0" width="0.8" height="40.7" fill="#a9e0cc" opacity="0.5"/>
<rect x="604.4" y="457.0" width="0.8" height="40.7" fill="#a9e0cc" opacity="0.5"/>
<rect x="274.3" y="457.0" width="0.8" height="40.7" fill="#a9e0cc" opacity="0.5"/>
<rect x="160.1" y="457.0" width="1.0" height="40.7" fill="#97d6bf" opacity="0.5"/>
<rect x="194.0" y="457.0" width="0.6" height="40.7" fill="#a9e0cc" opacity="0.5"/>
<rect x="623.6" y="457.0" width="1.0" height="40.7" fill="#97d6bf" opacity="0.5"/>
<rect x="82.5" y="457.0" width="0.8" height="40.7" fill="#a9e0cc" opacity="0.5"/>
<rect x="343.7" y="457.0" width="0.6" height="40.7" fill="#97d6bf" opacity="0.5"/>
<rect x="511.9" y="457.0" width="0.6" height="40.7" fill="#a9e0cc" opacity="0.5"/>
<rect x="706.3" y="457.0" width="0.6" height="40.7" fill="#a9e0cc" opacity="0.5"/>
<rect x="664.1" y="457.0" width="0.6" height="40.7" fill="#97d6bf" opacity="0.5"/>
<rect x="117.1" y="457.0" width="0.6" height="40.7" fill="#97d6bf" opacity="0.5"/>
<rect x="510.3" y="457.0" width="0.6" height="40.7" fill="#97d6bf" opacity="0.5"/>
<rect x="279.7" y="457.0" width="1.0" height="40.7" fill="#97d6bf" opacity="0.5"/>
<rect x="644.2" y="457.0" width="0.6" height="40.7" fill="#a9e0cc" opacity="0.5"/>
<rect x="186.8" y="457.0" width="1.0" height="40.7" fill="#a9e0cc" opacity="0.5"/>
<rect x="77.0" y="457.0" width="1.0" height="40.7" fill="#a9e0cc" opacity="0.5"/>
<rect x="437.8" y="457.0" width="1.0" height="40.7" fill="#a9e0cc" opacity="0.5"/>
<rect x="541.1" y="457.0" width="0.6" height="40.7" fill="#97d6bf" opacity="0.5"/>
<rect x="94.9" y="457.0" width="0.6" height="40.7" fill="#a9e0cc" opacity="0.5"/>
<rect x="694.7" y="457.0" width="0.6" height="40.7" fill="#97d6bf" opacity="0.5"/>
<rect x="53.2" y="457.0" width="0.6" height="40.7" fill="#a9e0cc" opacity="0.5"/>
<rect x="477.0" y="457.0" width="1.0" height="40.7" fill="#a9e0cc" opacity="0.5"/>
<rect x="407.6" y="457.0" width="0.8" height="40.7" fill="#a9e0cc" opacity="0.5"/>
<rect x="286.3" y="457.0" width="0.6" height="40.7" fill="#a9e0cc" opacity="0.5"/>
<rect x="543.0" y="457.0" width="0.8" height="40.7" fill="#a9e0cc" opacity="0.5"/>
<rect x="61.7" y="457.0" width="0.8" height="40.7" fill="#a9e0cc" opacity="0.5"/>
<rect x="700.9" y="457.0" width="0.6" height="40.7" fill="#a9e0cc" opacity="0.5"/>
<rect x="325.8" y="457.0" width="1.0" height="40.7" fill="#97d6bf" opacity="0.5"/>
<rect x="231.1" y="457.0" width="0.8" height="40.7" fill="#a9e0cc" opacity="0.5"/>
<rect x="490.4" y="457.0" width="1.0" height="40.7" fill="#97d6bf" opacity="0.5"/>
<rect x="420.3" y="457.0" width="1.0" height="40.7" fill="#97d6bf" opacity="0.5"/>
<rect x="711.6" y="457.0" width="1.0" height="40.7" fill="#97d6bf" opacity="0.5"/>
<rect x="319.8" y="457.0" width="0.8" height="40.7" fill="#97d6bf" opacity="0.5"/>
<rect x="308.9" y="457.0" width="0.6" height="40.7" fill="#97d6bf" opacity="0.5"/>
<rect x="562.9" y="457.0" width="0.8" height="40.7" fill="#a9e0cc" opacity="0.5"/>
<rect x="655.0" y="457.0" width="1.0" height="40.7" fill="#a9e0cc" opacity="0.5"/>
<rect x="212.2" y="457.0" width="1.0" height="40.7" fill="#97d6bf" opacity="0.5"/>
<rect x="517.6" y="457.0" width="1.0" height="40.7" fill="#97d6bf" opacity="0.5"/>
<rect x="717.5" y="457.0" width="0.6" height="40.7" fill="#a9e0cc" opacity="0.5"/>
<rect x="109.8" y="457.0" width="1.0" height="40.7" fill="#a9e0cc" opacity="0.5"/>
<rect x="662.0" y="457.0" width="0.6" height="40.7" fill="#97d6bf" opacity="0.5"/>
<rect x="518.0" y="457.0" width="0.8" height="40.7" fill="#97d6bf" opacity="0.5"/>
<rect x="420.4" y="457.0" width="0.8" height="40.7" fill="#97d6bf" opacity="0.5"/>
<rect x="704.4" y="457.0" width="0.6" height="40.7" fill="#97d6bf" opacity="0.5"/>
<rect x="553.0" y="457.0" width="0.8" height="40.7" fill="#97d6bf" opacity="0.5"/>
<rect x="449.5" y="457.0" width="0.8" height="40.7" fill="#a9e0cc" opacity="0.5"/>
<rect x="605.9" y="457.0" width="1.0" height="40.7" fill="#97d6bf" opacity="0.5"/>
<rect x="290.2" y="457.0" width="0.6" height="40.7" fill="#97d6bf" opacity="0.5"/>
<rect x="707.3" y="457.0" width="0.8" height="40.7" fill="#97d6bf" opacity="0.5"/>
<rect x="99.9" y="457.0" width="1.0" height="40.7" fill="#a9e0cc" opacity="0.5"/>
<rect x="672.4" y="457.0" width="0.8" height="40.7" fill="#97d6bf" opacity="0.5"/>
<rect x="662.2" y="457.0" width="0.8" height="40.7" fill="#97d6bf" opacity="0.5"/>
<rect x="402.3" y="457.0" width="0.8" height="40.7" fill="#a9e0cc" opacity="0.5"/>
<rect x="723.1" y="457.0" width="0.6" height="40.7" fill="#97d6bf" opacity="0.5"/>
<rect x="403.6" y="457.0" width="1.0" height="40.7" fill="#a9e0cc" opacity="0.5"/>
<rect x="598.1" y="457.0" width="0.6" height="40.7" fill="#a9e0cc" opacity="0.5"/>
<rect x="154.0" y="457.0" width="1.0" height="40.7" fill="#97d6bf" opacity="0.5"/>
<rect x="170.9" y="457.0" width="1.0" height="40.7" fill="#a9e0cc" opacity="0.5"/>
<rect x="267.9" y="457.0" width="0.8" height="40.7" fill="#97d6bf" opacity="0.5"/>
<rect x="134.2" y="457.0" width="0.6" height="40.7" fill="#97d6bf" opacity="0.5"/>
<rect x="303.6" y="457.0" width="0.8" height="40.7" fill="#97d6bf" opacity="0.5"/>
<rect x="497.0" y="457.0" width="1.0" height="40.7" fill="#97d6bf" opacity="0.5"/>
<rect x="355.8" y="457.0" width="0.6" height="40.7" fill="#97d6bf" opacity="0.5"/>
<rect x="317.3" y="457.0" width="0.8" height="40.7" fill="#a9e0cc" opacity="0.5"/>
<rect x="353.4" y="457.0" width="0.8" height="40.7" fill="#a9e0cc" opacity="0.5"/>
<rect x="561.4" y="457.0" width="0.6" height="40.7" fill="#a9e0cc" opacity="0.5"/>
<rect x="508.6" y="457.0" width="0.8" height="40.7" fill="#97d6bf" opacity="0.5"/>
<rect x="401.4" y="457.0" width="0.6" height="40.7" fill="#97d6bf" opacity="0.5"/>
<rect x="403.2" y="457.0" width="0.8" height="40.7" fill="#97d6bf" opacity="0.5"/>
<rect x="63.4" y="457.0" width="0.6" height="40.7" fill="#a9e0cc" opacity="0.5"/>
<rect x="434.9" y="457.0" width="0.6" height="40.7" fill="#a9e0cc" opacity="0.5"/>
<rect x="257.5" y="457.0" width="1.0" height="40.7" fill="#97d6bf" opacity="0.5"/>
<rect x="52.0" y="444.1" width="1.0" height="6.0" fill="#9ad7c1"/>
<rect x="53.0" y="444.1" width="1.0" height="6.0" fill="#9ad7c1"/>
<rect x="55.0" y="449.6" width="1.0" height="6.0" fill="#b9e6d6"/>
<rect x="56.0" y="449.6" width="1.0" height="6.0" fill="#9ad7c1"/>
<rect x="56.0" y="438.6" width="1.0" height="6.0" fill="#9ad7c1"/>
<rect x="57.0" y="438.6" width="1.0" height="6.0" fill="#9ad7c1"/>
<rect x="58.0" y="449.6" width="1.0" height="6.0" fill="#9ad7c1"/>
<rect x="58.0" y="444.1" width="1.0" height="6.0" fill="#9ad7c1"/>
<rect x="59.0" y="444.1" width="1.0" height="6.0" fill="#9ad7c1"/>
<rect x="60.0" y="438.6" width="1.0" height="6.0" fill="#9ad7c1"/>
<rect x="61.0" y="449.6" width="1.0" height="6.0" fill="#b9e6d6"/>
<rect x="61.0" y="444.1" width="1.0" height="6.0" fill="#9ad7c1"/>
<rect x="61.0" y="438.6" width="1.0" height="6.0" fill="#9ad7c1"/>
<rect x="62.0" y="449.6" width="1.0" height="6.0" fill="#9ad7c1"/>
<rect x="62.0" y="444.1" width="1.0" height="6.0" fill="#9ad7c1"/>
<rect x="62.0" y="427.8" width="1.0" height="6.0" fill="#9ad7c1"/>
<rect x="63.0" y="444.1" width="1.0" height="6.0" fill="#9ad7c1"/>
<rect x="63.0" y="433.2" width="1.0" height="6.0" fill="#9ad7c1"/>
<rect x="64.0" y="433.2" width="1.0" height="6.0" fill="#9ad7c1"/>
<rect x="64.0" y="427.8" width="1.0" height="6.0" fill="#9ad7c1"/>
<rect x="65.0" y="449.6" width="1.0" height="6.0" fill="#9ad7c1"/>
<rect x="65.0" y="438.6" width="1.0" height="6.0" fill="#9ad7c1"/>
<rect x="65.0" y="427.8" width="1.0" height="6.0" fill="#9ad7c1"/>
<rect x="66.0" y="444.1" width="1.0" height="6.0" fill="#9ad7c1"/>
<rect x="67.0" y="449.6" width="1.0" height="6.0" fill="#9ad7c1"/>
<rect x="67.0" y="444.1" width="1.0" height="6.0" fill="#9ad7c1"/>
<rect x="67.0" y="438.6" width="1.0" height="6.0" fill="#9ad7c1"/>
<rect x="67.0" y="433.2" width="1.0" height="6.0" fill="#9ad7c1"/>
<rect x="68.0" y="438.6" width="1.0" height="6.0" fill="#b9e6d6"/>
<rect x="68.0" y="433.2" width="1.0" height="6.0" fill="#9ad7c1"/>
<rect x="69.0" y="438.6" width="1.0" height="6.0" fill="#9ad7c1"/>
<rect x="70.0" y="449.6" width="1.0" height="6.0" fill="#9ad7c1"/>
<rect x="70.0" y="444.1" width="1.0" height="6.0" fill="#9ad7c1"/>
<rect x="70.0" y="438.6" width="1.0" height="6.0" fill="#b9e6d6"/>
<rect x="70.0" y="433.2" width="1.0" height="6.0" fill="#9ad7c1"/>
<rect x="71.0" y="449.6" width="1.0" height="6.0" fill="#9ad7c1"/>
<rect x="71.0" y="444.1" width="1.0" height="6.0" fill="#b9e6d6"/>
<rect x="71.0" y="438.6" width="1.0" height="6.0" fill="#9ad7c1"/>
<rect x="72.0" y="449.6" width="1.0" height="6.0" fill="#9ad7c1"/>
<rect x="72.0" y="444.1" width="1.0" height="6.0" fill="#b9e6d6"/>
<rect x="72.0" y="438.6" width="1.0" height="6.0" fill="#9ad7c1"/>
<rect x="73.0" y="444.1" width="1.0" height="6.0" fill="#9ad7c1"/>
<rect x="73.0" y="438.6" width="1.0" height="6.0" fill="#9ad7c1"/>
<rect x="73.0" y="433.2" width="1.0" height="6.0" fill="#9ad7c1"/>
<rect x="73.0" y="427.8" width="1.0" height="6.0" fill="#9ad7c1"/>
<rect x="74.0" y="449.6" width="1.0" height="6.0" fill="#9ad7c1"/>
<rect x="74.0" y="438.6" width="1.0" height="6.0" fill="#9ad7c1"/>
<rect x="74.0" y="433.2" width="1.0" height="6.0" fill="#b9e6d6"/>
<rect x="75.0" y="449.6" width="1.0" height="6.0" fill="#9ad7c1"/>
<rect x="75.0" y="444.1" width="1.0" height="6.0" fill="#b9e6d6"/>
<rect x="76.0" y="444.1" width="1.0" height="6.0" fill="#9ad7c1"/>
<rect x="76.0" y="438.6" width="1.0" height="6.0" fill="#9ad7c1"/>
<rect x="76.0" y="422.3" width="1.0" height="6.0" fill="#b9e6d6"/>
<rect x="77.0" y="449.6" width="1.0" height="6.0" fill="#9ad7c1"/>
<rect x="77.0" y="444.1" width="1.0" height="6.0" fill="#9ad7c1"/>
<rect x="77.0" y="438.6" width="1.0" height="6.0" fill="#9ad7c1"/>
<rect x="77.0" y="433.2" width="1.0" height="6.0" fill="#9ad7c1"/>
<rect x="77.0" y="427.8" width="1.0" height="6.0" fill="#9ad7c1"/>
<rect x="77.0" y="422.3" width="1.0" height="6.0" fill="#9ad7c1"/>
<rect x="78.0" y="444.1" width="1.0" height="6.0" fill="#9ad7c1"/>
<rect x="78.0" y="438.6" width="1.0" height="6.0" fill="#9ad7c1"/>
<rect x="78.0" y="433.2" width="1.0" height="6.0" fill="#9ad7c1"/>
<rect x="79.0" y="444.1" width="1.0" height="6.0" fill="#9ad7c1"/>
<rect x="79.0" y="438.6" width="1.0" height="6.0" fill="#9ad7c1"/>
<rect x="79.0" y="433.2" width="1.0" height="6.0" fill="#9ad7c1"/>
<rect x="79.0" y="427.8" width="1.0" height="6.0" fill="#b9e6d6"/>
<rect x="80.0" y="444.1" width="1.0" height="6.0" fill="#9ad7c1"/>
<rect x="80.0" y="438.6" width="1.0" height="6.0" fill="#9ad7c1"/>
<rect x="80.0" y="433.2" width="1.0" height="6.0" fill="#9ad7c1"/>
<rect x="80.0" y="427.8" width="1.0" height="6.0" fill="#9ad7c1"/>
<rect x="80.0" y="422.3" width="1.0" height="6.0" fill="#9ad7c1"/>
<rect x="81.0" y="449.6" width="1.0" height="6.0" fill="#9ad7c1"/>
<rect x="81.0" y="444.1" width="1.0" height="6.0" fill="#9ad7c1"/>
<rect x="81.0" y="438.6" width="1.0" height="6.0" fill="#b9e6d6"/>
<rect x="81.0" y="433.2" width="1.0" height="6.0" fill="#9ad7c1"/>
<rect x="81.0" y="422.3" width="1.0" height="6.0" fill="#9ad7c1"/>
<rect x="82.0" y="449.6" width="1.0" height="6.0" fill="#9ad7c1"/>
<rect x="82.0" y="444.1" width="1.0" height="6.0" fill="#9ad7c1"/>
<rect x="82.0" y="438.6" width="1.0" height="6.0" fill="#9ad7c1"/>
<rect x="82.0" y="433.2" width="1.0" height="6.0" fill="#b9e6d6"/>
<rect x="82.0" y="427.8" width="1.0" height="6.0" fill="#b9e6d6"/>
<rect x="83.0" y="449.6" width="1.0" height="6.0" fill="#9ad7c1"/>
<rect x="83.0" y="444.1" width="1.0" height="6.0" fill="#9ad7c1"/>
<rect x="83.0" y="438.6" width="1.0" height="6.0" fill="#b9e6d6"/>
<rect x="83.0" y="433.2" width="1.0" height="6.0" fill="#9ad7c1"/>
<rect x="83.0" y="427.8" width="1.0" height="6.0" fill="#9ad7c1"/>
<rect x="83.0" y="422.3" width="1.0" height="6.0" fill="#9ad7c1"/>
<rect x="84.0" y="444.1" width="1.0" height="6.0" fill="#9ad7c1"/>
<rect x="84.0" y="438.6" width="1.0" height="6.0" fill="#9ad7c1"/>
<rect x="84.0" y="433.2" width="1.0" height="6.0" fill="#b9e6d6"/>
<rect x="84.0" y="427.8" width="1.0" height="6.0" fill="#9ad7c1"/>
<rect x="85.0" y="444.1" width="1.0" height="6.0" fill="#9ad7c1"/>
<rect x="85.0" y="438.6" width="1.0" height="6.0" fill="#9ad7c1"/>
<rect x="85.0" y="433.2" width="1.0" height="6.0" fill="#b9e6d6"/>
<rect x="85.0" y="427.8" width="1.0" height="6.0" fill="#9ad7c1"/>
<rect x="85.0" y="416.9" width="1.0" height="6.0" fill="#9ad7c1"/>
<rect x="86.0" y="438.6" width="1.0" height="6.0" fill="#9ad7c1"/>
<rect x="86.0" y="433.2" width="1.0" height="6.0" fill="#9ad7c1"/>
<rect x="86.0" y="427.8" width="1.0" height="6.0" fill="#9ad7c1"/>
<rect x="86.0" y="422.3" width="1.0" height="6.0" fill="#9ad7c1"/>
<rect x="87.0" y="438.6" width="1.0" height="6.0" fill="#9ad7c1"/>
<rect x="87.0" y="433.2" width="1.0" height="6.0" fill="#9ad7c1"/>
<rect x="87.0" y="427.8" width="1.0" height="6.0" fill="#b9e6d6"/>
<rect x="87.0" y="422.3" width="1.0" height="6.0" fill="#9ad7c1"/>
<rect x="87.0" y="416.9" width="1.0" height="6.0" fill="#b9e6d6"/>
<rect x="88.0" y="444.1" width="1.0" height="6.0" fill="#9ad7c1"/>
<rect x="88.0" y="433.2" width="1.0" height="6.0" fill="#9ad7c1"/>
<rect x="88.0" y="427.8" width="1.0" height="6.0" fill="#9ad7c1"/>
<rect x="88.0" y="422.3" width="1.0" height="6.0" fill="#9ad7c1"/>
<rect x="89.0" y="444.1" width="1.0" height="6.0" fill="#b9e6d6"/>
<rect x="89.0" y="438.6" width="1.0" height="6.0" fill="#9ad7c1"/>
<rect x="89.0" y="433.2" width="1.0" height="6.0" fill="#9ad7c1"/>
<rect x="89.0" y="422.3" width="1.0" height="6.0" fill="#9ad7c1"/>
<rect x="89.0" y="416.9" width="1.0" height="6.0" fill="#9ad7c1"/>
<rect x="90.0" y="444.1" width="1.0" height="6.0" fill="#b9e6d6"/>
<rect x="90.0" y="438.6" width="1.0" height="6.0" fill="#9ad7c1"/>
<rect x="90.0" y="433.2" width="1.0" height="6.0" fill="#9ad7c1"/>
<rect x="90.0" y="422.3" width="1.0" height="6.0" fill="#b9e6d6"/>
<rect x="90.0" y="416.9" width="1.0" height="6.0" fill="#b9e6d6"/>
<rect x="91.0" y="444.1" width="1.0" height="6.0" fill="#9ad7c1"/>
<rect x="91.0" y="438.6" width="1.0" height="6.0" fill="#9ad7c1"/>
<rect x="91.0" y="433.2" width="1.0" height="6.0" fill="#b9e6d6"/>
<rect x="91.0" y="427.8" width="1.0" height="6.0" fill="#9ad7c1"/>
<rect x="91.0" y="422.3" width="1.0" height="6.0" fill="#9ad7c1"/>
<rect x="92.0" y="438.6" width="1.0" height="6.0" fill="#9ad7c1"/>
<rect x="92.0" y="433.2" width="1.0" height="6.0" fill="#b9e6d6"/>
<rect x="92.0" y="427.8" width="1.0" height="6.0" fill="#b9e6d6"/>
<rect x="92.0" y="416.9" width="1.0" height="6.0" fill="#9ad7c1"/>
<rect x="93.0" y="427.8" width="1.0" height="6.0" fill="#9ad7c1"/>
<rect x="93.0" y="422.3" width="1.0" height="6.0" fill="#9ad7c1"/>
<rect x="93.0" y="411.4" width="1.0" height="6.0" fill="#9ad7c1"/>
<rect x="94.0" y="444.1" width="1.0" height="6.0" fill="#9ad7c1"/>
<rect x="94.0" y="433.2" width="1.0" height="6.0" fill="#b9e6d6"/>
<rect x="94.0" y="427.8" width="1.0" height="6.0" fill="#9ad7c1"/>
<rect x="94.0" y="422.3" width="1.0" height="6.0" fill="#9ad7c1"/>
<rect x="95.0" y="444.1" width="1.0" height="6.0" fill="#9ad7c1"/>
<rect x="95.0" y="438.6" width="1.0" height="6.0" fill="#9ad7c1"/>
<rect x="95.0" y="433.2" width="1.0" height="6.0" fill="#9ad7c1"/>
<rect x="95.0" y="427.8" width="1.0" height="6.0" fill="#9ad7c1"/>
<rect x="95.0" y="422.3" width="1.0" height="6.0" fill="#b9e6d6"/>
<rect x="95.0" y="416.9" width="1.0" height="6.0" fill="#b9e6d6"/>
<rect x="95.0" y="411.4" width="1.0" height="6.0" fill="#9ad7c1"/>
<rect x="96.0" y="444.1" width="1.0" height="6.0" fill="#9ad7c1"/>
<rect x="96.0" y="438.6" width="1.0" height="6.0" fill="#b9e6d6"/>
<rect x="96.0" y="433.2" width="1.0" height="6.0" fill="#9ad7c1"/>
<rect x="96.0" y="427.8" width="1.0" height="6.0" fill="#9ad7c1"/>
<rect x="96.0" y="422.3" width="1.0" height="6.0" fill="#b9e6d6"/>
<rect x="97.0" y="433.2" width="1.0" height="6.0" fill="#9ad7c1"/>
<rect x="97.0" y="427.8" width="1.0" height="6.0" fill="#b9e6d6"/>
<rect x="97.0" y="422.3" width="1.0" height="6.0" fill="#9ad7c1"/>
<rect x="97.0" y="411.4" width="1.0" height="6.0" fill="#9ad7c1"/>
<rect x="98.0" y="427.8" width="1.0" height="6.0" fill="#b9e6d6"/>
<rect x="98.0" y="422.3" width="1.0" height="6.0" fill="#9ad7c1"/>
<rect x="98.0" y="416.9" width="1.0" height="6.0" fill="#9ad7c1"/>
<rect x="98.0" y="411.4" width="1.0" height="6.0" fill="#9ad7c1"/>
<rect x="98.0" y="405.9" width="1.0" height="6.0" fill="#9ad7c1"/>
<rect x="99.0" y="433.2" width="1.0" height="6.0" fill="#b9e6d6"/>
<rect x="99.0" y="427.8" width="1.0" height="6.0" fill="#9ad7c1"/>
<rect x="99.0" y="422.3" width="1.0" height="6.0" fill="#9ad7c1"/>
<rect x="99.0" y="416.9" width="1.0" height="6.0" fill="#9ad7c1"/>
<rect x="100.0" y="449.6" width="1.0" height="6.0" fill="#9ad7c1"/>
<rect x="100.0" y="438.6" width="1.0" height="6.0" fill="#9ad7c1"/>
<rect x="100.0" y="433.2" width="1.0" height="6.0" fill="#9ad7c1"/>
<rect x="100.0" y="422.3" width="1.0" height="6.0" fill="#9ad7c1"/>
<rect x="100.0" y="411.4" width="1.0" height="6.0" fill="#9ad7c1"/>
<rect x="101.0" y="438.6" width="1.0" height="6.0" fill="#9ad7c1"/>
<rect x="101.0" y="427.8" width="1.0" height="6.0" fill="#9ad7c1"/>
<rect x="101.0" y="422.3" width="1.0" height="6.0" fill="#9ad7c1"/>
<rect x="101.0" y="416.9" width="1.0" height="6.0" fill="#9ad7c1"/>
<rect x="101.0" y="411.4" width="1.0" height="6.0" fill="#b9e6d6"/>
<rect x="102.0" y="438.6" width="1.0" height="6.0" fill="#b9e6d6"/>
<rect x="102.0" y="433.2" width="1.0" height="6.0" fill="#b9e6d6"/>
<rect x="102.0" y="427.8" width="1.0" height="6.0" fill="#9ad7c1"/>
<rect x="102.0" y="422.3" width="1.0" height="6.0" fill="#b9e6d6"/>
<rect x="102.0" y="416.9" width="1.0" height="6.0" fill="#b9e6d6"/>
<rect x="102.0" y="411.4" width="1.0" height="6.0" fill="#9ad7c1"/>
<rect x="102.0" y="405.9" width="1.0" height="6.0" fill="#9ad7c1"/>
<rect x="103.0" y="433.2" width="1.0" height="6.0" fill="#9ad7c1"/>
<rect x="103.0" y="427.8" width="1.0" height="6.0" fill="#b9e6d6"/>
<rect x="103.0" y="422.3" width="1.0" height="6.0" fill="#9ad7c1"/>
<rect x="103.0" y="411.4" width="1.0" height="6.0" fill="#9ad7c1"/>
<rect x="103.0" y="405.9" width="1.0" height="6.0" fill="#9ad7c1"/>
<rect x="104.0" y="444.1" width="1.0" height="6.0" fill="#b9e6d6"/>
<rect x="104.0" y="433.2" width="1.0" height="6.0" fill="#9ad7c1"/>
<rect x="104.0" y="427.8" width="1.0" height="6.0" fill="#b9e6d6"/>
<rect x="104.0" y="422.3" width="1.0" height="6.0" fill="#9ad7c1"/>
<rect x="104.0" y="416.9" width="1.0" height="6.0" fill="#9ad7c1"/>
<rect x="104.0" y="405.9" width="1.0" height="6.0" fill="#9ad7c1"/>
<rect x="104.0" y="400.5" width="1.0" height="6.0" fill="#9ad7c1"/>
<rect x="105.0" y="433.2" width="1.0" height="6.0" fill="#9ad7c1"/>
<rect x="105.0" y="427.8" width="1.0" height="6.0" fill="#9ad7c1"/>
<rect x="105.0" y="422.3" width="1.0" height="6.0" fill="#9ad7c1"/>
<rect x="105.0" y="416.9" width="1.0" height="6.0" fill="#9ad7c1"/>
<rect x="106.0" y="449.6" width="1.0" height="6.0" fill="#b9e6d6"/>
<rect x="106.0" y="422.3" width="1.0" height="6.0" fill="#9ad7c1"/>
<rect x="106.0" y="416.9" width="1.0" height="6.0" fill="#b9e6d6"/>
<rect x="106.0" y="411.4" width="1.0" height="6.0" fill="#9ad7c1"/>
<rect x="107.0" y="433.2" width="1.0" height="6.0" fill="#b9e6d6"/>
<rect x="107.0" y="427.8" width="1.0" height="6.0" fill="#9ad7c1"/>
<rect x="107.0" y="422.3" width="1.0" height="6.0" fill="#9ad7c1"/>
<rect x="107.0" y="411.4" width="1.0" height="6.0" fill="#9ad7c1"/>
<rect x="107.0" y="405.9" width="1.0" height="6.0" fill="#b9e6d6"/>
<rect x="107.0" y="400.5" width="1.0" height="6.0" fill="#9ad7c1"/>
<rect x="108.0" y="433.2" width="1.0" height="6.0" fill="#b9e6d6"/>
<rect x="108.0" y="422.3" width="1.0" height="6.0" fill="#b9e6d6"/>
<rect x="108.0" y="416.9" width="1.0" height="6.0" fill="#9ad7c1"/>
<rect x="108.0" y="411.4" width="1.0" height="6.0" fill="#9ad7c1"/>
<rect x="108.0" y="405.9" width="1.0" height="6.0" fill="#9ad7c1"/>
<rect x="108.0" y="400.5" width="1.0" height="6.0" fill="#b9e6d6"/>
<rect x="109.0" y="427.8" width="1.0" height="6.0" fill="#b9e6d6"/>
<rect x="109.0" y="422.3" width="1.0" height="6.0" fill="#b9e6d6"/>
<rect x="109.0" y="416.9" width="1.0" height="6.0" fill="#9ad7c1"/>
<rect x="109.0" y="411.4" width="1.0" height="6.0" fill="#b9e6d6"/>
<rect x="109.0" y="405.9" width="1.0" height="6.0" fill="#9ad7c1"/>
<rect x="109.0" y="400.5" width="1.0" height="6.0" fill="#b9e6d6"/>
<rect x="109.0" y="395.1" width="1.0" height="6.0" fill="#9ad7c1"/>
<rect x="110.0" y="444.1" width="1.0" height="6.0" fill="#b9e6d6"/>
<rect x="110.0" y="433.2" width="1.0" height="6.0" fill="#b9e6d6"/>
<rect x="110.0" y="427.8" width="1.0" height="6.0" fill="#9ad7c1"/>
<rect x="110.0" y="416.9" width="1.0" height="6.0" fill="#9ad7c1"/>
<rect x="110.0" y="411.4" width="1.0" height="6.0" fill="#9ad7c1"/>
<rect x="110.0" y="405.9" width="1.0" height="6.0" fill="#9ad7c1"/>
<rect x="110.0" y="400.5" width="1.0" height="6.0" fill="#b9e6d6"/>
<rect x="111.0" y="427.8" width="1.0" height="6.0" fill="#b9e6d6"/>
<rect x="111.0" y="422.3" width="1.0" height="6.0" fill="#9ad7c1"/>
<rect x="111.0" y="416.9" width="1.0" height="6.0" fill="#9ad7c1"/>
<rect x="111.0" y="411.4" width="1.0" height="6.0" fill="#9ad7c1"/>
<rect x="111.0" y="405.9" width="1.0" height="6.0" fill="#b9e6d6"/>
<rect x="111.0" y="400.5" width="1.0" height="6.0" fill="#9ad7c1"/>
<rect x="111.0" y="395.1" width="1.0" height="6.0" fill="#9ad7c1"/>
<rect x="112.0" y="433.2" width="1.0" height="6.0" fill="#9ad7c1"/>
<rect x="112.0" y="427.8" width="1.0" height="6.0" fill="#9ad7c1"/>
<rect x="112.0" y="422.3" width="1.0" height="6.0" fill="#9ad7c1"/>
<rect x="112.0" y="416.9" width="1.0" height="6.0" fill="#9ad7c1"/>
<rect x="112.0" y="400.5" width="1.0" height="6.0" fill="#9ad7c1"/>
<rect x="112.0" y="395.1" width="1.0" height="6.0" fill="#9ad7c1"/>
<rect x="112.0" y="389.6" width="1.0" height="6.0" fill="#b9e6d6"/>
<rect x="113.0" y="449.6" width="1.0" height="6.0" fill="#b9e6d6"/>
<rect x="113.0" y="444.1" width="1.0" height="6.0" fill="#b9e6d6"/>
<rect x="113.0" y="422.3" width="1.0" height="6.0" fill="#b9e6d6"/>
<rect x="113.0" y="416.9" width="1.0" height="6.0" fill="#9ad7c1"/>
<rect x="113.0" y="411.4" width="1.0" height="6.0" fill="#9ad7c1"/>
<rect x="113.0" y="405.9" width="1.0" height="6.0" fill="#9ad7c1"/>
<rect x="113.0" y="400.5" width="1.0" height="6.0" fill="#9ad7c1"/>
<rect x="113.0" y="395.1" width="1.0" height="6.0" fill="#b9e6d6"/>
<rect x="114.0" y="427.8" width="1.0" height="6.0" fill="#9ad7c1"/>
<rect x="114.0" y="422.3" width="1.0" height="6.0" fill="#b9e6d6"/>
<rect x="114.0" y="416.9" width="1.0" height="6.0" fill="#9ad7c1"/>
<rect x="114.0" y="411.4" width="1.0" height="6.0" fill="#9ad7c1"/>
<rect x="114.0" y="405.9" width="1.0" height="6.0" fill="#9ad7c1"/>
<rect x="114.0" y="400.5" width="1.0" height="6.0" fill="#9ad7c1"/>
<rect x="114.0" y="389.6" width="1.0" height="6.0" fill="#9ad7c1"/>
<rect x="114.0" y="384.1" width="1.0" height="6.0" fill="#9ad7c1"/>
<rect x="115.0" y="427.8" width="1.0" height="6.0" fill="#9ad7c1"/>
<rect x="115.0" y="422.3" width="1.0" height="6.0" fill="#9ad7c1"/>
<rect x="115.0" y="411.4" width="1.0" height="6.0" fill="#9ad7c1"/>
<rect x="115.0" y="405.9" width="1.0" height="6.0" fill="#9ad7c1"/>
<rect x="115.0" y="400.5" width="1.0" height="6.0" fill="#b9e6d6"/>
<rect x="115.0" y="395.1" width="1.0" height="6.0" fill="#b9e6d6"/>
<rect x="115.0" y="389.6" width="1.0" height="6.0" fill="#9ad7c1"/>
<rect x="115.0" y="384.1" width="1.0" height="6.0" fill="#b9e6d6"/>
<rect x="116.0" y="449.6" width="1.0" height="6.0" fill="#b9e6d6"/>
<rect x="116.0" y="438.6" width="1.0" height="6.0" fill="#b9e6d6"/>
<rect x="116.0" y="411.4" width="1.0" height="6.0" fill="#9ad7c1"/>
<rect x="116.0" y="405.9" width="1.0" height="6.0" fill="#b9e6d6"/>
<rect x="116.0" y="395.1" width="1.0" height="6.0" fill="#9ad7c1"/>
<rect x="116.0" y="389.6" width="1.0" height="6.0" fill="#b9e6d6"/>
<rect x="116.0" y="384.1" width="1.0" height="6.0" fill="#b9e6d6"/>
<rect x="117.0" y="422.3" width="1.0" height="6.0" fill="#9ad7c1"/>
<rect x="117.0" y="411.4" width="1.0" height="6.0" fill="#9ad7c1"/>
<rect x="117.0" y="405.9" width="1.0" height="6.0" fill="#b9e6d6"/>
<rect x="117.0" y="400.5" width="1.0" height="6.0" fill="#9ad7c1"/>
<rect x="117.0" y="395.1" width="1.0" height="6.0" fill="#9ad7c1"/>
<rect x="117.0" y="389.6" width="1.0" height="6.0" fill="#9ad7c1"/>
<rect x="117.0" y="384.1" width="1.0" height="6.0" fill="#9ad7c1"/>
<rect x="118.0" y="449.6" width="1.0" height="6.0" fill="#b9e6d6"/>
<rect x="118.0" y="422.3" width="1.0" height="6.0" fill="#b9e6d6"/>
<rect x="118.0" y="416.9" width="1.0" height="6.0" fill="#9ad7c1"/>
<rect x="118.0" y="411.4" width="1.0" height="6.0" fill="#9ad7c1"/>
<rect x="118.0" y="395.1" width="1.0" height="6.0" fill="#9ad7c1"/>
<rect x="118.0" y="389.6" width="1.0" height="6.0" fill="#9ad7c1"/>
<rect x="118.0" y="384.1" width="1.0" height="6.0" fill="#9ad7c1"/>
<rect x="118.0" y="378.7" width="1.0" height="6.0" fill="#9ad7c1"/>
<rect x="119.0" y="444.1" width="1.0" height="6.0" fill="#9ad7c1"/>
<rect x="119.0" y="427.8" width="1.0" height="6.0" fill="#9ad7c1"/>
<rect x="119.0" y="416.9" width="1.0" height="6.0" fill="#b9e6d6"/>
<rect x="119.0" y="411.4" width="1.0" height="6.0" fill="#9ad7c1"/>
<rect x="119.0" y="405.9" width="1.0" height="6.0" fill="#9ad7c1"/>
<rect x="119.0" y="400.5" width="1.0" height="6.0" fill="#9ad7c1"/>
<rect x="119.0" y="395.1" width="1.0" height="6.0" fill="#9ad7c1"/>
<rect x="119.0" y="389.6" width="1.0" height="6.0" fill="#9ad7c1"/>
<rect x="119.0" y="384.1" width="1.0" height="6.0" fill="#9ad7c1"/>
<rect x="119.0" y="378.7" width="1.0" height="6.0" fill="#9ad7c1"/>
<rect x="119.0" y="373.2" width="1.0" height="6.0" fill="#9ad7c1"/>
<rect x="119.0" y="367.8" width="1.0" height="6.0" fill="#b9e6d6"/>
<rect x="119.0" y="362.4" width="1.0" height="6.0" fill="#9ad7c1"/>
<rect x="120.0" y="427.8" width="1.0" height="6.0" fill="#9ad7c1"/>
<rect x="120.0" y="416.9" width="1.0" height="6.0" fill="#9ad7c1"/>
<rect x="120.0" y="400.5" width="1.0" height="6.0" fill="#9ad7c1"/>
<rect x="120.0" y="395.1" width="1.0" height="6.0" fill="#9ad7c1"/>
<rect x="120.0" y="389.6" width="1.0" height="6.0" fill="#9ad7c1"/>
<rect x="120.0" y="384.1" width="1.0" height="6.0" fill="#9ad7c1"/>
<rect x="120.0" y="378.7" width="1.0" height="6.0" fill="#9ad7c1"/>
<rect x="120.0" y="373.2" width="1.0" height="6.0" fill="#b9e6d6"/>
<rect x="120.0" y="367.8" width="1.0" height="6.0" fill="#9ad7c1"/>
<rect x="121.0" y="422.3" width="1.0" height="6.0" fill="#9ad7c1"/>
<rect x="121.0" y="416.9" width="1.0" height="6.0" fill="#b9e6d6"/>
<rect x="121.0" y="411.4" width="1.0" height="6.0" fill="#9ad7c1"/>
<rect x="121.0" y="400.5" width="1.0" height="6.0" fill="#9ad7c1"/>
<rect x="121.0" y="395.1" width="1.0" height="6.0" fill="#9ad7c1"/>
<rect x="121.0" y="389.6" width="1.0" height="6.0" fill="#9ad7c1"/>
<rect x="121.0" y="384.1" width="1.0" height="6.0" fill="#b9e6d6"/>
<rect x="121.0" y="378.7" width="1.0" height="6.0" fill="#9ad7c1"/>
<rect x="121.0" y="373.2" width="1.0" height="6.0" fill="#9ad7c1"/>
<rect x="122.0" y="422.3" width="1.0" height="6.0" fill="#b9e6d6"/>
<rect x="122.0" y="416.9" width="1.0" height="6.0" fill="#9ad7c1"/>
<rect x="122.0" y="411.4" width="1.0" height="6.0" fill="#b9e6d6"/>
<rect x="122.0" y="405.9" width="1.0" height="6.0" fill="#b9e6d6"/>
<rect x="122.0" y="400.5" width="1.0" height="6.0" fill="#9ad7c1"/>
<rect x="122.0" y="395.1" width="1.0" height="6.0" fill="#9ad7c1"/>
<rect x="122.0" y="389.6" width="1.0" height="6.0" fill="#b9e6d6"/>
<rect x="122.0" y="384.1" width="1.0" height="6.0" fill="#9ad7c1"/>
<rect x="122.0" y="378.7" width="1.0" height="6.0" fill="#9ad7c1"/>
<rect x="122.0" y="373.2" width="1.0" height="6.0" fill="#9ad7c1"/>
<rect x="122.0" y="367.8" width="1.0" height="6.0" fill="#9ad7c1"/>
<rect x="122.0" y="362.4" width="1.0" height="6.0" fill="#b9e6d6"/>
<rect x="123.0" y="405.9" width="1.0" height="6.0" fill="#9ad7c1"/>
<rect x="123.0" y="395.1" width="1.0" height="6.0" fill="#9ad7c1"/>
<rect x="123.0" y="389.6" width="1.0" height="6.0" fill="#b9e6d6"/>
<rect x="123.0" y="384.1" width="1.0" height="6.0" fill="#9ad7c1"/>
<rect x="123.0" y="378.7" width="1.0" height="6.0" fill="#b9e6d6"/>
<rect x="123.0" y="373.2" width="1.0" height="6.0" fill="#b9e6d6"/>
<rect x="123.0" y="367.8" width="1.0" height="6.0" fill="#9ad7c1"/>
<rect x="123.0" y="362.4" width="1.0" height="6.0" fill="#b9e6d6"/>
<rect x="123.0" y="356.9" width="1.0" height="6.0" fill="#9ad7c1"/>
<rect x="123.0" y="351.4" width="1.0" height="6.0" fill="#9ad7c1"/>
<rect x="123.0" y="346.0" width="1.0" height="6.0" fill="#b9e6d6"/>
<rect x="124.0" y="444.1" width="1.0" height="6.0" fill="#9ad7c1"/>
<rect x="124.0" y="395.1" width="1.0" height="6.0" fill="#b9e6d6"/>
<rect x="124.0" y="389.6" width="1.0" height="6.0" fill="#9ad7c1"/>
<rect x="124.0" y="384.1" width="1.0" height="6.0" fill="#9ad7c1"/>
<rect x="124.0" y="373.2" width="1.0" height="6.0" fill="#b9e6d6"/>
<rect x="124.0" y="367.8" width="1.0" height="6.0" fill="#9ad7c1"/>
<rect x="124.0" y="362.4" width="1.0" height="6.0" fill="#9ad7c1"/>
<rect x="124.0" y="351.4" width="1.0" height="6.0" fill="#9ad7c1"/>
<rect x="124.0" y="346.0" width="1.0" height="6.0" fill="#9ad7c1"/>
<rect x="125.0" y="438.6" width="1.0" height="6.0" fill="#9ad7c1"/>
<rect x="125.0" y="405.9" width="1.0" height="6.0" fill="#9ad7c1"/>
<rect x="125.0" y="400.5" width="1.0" height="6.0" fill="#b9e6d6"/>
<rect x="125.0" y="395.1" width="1.0" height="6.0" fill="#9ad7c1"/>
<rect x="125.0" y="389.6" width="1.0" height="6.0" fill="#9ad7c1"/>
<rect x="125.0" y="384.1" width="1.0" height="6.0" fill="#9ad7c1"/>
<rect x="125.0" y="378.7" width="1.0" height="6.0" fill="#b9e6d6"/>
<rect x="125.0" y="367.8" width="1.0" height="6.0" fill="#9ad7c1"/>
<rect x="125.0" y="362.4" width="1.0" height="6.0" fill="#9ad7c1"/>
<rect x="125.0" y="356.9" width="1.0" height="6.0" fill="#9ad7c1"/>
<rect x="125.0" y="351.4" width="1.0" height="6.0" fill="#9ad7c1"/>
<rect x="126.0" y="433.2" width="1.0" height="6.0" fill="#b9e6d6"/>
<rect x="126.0" y="395.1" width="1.0" height="6.0" fill="#b9e6d6"/>
<rect x="126.0" y="389.6" width="1.0" height="6.0" fill="#9ad7c1"/>
<rect x="126.0" y="384.1" width="1.0" height="6.0" fill="#9ad7c1"/>
<rect x="126.0" y="378.7" width="1.0" height="6.0" fill="#9ad7c1"/>
<rect x="126.0" y="373.2" width="1.0" height="6.0" fill="#9ad7c1"/>
<rect x="126.0" y="367.8" width="1.0" height="6.0" fill="#9ad7c1"/>
<rect x="126.0" y="362.4" width="1.0" height="6.0" fill="#9ad7c1"/>
<rect x="126.0" y="356.9" width="1.0" height="6.0" fill="#b9e6d6"/>
<rect x="126.0" y="346.0" width="1.0" height="6.0" fill="#9ad7c1"/>
<rect x="126.0" y="340.5" width="1.0" height="6.0" fill="#9ad7c1"/>
<rect x="126.0" y="335.1" width="1.0" height="6.0" fill="#9ad7c1"/>
<rect x="127.0" y="444.1" width="1.0" height="6.0" fill="#b9e6d6"/>
<rect x="127.0" y="384.1" width="1.0" height="6.0" fill="#9ad7c1"/>
<rect x="127.0" y="378.7" width="1.0" height="6.0" fill="#9ad7c1"/>
<rect x="127.0" y="373.2" width="1.0" height="6.0" fill="#9ad7c1"/>
<rect x="127.0" y="367.8" width="1.0" height="6.0" fill="#9ad7c1"/>
<rect x="127.0" y="362.4" width="1.0" height="6.0" fill="#9ad7c1"/>
<rect x="127.0" y="351.4" width="1.0" height="6.0" fill="#9ad7c1"/>
<rect x="127.0" y="340.5" width="1.0" height="6.0" fill="#9ad7c1"/>
<rect x="127.0" y="335.1" width="1.0" height="6.0" fill="#b9e6d6"/>
<rect x="127.0" y="329.6" width="1.0" height="6.0" fill="#9ad7c1"/>
<rect x="128.0" y="373.2" width="1.0" height="6.0" fill="#9ad7c1"/>
<rect x="128.0" y="367.8" width="1.0" height="6.0" fill="#9ad7c1"/>
<rect x="128.0" y="362.4" width="1.0" height="6.0" fill="#9ad7c1"/>
<rect x="128.0" y="356.9" width="1.0" height="6.0" fill="#b9e6d6"/>
<rect x="128.0" y="351.4" width="1.0" height="6.0" fill="#9ad7c1"/>
<rect x="128.0" y="346.0" width="1.0" height="6.0" fill="#9ad7c1"/>
<rect x="128.0" y="340.5" width="1.0" height="6.0" fill="#9ad7c1"/>
<rect x="128.0" y="335.1" width="1.0" height="6.0" fill="#9ad7c1"/>
<rect x="128.0" y="324.2" width="1.0" height="6.0" fill="#b9e6d6"/>
<rect x="129.0" y="378.7" width="1.0" height="6.0" fill="#9ad7c1"/>
<rect x="129.0" y="373.2" width="1.0" height="6.0" fill="#9ad7c1"/>
<rect x="129.0" y="367.8" width="1.0" height="6.0" fill="#9ad7c1"/>
<rect x="129.0" y="362.4" width="1.0" height="6.0" fill="#b9e6d6"/>
<rect x="129.0" y="356.9" width="1.0" height="6.0" fill="#9ad7c1"/>
<rect x="129.0" y="351.4" width="1.0" height="6.0" fill="#b9e6d6"/>
<rect x="129.0" y="346.0" width="1.0" height="6.0" fill="#9ad7c1"/>
<rect x="129.0" y="340.5" width="1.0" height="6.0" fill="#b9e6d6"/>
<rect x="129.0" y="335.1" width="1.0" height="6.0" fill="#b9e6d6"/>
<rect x="129.0" y="324.2" width="1.0" height="6.0" fill="#9ad7c1"/>
<rect x="129.0" y="318.8" width="1.0" height="6.0" fill="#9ad7c1"/>
<rect x="302.0" y="449.6" width="1.0" height="6.0" fill="#b9e6d6"/>
<rect x="302.0" y="444.1" width="1.0" height="6.0" fill="#b9e6d6"/>
<rect x="304.0" y="444.1" width="1.0" height="6.0" fill="#9ad7c1"/>
<rect x="305.0" y="449.6" width="1.0" height="6.0" fill="#9ad7c1"/>
<rect x="306.0" y="449.6" width="1.0" height="6.0" fill="#9ad7c1"/>
<rect x="306.0" y="438.6" width="1.0" height="6.0" fill="#9ad7c1"/>
<rect x="307.0" y="449.6" width="1.0" height="6.0" fill="#b9e6d6"/>
<rect x="307.0" y="438.6" width="1.0" height="6.0" fill="#9ad7c1"/>
<rect x="308.0" y="449.6" width="1.0" height="6.0" fill="#9ad7c1"/>
<rect x="309.0" y="444.1" width="1.0" height="6.0" fill="#9ad7c1"/>
<rect x="310.0" y="444.1" width="1.0" height="6.0" fill="#b9e6d6"/>
<rect x="310.0" y="438.6" width="1.0" height="6.0" fill="#9ad7c1"/>
<rect x="310.0" y="433.2" width="1.0" height="6.0" fill="#9ad7c1"/>
<rect x="311.0" y="449.6" width="1.0" height="6.0" fill="#9ad7c1"/>
<rect x="312.0" y="444.1" width="1.0" height="6.0" fill="#9ad7c1"/>
<rect x="312.0" y="438.6" width="1.0" height="6.0" fill="#9ad7c1"/>
<rect x="313.0" y="449.6" width="1.0" height="6.0" fill="#9ad7c1"/>
<rect x="313.0" y="444.1" width="1.0" height="6.0" fill="#9ad7c1"/>
<rect x="314.0" y="449.6" width="1.0" height="6.0" fill="#b9e6d6"/>
<rect x="314.0" y="444.1" width="1.0" height="6.0" fill="#b9e6d6"/>
<rect x="314.0" y="433.2" width="1.0" height="6.0" fill="#9ad7c1"/>
<rect x="314.0" y="427.8" width="1.0" height="6.0" fill="#9ad7c1"/>
<rect x="315.0" y="444.1" width="1.0" height="6.0" fill="#9ad7c1"/>
<rect x="316.0" y="449.6" width="1.0" height="6.0" fill="#9ad7c1"/>
<rect x="316.0" y="433.2" width="1.0" height="6.0" fill="#b9e6d6"/>
<rect x="317.0" y="449.6" width="1.0" height="6.0" fill="#9ad7c1"/>
<rect x="317.0" y="438.6" width="1.0" height="6.0" fill="#9ad7c1"/>
<rect x="317.0" y="433.2" width="1.0" height="6.0" fill="#9ad7c1"/>
<rect x="317.0" y="427.8" width="1.0" height="6.0" fill="#b9e6d6"/>
<rect x="318.0" y="438.6" width="1.0" height="6.0" fill="#9ad7c1"/>
<rect x="319.0" y="444.1" width="1.0" height="6.0" fill="#9ad7c1"/>
<rect x="319.0" y="438.6" width="1.0" height="6.0" fill="#9ad7c1"/>
<rect x="319.0" y="433.2" width="1.0" height="6.0" fill="#b9e6d6"/>
<rect x="319.0" y="427.8" width="1.0" height="6.0" fill="#b9e6d6"/>
<rect x="320.0" y="444.1" width="1.0" height="6.0" fill="#b9e6d6"/>
<rect x="320.0" y="438.6" width="1.0" height="6.0" fill="#9ad7c1"/>
<rect x="320.0" y="433.2" width="1.0" height="6.0" fill="#9ad7c1"/>
<rect x="320.0" y="422.3" width="1.0" height="6.0" fill="#9ad7c1"/>
<rect x="321.0" y="438.6" width="1.0" height="6.0" fill="#b9e6d6"/>
<rect x="321.0" y="433.2" width="1.0" height="6.0" fill="#9ad7c1"/>
<rect x="321.0" y="427.8" width="1.0" height="6.0" fill="#9ad7c1"/>
<rect x="322.0" y="444.1" width="1.0" height="6.0" fill="#b9e6d6"/>
<rect x="322.0" y="438.6" width="1.0" height="6.0" fill="#9ad7c1"/>
<rect x="322.0" y="433.2" width="1.0" height="6.0" fill="#9ad7c1"/>
<rect x="323.0" y="449.6" width="1.0" height="6.0" fill="#9ad7c1"/>
<rect x="323.0" y="444.1" width="1.0" height="6.0" fill="#9ad7c1"/>
<rect x="323.0" y="433.2" width="1.0" height="6.0" fill="#9ad7c1"/>
<rect x="323.0" y="427.8" width="1.0" height="6.0" fill="#9ad7c1"/>
<rect x="323.0" y="422.3" width="1.0" height="6.0" fill="#9ad7c1"/>
<rect x="324.0" y="444.1" width="1.0" height="6.0" fill="#9ad7c1"/>
<rect x="324.0" y="438.6" width="1.0" height="6.0" fill="#b9e6d6"/>
<rect x="324.0" y="427.8" width="1.0" height="6.0" fill="#b9e6d6"/>
<rect x="324.0" y="422.3" width="1.0" height="6.0" fill="#9ad7c1"/>
<rect x="325.0" y="449.6" width="1.0" height="6.0" fill="#9ad7c1"/>
<rect x="325.0" y="438.6" width="1.0" height="6.0" fill="#b9e6d6"/>
<rect x="325.0" y="433.2" width="1.0" height="6.0" fill="#9ad7c1"/>
<rect x="325.0" y="427.8" width="1.0" height="6.0" fill="#9ad7c1"/>
<rect x="326.0" y="438.6" width="1.0" height="6.0" fill="#9ad7c1"/>
<rect x="326.0" y="433.2" width="1.0" height="6.0" fill="#9ad7c1"/>
<rect x="326.0" y="427.8" width="1.0" height="6.0" fill="#9ad7c1"/>
<rect x="326.0" y="422.3" width="1.0" height="6.0" fill="#9ad7c1"/>
<rect x="327.0" y="449.6" width="1.0" height="6.0" fill="#b9e6d6"/>
<rect x="327.0" y="444.1" width="1.0" height="6.0" fill="#9ad7c1"/>
<rect x="327.0" y="438.6" width="1.0" height="6.0" fill="#9ad7c1"/>
<rect x="327.0" y="433.2" width="1.0" height="6.0" fill="#9ad7c1"/>
<rect x="327.0" y="427.8" width="1.0" height="6.0" fill="#9ad7c1"/>
<rect x="328.0" y="438.6" width="1.0" height="6.0" fill="#b9e6d6"/>
<rect x="328.0" y="433.2" width="1.0" height="6.0" fill="#9ad7c1"/>
<rect x="328.0" y="427.8" width="1.0" height="6.0" fill="#9ad7c1"/>
<rect x="328.0" y="422.3" width="1.0" height="6.0" fill="#9ad7c1"/>
<rect x="329.0" y="444.1" width="1.0" height="6.0" fill="#9ad7c1"/>
<rect x="329.0" y="438.6" width="1.0" height="6.0" fill="#9ad7c1"/>
<rect x="329.0" y="433.2" width="1.0" height="6.0" fill="#b9e6d6"/>
<rect x="329.0" y="416.9" width="1.0" height="6.0" fill="#9ad7c1"/>
<rect x="330.0" y="444.1" width="1.0" height="6.0" fill="#9ad7c1"/>
<rect x="330.0" y="438.6" width="1.0" height="6.0" fill="#9ad7c1"/>
<rect x="330.0" y="433.2" width="1.0" height="6.0" fill="#9ad7c1"/>
<rect x="330.0" y="427.8" width="1.0" height="6.0" fill="#9ad7c1"/>
<rect x="330.0" y="416.9" width="1.0" height="6.0" fill="#9ad7c1"/>
<rect x="331.0" y="444.1" width="1.0" height="6.0" fill="#9ad7c1"/>
<rect x="331.0" y="438.6" width="1.0" height="6.0" fill="#9ad7c1"/>
<rect x="331.0" y="433.2" width="1.0" height="6.0" fill="#9ad7c1"/>
<rect x="331.0" y="427.8" width="1.0" height="6.0" fill="#9ad7c1"/>
<rect x="332.0" y="444.1" width="1.0" height="6.0" fill="#9ad7c1"/>
<rect x="332.0" y="438.6" width="1.0" height="6.0" fill="#9ad7c1"/>
<rect x="332.0" y="433.2" width="1.0" height="6.0" fill="#9ad7c1"/>
<rect x="332.0" y="427.8" width="1.0" height="6.0" fill="#9ad7c1"/>
<rect x="332.0" y="422.3" width="1.0" height="6.0" fill="#b9e6d6"/>
<rect x="333.0" y="438.6" width="1.0" height="6.0" fill="#b9e6d6"/>
<rect x="333.0" y="433.2" width="1.0" height="6.0" fill="#9ad7c1"/>
<rect x="333.0" y="427.8" width="1.0" height="6.0" fill="#b9e6d6"/>
<rect x="333.0" y="422.3" width="1.0" height="6.0" fill="#b9e6d6"/>
<rect x="333.0" y="416.9" width="1.0" height="6.0" fill="#b9e6d6"/>
<rect x="334.0" y="438.6" width="1.0" height="6.0" fill="#9ad7c1"/>
<rect x="334.0" y="433.2" width="1.0" height="6.0" fill="#9ad7c1"/>
<rect x="334.0" y="427.8" width="1.0" height="6.0" fill="#9ad7c1"/>
<rect x="334.0" y="422.3" width="1.0" height="6.0" fill="#9ad7c1"/>
<rect x="334.0" y="416.9" width="1.0" height="6.0" fill="#9ad7c1"/>
<rect x="335.0" y="444.1" width="1.0" height="6.0" fill="#b9e6d6"/>
<rect x="335.0" y="433.2" width="1.0" height="6.0" fill="#9ad7c1"/>
<rect x="335.0" y="427.8" width="1.0" height="6.0" fill="#b9e6d6"/>
<rect x="335.0" y="422.3" width="1.0" height="6.0" fill="#9ad7c1"/>
<rect x="335.0" y="416.9" width="1.0" height="6.0" fill="#9ad7c1"/>
<rect x="336.0" y="433.2" width="1.0" height="6.0" fill="#9ad7c1"/>
<rect x="336.0" y="427.8" width="1.0" height="6.0" fill="#b9e6d6"/>
<rect x="336.0" y="411.4" width="1.0" height="6.0" fill="#9ad7c1"/>
<rect x="337.0" y="433.2" width="1.0" height="6.0" fill="#9ad7c1"/>
<rect x="337.0" y="427.8" width="1.0" height="6.0" fill="#b9e6d6"/>
<rect x="337.0" y="416.9" width="1.0" height="6.0" fill="#b9e6d6"/>
<rect x="337.0" y="411.4" width="1.0" height="6.0" fill="#b9e6d6"/>
<rect x="338.0" y="449.6" width="1.0" height="6.0" fill="#b9e6d6"/>
<rect x="338.0" y="427.8" width="1.0" height="6.0" fill="#9ad7c1"/>
<rect x="338.0" y="422.3" width="1.0" height="6.0" fill="#b9e6d6"/>
<rect x="338.0" y="416.9" width="1.0" height="6.0" fill="#9ad7c1"/>
<rect x="338.0" y="411.4" width="1.0" height="6.0" fill="#9ad7c1"/>
<rect x="339.0" y="433.2" width="1.0" height="6.0" fill="#9ad7c1"/>
<rect x="339.0" y="427.8" width="1.0" height="6.0" fill="#b9e6d6"/>
<rect x="339.0" y="422.3" width="1.0" height="6.0" fill="#9ad7c1"/>
<rect x="339.0" y="405.9" width="1.0" height="6.0" fill="#9ad7c1"/>
<rect x="340.0" y="433.2" width="1.0" height="6.0" fill="#9ad7c1"/>
<rect x="340.0" y="427.8" width="1.0" height="6.0" fill="#b9e6d6"/>
<rect x="340.0" y="422.3" width="1.0" height="6.0" fill="#b9e6d6"/>
<rect x="340.0" y="416.9" width="1.0" height="6.0" fill="#9ad7c1"/>
<rect x="340.0" y="411.4" width="1.0" height="6.0" fill="#b9e6d6"/>
<rect x="340.0" y="405.9" width="1.0" height="6.0" fill="#9ad7c1"/>
<rect x="341.0" y="438.6" width="1.0" height="6.0" fill="#9ad7c1"/>
<rect x="341.0" y="433.2" width="1.0" height="6.0" fill="#9ad7c1"/>
<rect x="341.0" y="427.8" width="1.0" height="6.0" fill="#9ad7c1"/>
<rect x="341.0" y="422.3" width="1.0" height="6.0" fill="#b9e6d6"/>
<rect x="341.0" y="416.9" width="1.0" height="6.0" fill="#9ad7c1"/>
<rect x="342.0" y="427.8" width="1.0" height="6.0" fill="#b9e6d6"/>
<rect x="342.0" y="411.4" width="1.0" height="6.0" fill="#9ad7c1"/>
<rect x="343.0" y="438.6" width="1.0" height="6.0" fill="#9ad7c1"/>
<rect x="343.0" y="433.2" width="1.0" height="6.0" fill="#b9e6d6"/>
<rect x="343.0" y="422.3" width="1.0" height="6.0" fill="#9ad7c1"/>
<rect x="343.0" y="416.9" width="1.0" height="6.0" fill="#9ad7c1"/>
<rect x="343.0" y="411.4" width="1.0" height="6.0" fill="#b9e6d6"/>
<rect x="343.0" y="400.5" width="1.0" height="6.0" fill="#9ad7c1"/>
<rect x="344.0" y="433.2" width="1.0" height="6.0" fill="#9ad7c1"/>
<rect x="344.0" y="427.8" width="1.0" height="6.0" fill="#b9e6d6"/>
<rect x="344.0" y="422.3" width="1.0" height="6.0" fill="#9ad7c1"/>
<rect x="344.0" y="411.4" width="1.0" height="6.0" fill="#b9e6d6"/>
<rect x="344.0" y="400.5" width="1.0" height="6.0" fill="#9ad7c1"/>
<rect x="345.0" y="449.6" width="1.0" height="6.0" fill="#b9e6d6"/>
<rect x="345.0" y="438.6" width="1.0" height="6.0" fill="#9ad7c1"/>
<rect x="345.0" y="427.8" width="1.0" height="6.0" fill="#b9e6d6"/>
<rect x="345.0" y="422.3" width="1.0" height="6.0" fill="#9ad7c1"/>
<rect x="345.0" y="416.9" width="1.0" height="6.0" fill="#9ad7c1"/>
<rect x="345.0" y="411.4" width="1.0" height="6.0" fill="#9ad7c1"/>
<rect x="345.0" y="400.5" width="1.0" height="6.0" fill="#9ad7c1"/>
<rect x="346.0" y="438.6" width="1.0" height="6.0" fill="#b9e6d6"/>
<rect x="346.0" y="433.2" width="1.0" height="6.0" fill="#9ad7c1"/>
<rect x="346.0" y="427.8" width="1.0" height="6.0" fill="#b9e6d6"/>
<rect x="346.0" y="422.3" width="1.0" height="6.0" fill="#9ad7c1"/>
<rect x="346.0" y="416.9" width="1.0" height="6.0" fill="#9ad7c1"/>
<rect x="346.0" y="411.4" width="1.0" height="6.0" fill="#9ad7c1"/>
<rect x="347.0" y="433.2" width="1.0" height="6.0" fill="#b9e6d6"/>
<rect x="347.0" y="427.8" width="1.0" height="6.0" fill="#9ad7c1"/>
<rect x="347.0" y="422.3" width="1.0" height="6.0" fill="#b9e6d6"/>
<rect x="347.0" y="416.9" width="1.0" height="6.0" fill="#9ad7c1"/>
<rect x="347.0" y="411.4" width="1.0" height="6.0" fill="#b9e6d6"/>
<rect x="347.0" y="405.9" width="1.0" height="6.0" fill="#9ad7c1"/>
<rect x="347.0" y="400.5" width="1.0" height="6.0" fill="#9ad7c1"/>
<rect x="348.0" y="427.8" width="1.0" height="6.0" fill="#9ad7c1"/>
<rect x="348.0" y="422.3" width="1.0" height="6.0" fill="#9ad7c1"/>
<rect x="348.0" y="416.9" width="1.0" height="6.0" fill="#9ad7c1"/>
<rect x="348.0" y="411.4" width="1.0" height="6.0" fill="#9ad7c1"/>
<rect x="348.0" y="405.9" width="1.0" height="6.0" fill="#9ad7c1"/>
<rect x="348.0" y="395.1" width="1.0" height="6.0" fill="#9ad7c1"/>
<rect x="349.0" y="444.1" width="1.0" height="6.0" fill="#b9e6d6"/>
<rect x="349.0" y="427.8" width="1.0" height="6.0" fill="#b9e6d6"/>
<rect x="349.0" y="422.3" width="1.0" height="6.0" fill="#9ad7c1"/>
<rect x="349.0" y="416.9" width="1.0" height="6.0" fill="#9ad7c1"/>
<rect x="349.0" y="411.4" width="1.0" height="6.0" fill="#b9e6d6"/>
<rect x="349.0" y="395.1" width="1.0" height="6.0" fill="#9ad7c1"/>
<rect x="350.0" y="433.2" width="1.0" height="6.0" fill="#9ad7c1"/>
<rect x="350.0" y="427.8" width="1.0" height="6.0" fill="#9ad7c1"/>
<rect x="350.0" y="416.9" width="1.0" height="6.0" fill="#b9e6d6"/>
<rect x="350.0" y="411.4" width="1.0" height="6.0" fill="#9ad7c1"/>
<rect x="350.0" y="405.9" width="1.0" height="6.0" fill="#9ad7c1"/>
<rect x="350.0" y="400.5" width="1.0" height="6.0" fill="#9ad7c1"/>
<rect x="350.0" y="395.1" width="1.0" height="6.0" fill="#b9e6d6"/>
<rect x="351.0" y="433.2" width="1.0" height="6.0" fill="#9ad7c1"/>
<rect x="351.0" y="427.8" width="1.0" height="6.0" fill="#9ad7c1"/>
<rect x="351.0" y="422.3" width="1.0" height="6.0" fill="#9ad7c1"/>
<rect x="351.0" y="416.9" width="1.0" height="6.0" fill="#9ad7c1"/>
<rect x="351.0" y="411.4" width="1.0" height="6.0" fill="#9ad7c1"/>
<rect x="351.0" y="405.9" width="1.0" height="6.0" fill="#b9e6d6"/>
<rect x="351.0" y="400.5" width="1.0" height="6.0" fill="#9ad7c1"/>
<rect x="351.0" y="395.1" width="1.0" height="6.0" fill="#9ad7c1"/>
<rect x="352.0" y="433.2" width="1.0" height="6.0" fill="#9ad7c1"/>
<rect x="352.0" y="427.8" width="1.0" height="6.0" fill="#9ad7c1"/>
<rect x="352.0" y="422.3" width="1.0" height="6.0" fill="#9ad7c1"/>
<rect x="352.0" y="416.9" width="1.0" height="6.0" fill="#b9e6d6"/>
<rect x="352.0" y="411.4" width="1.0" height="6.0" fill="#9ad7c1"/>
<rect x="352.0" y="405.9" width="1.0" height="6.0" fill="#9ad7c1"/>
<rect x="352.0" y="400.5" width="1.0" height="6.0" fill="#b9e6d6"/>
<rect x="352.0" y="395.1" width="1.0" height="6.0" fill="#9ad7c1"/>
<rect x="353.0" y="433.2" width="1.0" height="6.0" fill="#9ad7c1"/>
<rect x="353.0" y="422.3" width="1.0" height="6.0" fill="#9ad7c1"/>
<rect x="353.0" y="416.9" width="1.0" height="6.0" fill="#9ad7c1"/>
<rect x="353.0" y="411.4" width="1.0" height="6.0" fill="#9ad7c1"/>
<rect x="353.0" y="405.9" width="1.0" height="6.0" fill="#9ad7c1"/>
<rect x="353.0" y="400.5" width="1.0" height="6.0" fill="#9ad7c1"/>
<rect x="353.0" y="395.1" width="1.0" height="6.0" fill="#9ad7c1"/>
<rect x="353.0" y="389.6" width="1.0" height="6.0" fill="#9ad7c1"/>
<rect x="354.0" y="427.8" width="1.0" height="6.0" fill="#9ad7c1"/>
<rect x="354.0" y="422.3" width="1.0" height="6.0" fill="#9ad7c1"/>
<rect x="354.0" y="416.9" width="1.0" height="6.0" fill="#9ad7c1"/>
<rect x="354.0" y="405.9" width="1.0" height="6.0" fill="#9ad7c1"/>
<rect x="354.0" y="400.5" width="1.0" height="6.0" fill="#9ad7c1"/>
<rect x="354.0" y="389.6" width="1.0" height="6.0" fill="#b9e6d6"/>
<rect x="354.0" y="384.1" width="1.0" height="6.0" fill="#b9e6d6"/>
<rect x="355.0" y="444.1" width="1.0" height="6.0" fill="#b9e6d6"/>
<rect x="355.0" y="422.3" width="1.0" height="6.0" fill="#9ad7c1"/>
<rect x="355.0" y="416.9" width="1.0" height="6.0" fill="#b9e6d6"/>
<rect x="355.0" y="411.4" width="1.0" height="6.0" fill="#9ad7c1"/>
<rect x="355.0" y="405.9" width="1.0" height="6.0" fill="#9ad7c1"/>
<rect x="355.0" y="400.5" width="1.0" height="6.0" fill="#b9e6d6"/>
<rect x="355.0" y="389.6" width="1.0" height="6.0" fill="#9ad7c1"/>
<rect x="356.0" y="438.6" width="1.0" height="6.0" fill="#b9e6d6"/>
<rect x="356.0" y="433.2" width="1.0" height="6.0" fill="#9ad7c1"/>
<rect x="356.0" y="422.3" width="1.0" height="6.0" fill="#9ad7c1"/>
<rect x="356.0" y="416.9" width="1.0" height="6.0" fill="#9ad7c1"/>
<rect x="356.0" y="411.4" width="1.0" height="6.0" fill="#9ad7c1"/>
<rect x="356.0" y="405.9" width="1.0" height="6.0" fill="#9ad7c1"/>
<rect x="356.0" y="400.5" width="1.0" height="6.0" fill="#9ad7c1"/>
<rect x="356.0" y="395.1" width="1.0" height="6.0" fill="#9ad7c1"/>
<rect x="356.0" y="389.6" width="1.0" height="6.0" fill="#9ad7c1"/>
<rect x="356.0" y="384.1" width="1.0" height="6.0" fill="#9ad7c1"/>
<rect x="357.0" y="444.1" width="1.0" height="6.0" fill="#b9e6d6"/>
<rect x="357.0" y="427.8" width="1.0" height="6.0" fill="#9ad7c1"/>
<rect x="357.0" y="422.3" width="1.0" height="6.0" fill="#9ad7c1"/>
<rect x="357.0" y="411.4" width="1.0" height="6.0" fill="#b9e6d6"/>
<rect x="357.0" y="405.9" width="1.0" height="6.0" fill="#9ad7c1"/>
<rect x="357.0" y="400.5" width="1.0" height="6.0" fill="#9ad7c1"/>
<rect x="357.0" y="395.1" width="1.0" height="6.0" fill="#b9e6d6"/>
<rect x="357.0" y="384.1" width="1.0" height="6.0" fill="#b9e6d6"/>
<rect x="357.0" y="378.7" width="1.0" height="6.0" fill="#9ad7c1"/>
<rect x="358.0" y="449.6" width="1.0" height="6.0" fill="#b9e6d6"/>
<rect x="358.0" y="433.2" width="1.0" height="6.0" fill="#9ad7c1"/>
<rect x="358.0" y="422.3" width="1.0" height="6.0" fill="#9ad7c1"/>
<rect x="358.0" y="416.9" width="1.0" height="6.0" fill="#9ad7c1"/>
<rect x="358.0" y="411.4" width="1.0" height="6.0" fill="#9ad7c1"/>
<rect x="358.0" y="400.5" width="1.0" height="6.0" fill="#b9e6d6"/>
<rect x="358.0" y="395.1" width="1.0" height="6.0" fill="#9ad7c1"/>
<rect x="358.0" y="389.6" width="1.0" height="6.0" fill="#9ad7c1"/>
<rect x="358.0" y="384.1" width="1.0" height="6.0" fill="#9ad7c1"/>
<rect x="358.0" y="378.7" width="1.0" height="6.0" fill="#9ad7c1"/>
<rect x="359.0" y="427.8" width="1.0" height="6.0" fill="#b9e6d6"/>
<rect x="359.0" y="422.3" width="1.0" height="6.0" fill="#9ad7c1"/>
<rect x="359.0" y="416.9" width="1.0" height="6.0" fill="#9ad7c1"/>
<rect x="359.0" y="411.4" width="1.0" height="6.0" fill="#9ad7c1"/>
<rect x="359.0" y="405.9" width="1.0" height="6.0" fill="#9ad7c1"/>
<rect x="359.0" y="400.5" width="1.0" height="6.0" fill="#9ad7c1"/>
<rect x="359.0" y="395.1" width="1.0" height="6.0" fill="#9ad7c1"/>
<rect x="360.0" y="444.1" width="1.0" height="6.0" fill="#9ad7c1"/>
<rect x="360.0" y="438.6" width="1.0" height="6.0" fill="#9ad7c1"/>
<rect x="360.0" y="416.9" width="1.0" height="6.0" fill="#9ad7c1"/>
<rect x="360.0" y="411.4" width="1.0" height="6.0" fill="#9ad7c1"/>
<rect x="360.0" y="405.9" width="1.0" height="6.0" fill="#9ad7c1"/>
<rect x="360.0" y="400.5" width="1.0" height="6.0" fill="#b9e6d6"/>
<rect x="360.0" y="395.1" width="1.0" height="6.0" fill="#9ad7c1"/>
<rect x="360.0" y="389.6" width="1.0" height="6.0" fill="#9ad7c1"/>
<rect x="360.0" y="384.1" width="1.0" height="6.0" fill="#b9e6d6"/>
<rect x="360.0" y="378.7" width="1.0" height="6.0" fill="#9ad7c1"/>
<rect x="360.0" y="373.2" width="1.0" height="6.0" fill="#b9e6d6"/>
<rect x="361.0" y="416.9" width="1.0" height="6.0" fill="#9ad7c1"/>
<rect x="361.0" y="411.4" width="1.0" height="6.0" fill="#9ad7c1"/>
<rect x="361.0" y="405.9" width="1.0" height="6.0" fill="#9ad7c1"/>
<rect x="361.0" y="395.1" width="1.0" height="6.0" fill="#b9e6d6"/>
<rect x="361.0" y="389.6" width="1.0" height="6.0" fill="#9ad7c1"/>
<rect x="361.0" y="384.1" width="1.0" height="6.0" fill="#b9e6d6"/>
<rect x="362.0" y="422.3" width="1.0" height="6.0" fill="#9ad7c1"/>
<rect x="362.0" y="416.9" width="1.0" height="6.0" fill="#b9e6d6"/>
<rect x="362.0" y="405.9" width="1.0" height="6.0" fill="#9ad7c1"/>
<rect x="362.0" y="400.5" width="1.0" height="6.0" fill="#9ad7c1"/>
<rect x="362.0" y="395.1" width="1.0" height="6.0" fill="#b9e6d6"/>
<rect x="362.0" y="389.6" width="1.0" height="6.0" fill="#b9e6d6"/>
<rect x="362.0" y="384.1" width="1.0" height="6.0" fill="#b9e6d6"/>
<rect x="362.0" y="378.7" width="1.0" height="6.0" fill="#b9e6d6"/>
<rect x="362.0" y="373.2" width="1.0" height="6.0" fill="#9ad7c1"/>
<rect x="363.0" y="427.8" width="1.0" height="6.0" fill="#9ad7c1"/>
<rect x="363.0" y="416.9" width="1.0" height="6.0" fill="#b9e6d6"/>
<rect x="363.0" y="411.4" width="1.0" height="6.0" fill="#9ad7c1"/>
<rect x="363.0" y="405.9" width="1.0" height="6.0" fill="#b9e6d6"/>
<rect x="363.0" y="400.5" width="1.0" height="6.0" fill="#9ad7c1"/>
<rect x="363.0" y="395.1" width="1.0" height="6.0" fill="#9ad7c1"/>
<rect x="363.0" y="389.6" width="1.0" height="6.0" fill="#9ad7c1"/>
<rect x="363.0" y="384.1" width="1.0" height="6.0" fill="#9ad7c1"/>
<rect x="363.0" y="378.7" width="1.0" height="6.0" fill="#9ad7c1"/>
<rect x="363.0" y="373.2" width="1.0" height="6.0" fill="#9ad7c1"/>
<rect x="363.0" y="367.8" width="1.0" height="6.0" fill="#9ad7c1"/>
<rect x="364.0" y="416.9" width="1.0" height="6.0" fill="#9ad7c1"/>
<rect x="364.0" y="405.9" width="1.0" height="6.0" fill="#9ad7c1"/>
<rect x="364.0" y="400.5" width="1.0" height="6.0" fill="#9ad7c1"/>
<rect x="364.0" y="395.1" width="1.0" height="6.0" fill="#b9e6d6"/>
<rect x="364.0" y="389.6" width="1.0" height="6.0" fill="#9ad7c1"/>
<rect x="364.0" y="384.1" width="1.0" height="6.0" fill="#9ad7c1"/>
<rect x="364.0" y="378.7" width="1.0" height="6.0" fill="#b9e6d6"/>
<rect x="364.0" y="373.2" width="1.0" height="6.0" fill="#9ad7c1"/>
<rect x="365.0" y="416.9" width="1.0" height="6.0" fill="#b9e6d6"/>
<rect x="365.0" y="405.9" width="1.0" height="6.0" fill="#9ad7c1"/>
<rect x="365.0" y="400.5" width="1.0" height="6.0" fill="#9ad7c1"/>
<rect x="365.0" y="395.1" width="1.0" height="6.0" fill="#9ad7c1"/>
<rect x="365.0" y="389.6" width="1.0" height="6.0" fill="#9ad7c1"/>
<rect x="365.0" y="384.1" width="1.0" height="6.0" fill="#9ad7c1"/>
<rect x="365.0" y="378.7" width="1.0" height="6.0" fill="#9ad7c1"/>
<rect x="365.0" y="373.2" width="1.0" height="6.0" fill="#9ad7c1"/>
<rect x="365.0" y="367.8" width="1.0" height="6.0" fill="#9ad7c1"/>
<rect x="365.0" y="362.4" width="1.0" height="6.0" fill="#9ad7c1"/>
<rect x="366.0" y="427.8" width="1.0" height="6.0" fill="#9ad7c1"/>
<rect x="366.0" y="405.9" width="1.0" height="6.0" fill="#9ad7c1"/>
<rect x="366.0" y="400.5" width="1.0" height="6.0" fill="#9ad7c1"/>
<rect x="366.0" y="395.1" width="1.0" height="6.0" fill="#9ad7c1"/>
<rect x="366.0" y="378.7" width="1.0" height="6.0" fill="#9ad7c1"/>
<rect x="366.0" y="373.2" width="1.0" height="6.0" fill="#9ad7c1"/>
<rect x="367.0" y="438.6" width="1.0" height="6.0" fill="#b9e6d6"/>
<rect x="367.0" y="405.9" width="1.0" height="6.0" fill="#9ad7c1"/>
<rect x="367.0" y="395.1" width="1.0" height="6.0" fill="#9ad7c1"/>
<rect x="367.0" y="389.6" width="1.0" height="6.0" fill="#9ad7c1"/>
<rect x="367.0" y="384.1" width="1.0" height="6.0" fill="#9ad7c1"/>
<rect x="367.0" y="378.7" width="1.0" height="6.0" fill="#9ad7c1"/>
<rect x="367.0" y="373.2" width="1.0" height="6.0" fill="#b9e6d6"/>
<rect x="367.0" y="367.8" width="1.0" height="6.0" fill="#9ad7c1"/>
<rect x="367.0" y="362.4" width="1.0" height="6.0" fill="#9ad7c1"/>
<rect x="367.0" y="356.9" width="1.0" height="6.0" fill="#b9e6d6"/>
<rect x="367.0" y="351.4" width="1.0" height="6.0" fill="#9ad7c1"/>
<rect x="368.0" y="444.1" width="1.0" height="6.0" fill="#9ad7c1"/>
<rect x="368.0" y="405.9" width="1.0" height="6.0" fill="#b9e6d6"/>
<rect x="368.0" y="400.5" width="1.0" height="6.0" fill="#b9e6d6"/>
<rect x="368.0" y="395.1" width="1.0" height="6.0" fill="#b9e6d6"/>
<rect x="368.0" y="389.6" width="1.0" height="6.0" fill="#9ad7c1"/>
<rect x="368.0" y="384.1" width="1.0" height="6.0" fill="#9ad7c1"/>
<rect x="368.0" y="378.7" width="1.0" height="6.0" fill="#b9e6d6"/>
<rect x="368.0" y="367.8" width="1.0" height="6.0" fill="#b9e6d6"/>
<rect x="368.0" y="362.4" width="1.0" height="6.0" fill="#9ad7c1"/>
<rect x="368.0" y="351.4" width="1.0" height="6.0" fill="#9ad7c1"/>
<rect x="369.0" y="433.2" width="1.0" height="6.0" fill="#b9e6d6"/>
<rect x="369.0" y="427.8" width="1.0" height="6.0" fill="#b9e6d6"/>
<rect x="369.0" y="400.5" width="1.0" height="6.0" fill="#9ad7c1"/>
<rect x="369.0" y="389.6" width="1.0" height="6.0" fill="#9ad7c1"/>
<rect x="369.0" y="378.7" width="1.0" height="6.0" fill="#9ad7c1"/>
<rect x="369.0" y="367.8" width="1.0" height="6.0" fill="#b9e6d6"/>
<rect x="369.0" y="351.4" width="1.0" height="6.0" fill="#9ad7c1"/>
<rect x="369.0" y="346.0" width="1.0" height="6.0" fill="#9ad7c1"/>
<rect x="370.0" y="400.5" width="1.0" height="6.0" fill="#9ad7c1"/>
<rect x="370.0" y="395.1" width="1.0" height="6.0" fill="#9ad7c1"/>
<rect x="370.0" y="389.6" width="1.0" height="6.0" fill="#9ad7c1"/>
<rect x="370.0" y="384.1" width="1.0" height="6.0" fill="#9ad7c1"/>
<rect x="370.0" y="378.7" width="1.0" height="6.0" fill="#9ad7c1"/>
<rect x="370.0" y="373.2" width="1.0" height="6.0" fill="#9ad7c1"/>
<rect x="370.0" y="367.8" width="1.0" height="6.0" fill="#9ad7c1"/>
<rect x="370.0" y="362.4" width="1.0" height="6.0" fill="#b9e6d6"/>
<rect x="370.0" y="356.9" width="1.0" height="6.0" fill="#9ad7c1"/>
<rect x="370.0" y="351.4" width="1.0" height="6.0" fill="#9ad7c1"/>
<rect x="370.0" y="346.0" width="1.0" height="6.0" fill="#9ad7c1"/>
<rect x="370.0" y="340.5" width="1.0" height="6.0" fill="#9ad7c1"/>
<rect x="371.0" y="444.1" width="1.0" height="6.0" fill="#b9e6d6"/>
<rect x="371.0" y="427.8" width="1.0" height="6.0" fill="#b9e6d6"/>
<rect x="371.0" y="400.5" width="1.0" height="6.0" fill="#9ad7c1"/>
<rect x="371.0" y="395.1" width="1.0" height="6.0" fill="#9ad7c1"/>
<rect x="371.0" y="389.6" width="1.0" height="6.0" fill="#9ad7c1"/>
<rect x="371.0" y="378.7" width="1.0" height="6.0" fill="#b9e6d6"/>
<rect x="371.0" y="373.2" width="1.0" height="6.0" fill="#9ad7c1"/>
<rect x="371.0" y="367.8" width="1.0" height="6.0" fill="#9ad7c1"/>
<rect x="371.0" y="362.4" width="1.0" height="6.0" fill="#b9e6d6"/>
<rect x="371.0" y="356.9" width="1.0" height="6.0" fill="#9ad7c1"/>
<rect x="371.0" y="346.0" width="1.0" height="6.0" fill="#b9e6d6"/>
<rect x="371.0" y="340.5" width="1.0" height="6.0" fill="#9ad7c1"/>
<rect x="372.0" y="444.1" width="1.0" height="6.0" fill="#b9e6d6"/>
<rect x="372.0" y="395.1" width="1.0" height="6.0" fill="#9ad7c1"/>
<rect x="372.0" y="384.1" width="1.0" height="6.0" fill="#9ad7c1"/>
<rect x="372.0" y="378.7" width="1.0" height="6.0" fill="#b9e6d6"/>
<rect x="372.0" y="373.2" width="1.0" height="6.0" fill="#9ad7c1"/>
<rect x="372.0" y="367.8" width="1.0" height="6.0" fill="#b9e6d6"/>
<rect x="372.0" y="362.4" width="1.0" height="6.0" fill="#9ad7c1"/>
<rect x="372.0" y="351.4" width="1.0" height="6.0" fill="#b9e6d6"/>
<rect x="373.0" y="433.2" width="1.0" height="6.0" fill="#9ad7c1"/>
<rect x="373.0" y="384.1" width="1.0" height="6.0" fill="#9ad7c1"/>
<rect x="373.0" y="378.7" width="1.0" height="6.0" fill="#9ad7c1"/>
<rect x="373.0" y="373.2" width="1.0" height="6.0" fill="#9ad7c1"/>
<rect x="373.0" y="367.8" width="1.0" height="6.0" fill="#9ad7c1"/>
<rect x="373.0" y="362.4" width="1.0" height="6.0" fill="#9ad7c1"/>
<rect x="373.0" y="356.9" width="1.0" height="6.0" fill="#9ad7c1"/>
<rect x="373.0" y="351.4" width="1.0" height="6.0" fill="#b9e6d6"/>
<rect x="373.0" y="346.0" width="1.0" height="6.0" fill="#9ad7c1"/>
<rect x="373.0" y="340.5" width="1.0" height="6.0" fill="#b9e6d6"/>
<rect x="373.0" y="335.1" width="1.0" height="6.0" fill="#9ad7c1"/>
<rect x="373.0" y="329.6" width="1.0" height="6.0" fill="#9ad7c1"/>
<rect x="374.0" y="427.8" width="1.0" height="6.0" fill="#9ad7c1"/>
<rect x="374.0" y="373.2" width="1.0" height="6.0" fill="#b9e6d6"/>
<rect x="374.0" y="367.8" width="1.0" height="6.0" fill="#9ad7c1"/>
<rect x="374.0" y="362.4" width="1.0" height="6.0" fill="#9ad7c1"/>
<rect x="374.0" y="356.9" width="1.0" height="6.0" fill="#9ad7c1"/>
<rect x="374.0" y="351.4" width="1.0" height="6.0" fill="#9ad7c1"/>
<rect x="374.0" y="335.1" width="1.0" height="6.0" fill="#b9e6d6"/>
<rect x="374.0" y="329.6" width="1.0" height="6.0" fill="#9ad7c1"/>
<rect x="375.0" y="438.6" width="1.0" height="6.0" fill="#9ad7c1"/>
<rect x="375.0" y="427.8" width="1.0" height="6.0" fill="#9ad7c1"/>
<rect x="375.0" y="378.7" width="1.0" height="6.0" fill="#b9e6d6"/>
<rect x="375.0" y="373.2" width="1.0" height="6.0" fill="#9ad7c1"/>
<rect x="375.0" y="367.8" width="1.0" height="6.0" fill="#9ad7c1"/>
<rect x="375.0" y="362.4" width="1.0" height="6.0" fill="#9ad7c1"/>
<rect x="375.0" y="356.9" width="1.0" height="6.0" fill="#9ad7c1"/>
<rect x="375.0" y="351.4" width="1.0" height="6.0" fill="#9ad7c1"/>
<rect x="375.0" y="346.0" width="1.0" height="6.0" fill="#9ad7c1"/>
<rect x="375.0" y="340.5" width="1.0" height="6.0" fill="#9ad7c1"/>
<rect x="375.0" y="335.1" width="1.0" height="6.0" fill="#9ad7c1"/>
<rect x="375.0" y="329.6" width="1.0" height="6.0" fill="#9ad7c1"/>
<rect x="375.0" y="324.2" width="1.0" height="6.0" fill="#b9e6d6"/>
<rect x="376.0" y="422.3" width="1.0" height="6.0" fill="#9ad7c1"/>
<rect x="376.0" y="373.2" width="1.0" height="6.0" fill="#9ad7c1"/>
<rect x="376.0" y="362.4" width="1.0" height="6.0" fill="#9ad7c1"/>
<rect x="376.0" y="356.9" width="1.0" height="6.0" fill="#9ad7c1"/>
<rect x="376.0" y="351.4" width="1.0" height="6.0" fill="#9ad7c1"/>
<rect x="376.0" y="346.0" width="1.0" height="6.0" fill="#9ad7c1"/>
<rect x="376.0" y="340.5" width="1.0" height="6.0" fill="#b9e6d6"/>
<rect x="376.0" y="329.6" width="1.0" height="6.0" fill="#9ad7c1"/>
<rect x="376.0" y="324.2" width="1.0" height="6.0" fill="#b9e6d6"/>
<rect x="376.0" y="318.8" width="1.0" height="6.0" fill="#9ad7c1"/>
<rect x="376.0" y="313.3" width="1.0" height="6.0" fill="#9ad7c1"/>
  <!-- frame -->
  <line x1="51" y1="313.6" x2="724" y2="313.6" stroke="#a3aed2" stroke-width=".9" stroke-dasharray="2.4 1.8"/>
  <line x1="724" y1="313.6" x2="724" y2="509.5" stroke="#a3aed2" stroke-width=".9" stroke-dasharray="2.4 1.8"/>
  <line x1="51.5" y1="313.6" x2="51.5" y2="510" stroke="#46528a" stroke-width="1"/>
  <line x1="47" y1="509.7" x2="724" y2="509.7" stroke="#4d5a8c" stroke-width=".6"/>
  <!-- marker lines -->
  <line x1="269.6" y1="290" x2="269.6" y2="521" stroke="#777" stroke-width="1.1" stroke-dasharray="1.3 2.3"/>
  <line x1="514.7" y1="290" x2="514.7" y2="512" stroke="#777" stroke-width="1.1" stroke-dasharray="1.3 2.3"/>
  <line x1="518.4" y1="293" x2="518.4" y2="513.5" stroke="#555b66" stroke-width="1"/>
  <!-- y ticks -->
  <g stroke="#4d5a8c" stroke-width=".8">
    <line x1="47" y1="318.75" x2="51" y2="318.75"/><line x1="47" y1="346" x2="51" y2="346"/><line x1="47" y1="373.25" x2="51" y2="373.25"/>
    <line x1="47" y1="400.5" x2="51" y2="400.5"/><line x1="47" y1="427.75" x2="51" y2="427.75"/><line x1="47" y1="455" x2="51" y2="455"/><line x1="47" y1="482.25" x2="51" y2="482.25"/>
  </g>
  <g font-size="7.4" fill="#5f6472" text-anchor="end">
    <text x="45" y="321.4">3.5k</text><text x="45" y="348.65">3.0k</text><text x="45" y="375.9">2.5k</text><text x="45" y="403.15">2.0k</text>
    <text x="45" y="430.4">1.5k</text><text x="45" y="457.65">1.0k</text><text x="45" y="484.9">0.5k</text><text x="45" y="512.15">0</text>
  </g>
  <g stroke="#777" stroke-width=".7">
    <line x1="111.75" y1="510" x2="111.75" y2="513"/><line x1="195.75" y1="510" x2="195.75" y2="513"/><line x1="279.75" y1="510" x2="279.75" y2="513"/>
    <line x1="363.75" y1="510" x2="363.75" y2="513"/><line x1="447.75" y1="510" x2="447.75" y2="513"/><line x1="531.75" y1="510" x2="531.75" y2="513"/><line x1="615.75" y1="510" x2="615.75" y2="513"/><line x1="699.75" y1="510" x2="699.75" y2="513"/>
  </g>
  <g font-size="7.4" fill="#5f6472" text-anchor="middle">
    <text x="111.75" y="521">12:00</text><text x="195.75" y="521">15:00</text><text x="279.75" y="521">18:00</text><text x="363.75" y="521">21:00</text>
    <text x="447.75" y="521">Mon Aug 15</text><text x="699.75" y="521">09:00</text>
  </g>
  <!-- hover label -->
  <rect x="497.3" y="513.6" width="46" height="10.2" rx="1.5" fill="#3a3f4c"/>
  <text x="499" y="521.6" font-size="7.8" fill="#fff">08/15 02:32</text>
  <!-- selection -->
  <rect x="523" y="337.5" width="173" height="124.2" fill="#fbd494" fill-opacity=".26" stroke="#f5b544" stroke-width="1.1"/>
  <!-- legend -->
  <g><rect x="737.6" y="313.50" width="5.6" height="5.5" fill="#1c1454"/><rect x="737.6" y="320.25" width="5.6" height="5.5" fill="#3c3596"/><rect x="737.6" y="327.00" width="5.6" height="5.5" fill="#2a56ae"/><rect x="737.6" y="333.75" width="5.6" height="5.5" fill="#1a78b8"/><rect x="737.6" y="340.50" width="5.6" height="5.5" fill="#2a98c4"/><rect x="737.6" y="347.25" width="5.6" height="5.5" fill="#4ab3c2"/><rect x="737.6" y="354.00" width="5.6" height="5.5" fill="#8ed4bd"/></g>
  <g font-size="5.2" fill="#333" text-anchor="end"><text x="736.2" y="316.4">3000</text><text x="736.2" y="338.7">1500</text><text x="736.2" y="360.9">1</text></g>
</svg>

<!-- right panel -->
<div class="abs" style="left:769px;top:103px;width:9px;height:562px;background:#fafafa;border-left:1px solid #ececec"></div>
<div class="abs" style="left:771.3px;top:145.4px;width:5.6px;height:225.7px;background:#c1c1c1;border-radius:2.8px"></div>
<div class="abs" style="left:778px;top:103px;width:246px;height:562px;background:#f4f6fa"></div>
<div class="abs" style="left:1003.5px;top:152px;width:9px;height:487px;background:#fafbfc"></div>
<div class="abs" style="left:1006px;top:154.4px;width:5px;height:214px;background:#bdbdbd;border-radius:2.5px"></div>
<div class="abs" style="left:790px;top:146.2px;width:223px;height:1px;background:#e1e5ec"></div>
<div class="abs" style="left:900.6px;top:145.2px;width:81.3px;height:2px;background:#3f8ad8"></div>
<div class="abs" style="left:992px;top:639px;width:20.3px;height:1px;background:#9a9a9a"></div>
<div class="t rtab" style="transform:scaleX(0.9012);transform-origin:left center;left:792.5px;top:125.7px">Details</div>
<div class="t rtab" style="transform:scaleX(0.9340);transform-origin:left center;left:842.4px;top:125.7px">My history</div>
<div class="t rtab" style="transform:scaleX(0.8717);transform-origin:left center;left:909px;top:125.7px;font-size:11.8px;font-weight:bold;color:#2a3040">Team activity</div>
<div class="t day" style="transform:scaleX(0.8088);transform-origin:left center;left:793.3px;top:158.5px">TODAY</div>
<div class="t day" style="transform:scaleX(0.8417);transform-origin:left center;left:793.3px;top:271.5px">TUESDAY 8/9</div>
<div class="abs" style="left:789.6px;top:181.7px;width:213.2px;height:76.8px;border:1px solid #5a9bdc;border-radius:3px;background:#f6f8fc"></div>
<div class="t tm" style="transform:scaleX(0.9068);transform-origin:left center;left:795.6px;top:188.0px">9:51 am</div>
<div class="t tm" style="transform:scaleX(0.9068);transform-origin:left center;left:795.6px;top:300.9px">2:50 pm</div>
<div class="t tm" style="transform:scaleX(0.8979);transform-origin:left center;left:796.1px;top:410.6px">10:55 am</div>
<div class="t tm" style="transform:scaleX(0.8979);transform-origin:left center;left:796.1px;top:510.9px">10:54 am</div>
<div class="t mt" style="left:796.2px;top:241.9px;color:#555;letter-spacing:-.3px">{--}</div>
<div class="t mt" style="transform:scaleX(0.9479);transform-origin:left center;left:809.3px;top:241.9px">Not grouped</div>
<svg class="abs" style="left:897.5px;top:241.1px" width="12" height="11" viewBox="0 0 12 11" fill="none" stroke="#2e3442" stroke-width=".9" stroke-linejoin="round"><path d="M0.8 0.8 H10.8 L7.1 5.3 V8.6 L4.6 10.2 V5.3 Z"/></svg>
<div class="t mt" style="transform:scaleX(0.9803);transform-origin:left center;left:911.3px;top:241.9px;color:#3c4250">No filters</div>
<div class="t mt" style="left:796.2px;top:354.9px;color:#555;letter-spacing:-.3px">{--}</div>
<div class="t mt" style="transform:scaleX(0.9479);transform-origin:left center;left:809.3px;top:354.9px">Not grouped</div>
<svg class="abs" style="left:897.5px;top:354.1px" width="12" height="11" viewBox="0 0 12 11" fill="none" stroke="#2e3442" stroke-width=".9" stroke-linejoin="round"><path d="M0.8 0.8 H10.8 L7.1 5.3 V8.6 L4.6 10.2 V5.3 Z"/></svg>
<div class="t mt" style="transform:scaleX(0.9434);transform-origin:left center;left:911.3px;top:354.9px;color:#3c4250">name = getDiscounts</div>
<div class="t mt" style="transform:scaleX(0.9473);transform-origin:left center;left:911.3px;top:365.8px;color:#3c4250">service.name = checkout</div>
<div class="t mt" style="left:796.2px;top:464.7px;color:#555;letter-spacing:-.3px">{--}</div>
<div class="t mt" style="transform:scaleX(0.9479);transform-origin:left center;left:809.3px;top:464.7px">Not grouped</div>
<svg class="abs" style="left:897.5px;top:463.9px" width="12" height="11" viewBox="0 0 12 11" fill="none" stroke="#2e3442" stroke-width=".9" stroke-linejoin="round"><path d="M0.8 0.8 H10.8 L7.1 5.3 V8.6 L4.6 10.2 V5.3 Z"/></svg>
<div class="t mt" style="transform:scaleX(0.9803);transform-origin:left center;left:911.3px;top:464.7px;color:#3c4250">No filters</div>
<div class="t mt" style="left:796.2px;top:564.8px;color:#555;letter-spacing:-.3px">{--}</div>
<div class="t mt" style="transform:scaleX(0.9479);transform-origin:left center;left:809.3px;top:564.8px">Not grouped</div>
<svg class="abs" style="left:897.5px;top:564.0px" width="12" height="11" viewBox="0 0 12 11" fill="none" stroke="#2e3442" stroke-width=".9" stroke-linejoin="round"><path d="M0.8 0.8 H10.8 L7.1 5.3 V8.6 L4.6 10.2 V5.3 Z"/></svg>
<div class="t mt" style="transform:scaleX(0.9803);transform-origin:left center;left:911.3px;top:564.8px;color:#3c4250">No filters</div>
<svg class="abs" style="left:795.3px;top:380.5px" width="12" height="12" viewBox="0 0 12 12"><circle cx="5.8" cy="5.9" r="5.7" fill="#fcfdfe"/><path d="M3.7 1.3 L5.2 3 M7.9 1.3 L6.4 3" stroke="#222" stroke-width=".8" fill="none"/><ellipse cx="5.8" cy="3.4" rx="1.7" ry="1.4" fill="#222831"/><ellipse cx="3.1" cy="5.5" rx="2.8" ry=".95" fill="#b4c2d3"/><ellipse cx="8.5" cy="5.5" rx="2.8" ry=".95" fill="#b4c2d3"/><ellipse cx="5.8" cy="7.9" rx="3" ry="3" fill="#e3b22e"/><rect x="3.3" y="6" width="5" height=".9" fill="#2c2c2c"/><rect x="3.1" y="8.7" width="5.4" height="1" fill="#3a3a22"/></svg>
<div class="t mt" style="transform:scaleX(0.9672);transform-origin:left center;left:809.3px;top:382.6px;color:#3c4250">Martin Holman</div>
<svg class="abs" style="left:795.3px;top:480.9px" width="12" height="12" viewBox="0 0 12 12"><circle cx="5.8" cy="5.9" r="5.7" fill="#fcfdfe"/><path d="M3.7 1.3 L5.2 3 M7.9 1.3 L6.4 3" stroke="#222" stroke-width=".8" fill="none"/><ellipse cx="5.8" cy="3.4" rx="1.7" ry="1.4" fill="#222831"/><ellipse cx="3.1" cy="5.5" rx="2.8" ry=".95" fill="#b4c2d3"/><ellipse cx="8.5" cy="5.5" rx="2.8" ry=".95" fill="#b4c2d3"/><ellipse cx="5.8" cy="7.9" rx="3" ry="3" fill="#e3b22e"/><rect x="3.3" y="6" width="5" height=".9" fill="#2c2c2c"/><rect x="3.1" y="8.7" width="5.4" height="1" fill="#3a3a22"/></svg>
<div class="t mt" style="transform:scaleX(0.9672);transform-origin:left center;left:809.3px;top:483.0px;color:#3c4250">Martin Holman</div>
<svg class="abs" style="left:795.3px;top:580.7px" width="12" height="12" viewBox="0 0 12 12"><circle cx="5.8" cy="5.9" r="5.7" fill="#fcfdfe"/><path d="M3.7 1.3 L5.2 3 M7.9 1.3 L6.4 3" stroke="#222" stroke-width=".8" fill="none"/><ellipse cx="5.8" cy="3.4" rx="1.7" ry="1.4" fill="#222831"/><ellipse cx="3.1" cy="5.5" rx="2.8" ry=".95" fill="#b4c2d3"/><ellipse cx="8.5" cy="5.5" rx="2.8" ry=".95" fill="#b4c2d3"/><ellipse cx="5.8" cy="7.9" rx="3" ry="3" fill="#e3b22e"/><rect x="3.3" y="6" width="5" height=".9" fill="#2c2c2c"/><rect x="3.1" y="8.7" width="5.4" height="1" fill="#3a3a22"/></svg>
<svg class="abs" style="left:780px;top:195px" width="232" height="375" viewBox="780 195 232 375" font-family="Liberation Sans, sans-serif">
<rect x="795.6" y="206.3" width="201.6" height="27.1" fill="#e7eaf3"/>
<path d="M796 231.5 L796.0 224.1 L797.3 224.3 L798.6 224.9 L799.9 224.1 L801.2 224.2 L802.5 224.3 L803.8 223.6 L805.1 224.2 L806.4 224.4 L807.7 224.6 L809.0 223.5 L810.3 223.8 L811.6 223.5 L812.9 224.7 L814.2 224.5 L815.5 223.4 L816.8 225.0 L818.1 224.9 L819.4 224.4 L820.7 224.3 L822.0 223.6 L823.3 223.3 L824.6 224.2 L825.9 223.4 L827.2 223.6 L828.5 223.7 L829.8 223.4 L831.1 224.1 L832.4 224.0 L833.7 224.7 L835.0 224.2 L836.3 224.4 L837.6 224.1 L838.9 224.4 L840.2 224.1 L841.5 223.8 L842.8 225.0 L844.1 225.0 L845.4 224.7 L846.7 224.5 L848.0 223.8 L849.3 223.7 L850.6 223.8 L851.9 223.4 L853.2 224.6 L854.5 224.0 L855.8 224.7 L857.1 224.0 L858.4 224.9 L859.7 224.7 L861.0 223.3 L862.3 223.7 L863.6 224.8 L864.9 224.1 L866.2 225.0 L867.5 224.0 L868.8 223.4 L870.1 224.4 L871.4 224.6 L872.7 223.8 L874.0 223.4 L875.3 223.9 L876.6 224.9 L877.9 224.6 L879.2 223.5 L880.5 223.7 L881.8 223.5 L883.1 223.4 L884.4 224.7 L885.7 223.6 L887.0 224.3 L888.3 224.1 L889.6 223.6 L890.9 224.5 L892.2 223.5 L893.5 224.4 L894.8 223.5 L896.1 224.0 L897.4 223.7 L898.7 223.8 L900.0 225.0 L901.3 224.7 L902.6 223.8 L903.9 224.8 L905.2 223.7 L906.5 224.0 L907.8 224.8 L909.1 224.4 L910.4 223.5 L911.7 225.0 L913.0 223.7 L914.3 223.7 L915.6 224.6 L916.9 223.9 L918.2 223.8 L919.5 223.4 L920.8 223.5 L922.1 224.3 L923.4 223.7 L924.7 224.3 L926.0 223.9 L927.3 224.1 L928.6 224.9 L929.9 224.1 L931.2 224.3 L932.5 224.8 L933.8 223.6 L935.1 223.6 L936.4 224.8 L937.7 224.7 L939.0 223.7 L940.3 223.6 L941.6 224.6 L942.9 224.9 L944.2 223.6 L945.5 224.9 L946.8 224.8 L948.1 224.3 L949.4 224.0 L950.7 223.5 L952.0 223.4 L953.3 224.9 L954.6 223.7 L955.9 224.5 L957.2 223.7 L958.5 224.7 L959.8 224.3 L961.1 223.8 L962.4 223.6 L963.7 224.5 L965.0 223.4 L966.3 223.7 L967.6 224.3 L968.9 224.7 L970.2 224.3 L971.5 223.8 L972.8 224.9 L974.1 223.6 L975.4 223.3 L976.7 223.8 L978.0 224.1 L979.3 223.4 L980.6 223.6 L981.9 223.9 L983.2 224.3 L984.5 223.5 L985.8 223.9 L987.1 224.8 L988.4 225.0 L989.7 224.4 L991.0 224.5 L992.3 224.3 L993.6 223.5 L994.9 223.4 L996.2 223.3 L997.2 231.5 Z" fill="#9ad8c2"/>
<rect x="796" y="231" width="201.2" height="1.5" fill="#6dbecb"/>
<path d="M796.0 224 C805.7 223 816.7 218 819.7 208.5 L820.3 214 C818.2 219 812.7 223 805.7 224.5 Z" fill="#9ad8c2" opacity=".6"/>
<path d="M860.5 224 C879.5 223 890.5 218 893.5 208.5 L894.1 214 C892.0 219 886.5 223 879.5 224.5 Z" fill="#9ad8c2" opacity=".6"/>
<path d="M933.4 224 C952.4 223 963.4 218 966.4 208.5 L967.0 214 C964.9 219 959.4 223 952.4 224.5 Z" fill="#9ad8c2" opacity=".6"/>
<line x1="796" y1="206.3" x2="796" y2="233.4" stroke="#777" stroke-width=".9"/><line x1="795.6" y1="233.4" x2="997.2" y2="233.4" stroke="#9a9ea8" stroke-width=".9"/>
<line x1="935.6" y1="202.7" x2="935.6" y2="229" stroke="#5a5a5a" stroke-width=".9"/>
<text x="803" y="215.6" font-size="7.2" fill="#222" textLength="74.2">HEATMAP(duration_ms)</text>
<rect x="885.1" y="226.7" width="23.1" height="9.6" rx="1.8" fill="#535965"/><text x="896.65" y="233.8" font-size="7" font-weight="bold" fill="#fff" text-anchor="middle" letter-spacing="-.2">a day</text>
<rect x="795.6" y="319" width="201.6" height="27.2" fill="#e7eaf3"/>
<path d="M796.3 339.0 C794.0 341.5 806.0 335 810.0 322" fill="none" stroke="#5cc0c6" stroke-width=".9"/>
<path d="M796.3 343.3 C798.0 342.5 805.0 338 808.0 331" fill="none" stroke="#8ad3d2" stroke-width=".8"/>
<path d="M844.0 343.0 C868.0 341.5 880.0 335 884.0 322" fill="none" stroke="#5cc0c6" stroke-width=".9"/>
<path d="M854.0 343.3 C872.0 342.5 879.0 338 882.0 331" fill="none" stroke="#8ad3d2" stroke-width=".8"/>
<path d="M917.5 343.0 C941.5 341.5 953.5 335 957.5 322" fill="none" stroke="#5cc0c6" stroke-width=".9"/>
<path d="M927.5 343.3 C945.5 342.5 952.5 338 955.5 331" fill="none" stroke="#8ad3d2" stroke-width=".8"/>
<line x1="796" y1="343.7" x2="997.2" y2="343.7" stroke="#35a3c2" stroke-width="1.4"/>
<line x1="796" y1="319" x2="796" y2="346.2" stroke="#555" stroke-width=".9"/><line x1="795.6" y1="346.2" x2="997.2" y2="346.2" stroke="#9a9ea8" stroke-width=".9"/>
<text x="803" y="328.9" font-size="7.2" fill="#222" textLength="113.5">HEATMAP(::::hnycolumn:durationMs)</text>
<rect x="885.1" y="339.6" width="23.1" height="9.6" rx="1.8" fill="#535965"/><text x="896.65" y="346.7" font-size="7" font-weight="bold" fill="#fff" text-anchor="middle" letter-spacing="-.2">a day</text>
<rect x="795.6" y="429" width="201.6" height="27.3" fill="#e9ebf6"/>
<path d="M796.3 431 L796.5 431.8 L798.8 440.0 L800.3 432.6 L802.3 439.3 L804.2 431.5 L805.8 438.7 L808.1 431.8 L810.4 439.2 L812.8 431.8 L814.6 439.2 L817.1 431.9 L819.1 439.5 L821.5 432.8 L823.7 438.2 L825.9 432.7 L827.5 439.0 L830.0 431.9 L832.3 438.3 L834.7 432.8 L836.6 439.6 L838.2 432.2 L839.8 438.9 L841.8 433.8 L844.1 438.6 L846.2 431.7 L848.0 437.1 L849.9 432.5 L851.6 437.6 L854.1 432.5 L856.1 439.8 L857.9 432.5 L859.6 438.4 L862.0 431.8 L864.5 438.3 L866.6 433.6 L868.3 438.6 L870.7 432.0 L873.0 440.0 L874.8 434.0 L876.8 437.9 L878.5 433.3 L880.7 438.6 L882.6 432.0 L885.1 438.5 L886.7 434.4 L889.2 437.2 L891.5 432.8 L893.3 439.5 L894.8 434.1 L896.8 437.2 L899.2 433.8 L900.9 437.2 L903.1 433.2 L905.3 439.1 L907.7 431.6 L909.9 437.7 L911.9 434.0 L913.4 438.5 L915.7 434.0 L917.5 438.1 L919.8 432.9 L922.0 439.4 L923.9 432.1 L926.4 437.4 L928.9 432.3 L930.6 438.5 L932.8 431.8 L934.7 438.8 L937.1 432.1 L939.7 438.5 L941.9 433.9 L944.2 439.6 L946.4 432.3 L948.1 439.8 L950.7 431.6 L952.8 439.5 L954.7 431.8 L957.1 438.1 L958.7 433.2 L960.8 439.4 L962.8 434.4 L965.2 437.3 L967.6 434.0 L969.5 439.5 L971.1 434.1 L973.2 439.3 L975.6 432.4 L978.2 438.6 L980.7 434.2 L982.4 438.7 L984.3 432.3 L986.5 438.7 L988.9 432.8 L990.7 438.2 L993.2 431.8 L994.9 439.7 L997 437 L997.1 455" fill="none" stroke="#9866c7" stroke-width=".8" stroke-linejoin="round"/>
<line x1="796" y1="429" x2="796" y2="456.3" stroke="#555" stroke-width=".9"/><line x1="795.6" y1="456.3" x2="997.2" y2="456.3" stroke="#80848e" stroke-width=".9"/>
<text x="803" y="438.5" font-size="7" fill="#222" font-weight="bold" textLength="22">COUNT</text>
<rect x="885.1" y="449.4" width="23.1" height="9.6" rx="1.8" fill="#535965"/><text x="896.65" y="456.5" font-size="7" font-weight="bold" fill="#fff" text-anchor="middle" letter-spacing="-.2">a day</text>
<rect x="795.6" y="529.6" width="201.6" height="26.4" fill="#e8ebf5"/>
</svg>
<!-- bottom: search + dimensions -->
<div class="abs" style="left:17.5px;top:538.8px;width:733.5px;height:24.5px;border:1.3px solid #5a9bdc;border-radius:3px;background:#fff;box-shadow:0 0 2px rgba(74,144,217,.5)"></div>
<div class="abs" style="left:23.3px;top:546px;width:1px;height:11px;background:#333"></div>
<div class="t" style="transform:scaleX(1.0245);transform-origin:left center;left:24px;top:547px;font-size:9px;color:#c3c9d5">Search BubbleUp results</div>
<div class="t" style="transform:scaleX(1.0225);transform-origin:left center;left:722.5px;top:547px;font-size:9px;color:#c9d6ea">Clear</div>
<div class="t" style="transform:scaleX(0.9703);transform-origin:left center;left:17.5px;top:575px;font-size:9px;font-weight:bold;color:#2a3040">Dimensions</div>
<div class="t bt" style="transform:scaleX(0.9817);transform-origin:left center;left:17.5px;top:595.3px">Try to</div>
<div class="abs" style="left:47px;top:594.5px;width:56.5px;height:13.5px;background:#eef1f6;border-radius:2px"></div>
<div class="t" style="left:51px;top:597.8px;font-size:6.5px;color:#444;letter-spacing:-.3px">{--}</div>
<div class="t" style="left:65.5px;top:597.6px;font-size:7px;font-weight:bold;color:#2f3545;letter-spacing:-.2px">GROUP BY</div>
<div class="t bt" style="transform:scaleX(1.0140);transform-origin:left center;left:108.5px;top:595.3px">columns that look most different between the</div>
<div class="abs" style="left:305.3px;top:597px;width:6.8px;height:7px;background:#10307f;border-radius:1.5px"></div>
<div class="t bt" style="transform:scaleX(0.9334);transform-origin:left center;left:314.5px;top:595.3px;font-weight:bold;color:#2a3040">baseline</div>
<div class="t bt" style="transform:scaleX(0.9900);transform-origin:left center;left:352.5px;top:595.3px">and</div>
<div class="abs" style="left:374px;top:597px;width:6.8px;height:7px;background:#fcaa13;border-radius:1.5px"></div>
<div class="t bt" style="transform:scaleX(0.9127);transform-origin:left center;left:383px;top:595.3px;font-weight:bold;color:#2a3040">selection<span style="font-weight:normal">.</span></div>
<div class="t bt" style="transform:scaleX(0.9711);transform-origin:left center;left:615.6px;top:595.3px">Showing</div>
<div class="abs" style="left:17.5px;top:617px;width:177.5px;height:60px;border:1px solid #e3e7ef;border-radius:2px;background:#fff"></div>
<div class="abs" style="left:29.0px;top:627.8px;width:20.3px;height:9.1px;border:1px solid #4a4f5c;border-radius:1.5px"></div>
<div class="t" style="left:29.0px;top:629px;width:20.3px;text-align:center;font-size:6.8px;color:#555a66">str</div>
<div class="t" style="left:52.8px;top:626.7px;font-family:'Liberation Mono',monospace;font-size:9.4px;color:#2f3545">http.route</div>
<div class="abs" style="left:203.3px;top:617px;width:177.2px;height:60px;border:1px solid #e3e7ef;border-radius:2px;background:#fff"></div>
<div class="abs" style="left:214.0px;top:627.8px;width:20.3px;height:9.1px;border:1px solid #4a4f5c;border-radius:1.5px"></div>
<div class="t" style="left:214.0px;top:629px;width:20.3px;text-align:center;font-size:6.8px;color:#555a66">str</div>
<div class="t" style="left:237.5px;top:626.7px;font-family:'Liberation Mono',monospace;font-size:9.4px;color:#2f3545">http.target</div>
<div class="abs" style="left:388.4px;top:617px;width:177.6px;height:60px;border:1px solid #e3e7ef;border-radius:2px;background:#fff"></div>
<div class="abs" style="left:399.5px;top:627.8px;width:20.3px;height:9.1px;border:1px solid #4a4f5c;border-radius:1.5px"></div>
<div class="t" style="left:399.5px;top:629px;width:20.3px;text-align:center;font-size:6.8px;color:#555a66">str</div>
<div class="t" style="left:422.5px;top:626.7px;font-family:'Liberation Mono',monospace;font-size:9.4px;color:#2f3545">name</div>
<div class="abs" style="left:574.4px;top:617px;width:177.6px;height:60px;border:1px solid #e3e7ef;border-radius:2px;background:#fff"></div>
<div class="abs" style="left:584.5px;top:627.8px;width:20.3px;height:9.1px;border:1px solid #4a4f5c;border-radius:1.5px"></div>
<div class="t" style="left:584.5px;top:629px;width:20.3px;text-align:center;font-size:6.8px;color:#555a66">int</div>
<div class="t" style="left:608px;top:626.7px;font-family:'Liberation Mono',monospace;font-size:9.4px;color:#2f3545">num_products</div>
<div class="abs" style="left:148.3px;top:650px;width:15.7px;height:15px;background:#fcaa13"></div>
<div class="abs" style="left:270.3px;top:650px;width:4.7px;height:15px;background:#fcaa13"></div>
<div class="abs" style="left:514.6px;top:650px;width:1px;height:15px;background:#fcaa13"></div>
<div class="abs" style="left:612.2px;top:650.5px;width:27.2px;height:15px;background:#fcaa13"></div>
<svg class="abs" style="left:0;top:615px" width="770" height="50" viewBox="0 615 770 50">
<circle cx="156.5" cy="630" r="5.05" fill="none" stroke="#d9dfea" stroke-width="3.30"/>
<line x1="156.5" y1="623.3" x2="156.5" y2="626" stroke="#3c4c8c" stroke-width=".8"/>
<circle cx="177.0" cy="630" r="5.05" fill="none" stroke="#d9dfea" stroke-width="3.30"/>
<path d="M176.12 625.03 A5.05 5.05 0 1 1 176.12 634.97" fill="none" stroke="#fcaa13" stroke-width="3.30"/>
<circle cx="342" cy="630" r="5.05" fill="none" stroke="#d9dfea" stroke-width="3.30"/>
<line x1="342" y1="623.3" x2="342" y2="626" stroke="#3c4c8c" stroke-width=".8"/>
<circle cx="362.5" cy="630" r="5.05" fill="none" stroke="#d9dfea" stroke-width="3.30"/>
<path d="M361.62 625.03 A5.05 5.05 0 1 1 361.62 634.97" fill="none" stroke="#fcaa13" stroke-width="3.30"/>
<circle cx="526.9" cy="629.5" r="4.85" fill="none" stroke="#10307f" stroke-width="4.10"/>
<circle cx="547.2" cy="629.5" r="4.85" fill="none" stroke="#fcaa13" stroke-width="4.10"/>
</svg>
<div class="abs" style="left:43.8px;top:611.3px;width:39.4px;height:39.4px;border-radius:50%;background:#1273cd;box-shadow:0 1px 4px rgba(0,0,0,.25);z-index:12"></div>
<svg class="abs" style="left:52px;top:618px;z-index:13" width="24" height="26" viewBox="52 618 24 26"><path d="M56.3 620.2 H70.6 A2.3 2.3 0 0 1 72.9 622.5 V641.9 L68.3 638.8 H56.3 A2.3 2.3 0 0 1 54 636.5 V622.5 A2.3 2.3 0 0 1 56.3 620.2 Z" fill="#fff"/><path d="M57.2 633.8 Q63.5 638.3 70 633.8" fill="none" stroke="#1273cd" stroke-width="1.1" stroke-linecap="round"/></svg>
<div class="abs" style="left:653.2px;top:584px;width:339.3px;height:90px;border-radius:13px 15px 0 0;background:linear-gradient(100deg,#0b70d0 0%,#0c68c6 45%,#0a4c9f 100%);box-shadow:0 0 6px rgba(0,0,0,.3);z-index:14"></div>
<div class="abs" style="left:0;top:0;z-index:15;color:#fff">
<div class="t" style="transform:scaleX(0.9460);transform-origin:left center;left:745.4px;top:600px;font-size:12px;font-weight:bold;color:#fff">Analyze and Debug an Issue</div>
<div class="t" style="transform:scaleX(1.0142);transform-origin:left center;left:670px;top:625.3px;font-size:8px;color:#fff">This is a public demo of Honeycomb <span style="text-decoration:underline">Learn more about Honeycomb Tracing</span></div>
<div class="t" style="transform:scaleX(0.9866);transform-origin:left center;left:901.7px;top:643.7px;font-size:9.6px;color:#fff">7 tasks pending</div>
<svg class="abs" style="left:660px;top:590px" width="330" height="75" viewBox="660 590 330 75" fill="none" stroke="#fff">
<g stroke-width="1" stroke="#dbe9fb" stroke-linecap="round" stroke-linejoin="round"><path d="M679.4 603.9 V598.9 M677.1999999999999 601.1 L679.4 598.9 L681.6 601.1"/><path d="M679.4 609.9 V614.9 M677.1999999999999 612.6999999999999 L679.4 614.9 L681.6 612.6999999999999"/><path d="M676.4 606.9 H671.4 M673.6 604.6999999999999 L671.4 606.9 L673.6 609.1"/><path d="M682.4 606.9 H687.4 M685.1999999999999 604.6999999999999 L687.4 606.9 L685.1999999999999 609.1"/></g>
<rect x="958.3" y="599.7" width="14.2" height="13.3" rx="1.5" stroke-width="1"/><path d="M965.4 602.8 V609.9 M961.8 606.35 H969" stroke-width="1"/>
<circle cx="682" cy="648.9" r="4.9" stroke-width="1"/><path d="M679.7 649.1 L681.4 650.8 L684.5 647.1999999999999" stroke-width="1"/>
<circle cx="706.9" cy="648.9" r="4.9" stroke-width="1"/><path d="M704.6 649.1 L706.3 650.8 L709.4 647.1999999999999" stroke-width="1"/>
<circle cx="731.9" cy="648.9" r="4" stroke-width="3"/>
<circle cx="756.8" cy="648.9" r="4.9" stroke-width="1"/>
<circle cx="781.7" cy="648.9" r="4.9" stroke-width="1"/>
<circle cx="806.7" cy="648.9" r="4.9" stroke-width="1"/>
<circle cx="832" cy="648.9" r="4.9" stroke-width="1"/>
<circle cx="857" cy="648.9" r="4.9" stroke-width="1"/>
<circle cx="882.4" cy="648.9" r="4.9" stroke-width="1"/>
</svg>
</div>
<!-- tooltip -->
<div class="abs" style="left:538.8px;top:325px;width:143.8px;height:237.2px;background:rgba(255,255,255,.955);border-radius:3px;box-shadow:0 1px 7px rgba(0,0,0,.28);z-index:8"></div>
<div class="abs" style="z-index:9;left:0;top:0">
  <div class="t" style="transform:scaleX(0.9757);transform-origin:left center;left:549.5px;top:334.3px;font-size:9.7px;color:#6c6c6c">HEATMAP(duration_ms)</div>
  <div class="abs" style="left:549.2px;top:347.5px;width:123.2px;height:1px;background:#b9b9b9"></div>
  <div class="t" style="transform:scaleX(1.0033);transform-origin:left center;left:554.3px;top:358px;font-size:9.5px;color:#9a9a9a">This time bucket</div>
  <div class="t" style="transform:scaleX(0.9814);transform-origin:left center;left:554.3px;top:448.2px;font-size:9.5px;color:#9a9a9a">Entire time range</div>
  <div class="abs" style="left:549px;top:539.5px;width:124px;height:1px;background:#f0f0f0"></div>
  <div class="t" style="transform:scaleX(1.0133);transform-origin:left center;left:549.3px;top:547.2px;font-size:8.1px;color:#7a7a7a">Click the data point to see traces</div>
  <svg class="abs" style="left:550px;top:365px" width="125" height="175" viewBox="550 365 125 175" font-family="Liberation Sans, sans-serif">
    <rect x="554.2" y="369.9" width="113.3" height="73.3" fill="#fff" fill-opacity=".6" stroke="#e9ecfb" stroke-width=".8"/>
    <rect x="554.2" y="459.6" width="113.3" height="73.9" fill="#fff" fill-opacity=".5" stroke="#e9ecfb" stroke-width=".8"/>
    <g stroke="#3a3a46" stroke-width="1" fill="none">
      <path d="M570.7 375.4 V429.2 H665"/>
      <path d="M570.7 465 V519.6 H665"/>
    </g>
    <g stroke="#3a3a46" stroke-width=".7">
      <line x1="567" y1="375.6" x2="570.7" y2="375.6"/><line x1="567" y1="379" x2="570.7" y2="379"/><line x1="567" y1="391.8" x2="570.7" y2="391.8"/><line x1="567" y1="404.5" x2="570.7" y2="404.5"/><line x1="567" y1="417" x2="570.7" y2="417"/><line x1="567" y1="429.3" x2="570.7" y2="429.3"/>
      <line x1="567" y1="465.3" x2="570.7" y2="465.3"/><line x1="567" y1="467.4" x2="570.7" y2="467.4"/><line x1="567" y1="476.2" x2="570.7" y2="476.2"/><line x1="567" y1="485" x2="570.7" y2="485"/><line x1="567" y1="493.8" x2="570.7" y2="493.8"/><line x1="567" y1="502.4" x2="570.7" y2="502.4"/><line x1="567" y1="511" x2="570.7" y2="511"/><line x1="567" y1="519.6" x2="570.7" y2="519.6"/>
      <line x1="570.7" y1="429.2" x2="570.7" y2="432"/><line x1="596.9" y1="429.2" x2="596.9" y2="432"/><line x1="623.3" y1="429.2" x2="623.3" y2="432"/><line x1="649.7" y1="429.2" x2="649.7" y2="432"/>
      <line x1="570.7" y1="519.6" x2="570.7" y2="522.4"/><line x1="596.9" y1="519.6" x2="596.9" y2="522.4"/><line x1="623.3" y1="519.6" x2="623.3" y2="522.4"/><line x1="649.7" y1="519.6" x2="649.7" y2="522.4"/>
    </g>
    <g font-size="4.6" fill="#777" text-anchor="end">
      <text x="564.5" y="380.6">.0k</text><text x="564.5" y="393.4">.5k</text><text x="564.5" y="406.1">.0k</text><text x="564.5" y="418.6">.5k</text><text x="564.5" y="431">0</text>
      <text x="564.5" y="469">0M</text><text x="564.5" y="477.8">5M</text><text x="564.5" y="486.6">0M</text><text x="564.5" y="495.4">5M</text><text x="564.5" y="504">0M</text><text x="564.5" y="512.6">5M</text><text x="564.5" y="521.2">0</text>
    </g>
    <g font-size="4.6" fill="#777" text-anchor="middle">
      <text x="570.7" y="439">0.0k</text><text x="596.9" y="439">1.0k</text><text x="623.3" y="439">2.0k</text><text x="649.7" y="439">3.0k</text>
      <text x="570.7" y="529.3">0.0k</text><text x="596.9" y="529.3">1.0k</text><text x="623.3" y="529.3">2.0k</text><text x="649.7" y="529.3">3.0k</text>
    </g>
    <path d="M571.6 375.4 L573 398 L574.6 420.7 L576.3 425.5 L578 428 L581 428.6 L586 428.4 L592 428.8 L600 429" fill="none" stroke="#9b6fd0" stroke-width=".9"/>
    <path d="M571.6 465 L573 488 L574.6 511.5 L576.3 516 L578 518.5 L581 519 L586 518.7 L592 519.2 L600 519.4" fill="none" stroke="#9b6fd0" stroke-width=".9"/>
  </svg>
</div>

</body>
</html>
